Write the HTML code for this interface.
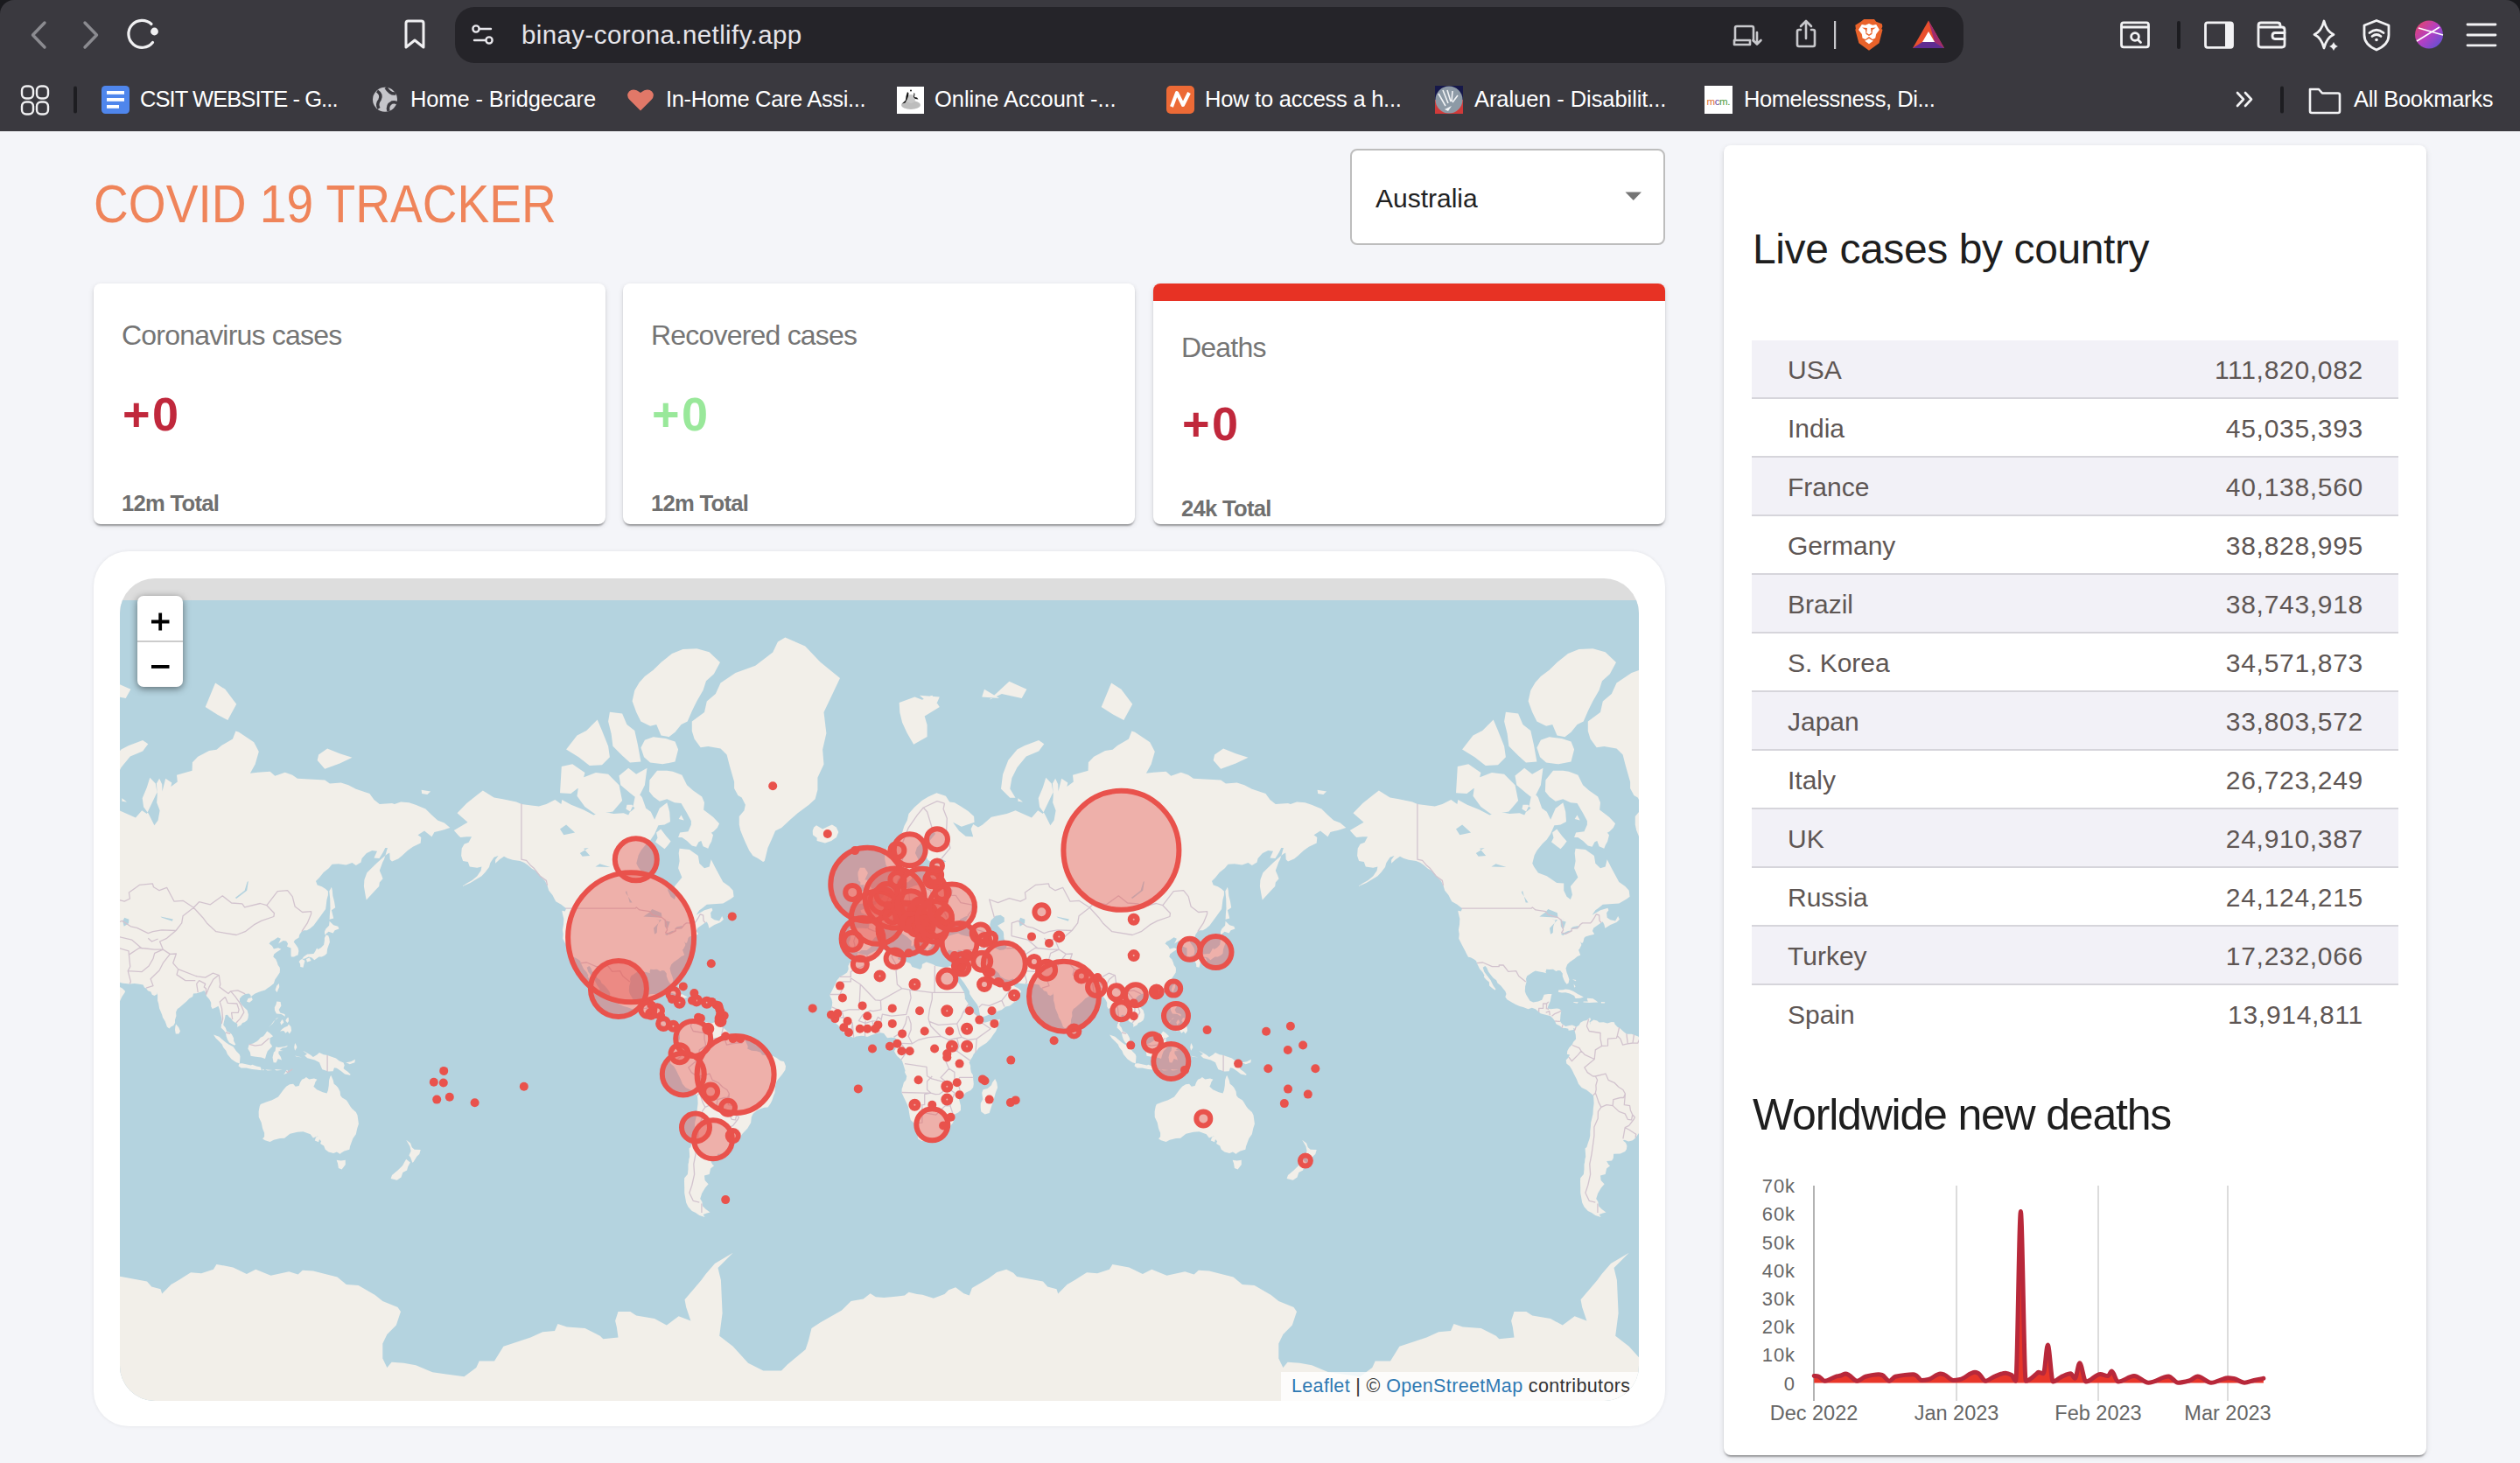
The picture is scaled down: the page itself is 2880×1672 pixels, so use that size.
<!DOCTYPE html>
<html><head><meta charset="utf-8"><title>COVID 19 TRACKER</title><style>
*{margin:0;padding:0;box-sizing:border-box}
html,body{width:2880px;height:1672px;overflow:hidden;background:#f4f5f9;font-family:"Liberation Sans",sans-serif;position:relative}
.a{position:absolute}
#chrome{left:0;top:0;width:2880px;height:150px;background:#3a393f;}
#chrome .corner{width:20px;height:20px;background:#1a1a1e}
#url{left:520px;top:8px;width:1724px;height:64px;background:#252429;border-radius:22px}
.bm{top:88px;height:50px;color:#fff;font-size:25.5px;line-height:50px;white-space:nowrap}
#title{left:107px;top:197px;font-size:62px;color:#ef845a;line-height:72px;white-space:nowrap;transform-origin:0 0;transform:scaleX(0.889)}
.card{background:#fff;border-radius:8px;box-shadow:0 4px 2px -2px rgba(0,0,0,0.2),0 2px 2px 0 rgba(0,0,0,0.14),0 2px 6px 0 rgba(0,0,0,0.12)}
.lbl{font-size:32px;color:#757575;letter-spacing:-0.8px;white-space:nowrap;line-height:40px}
.num{font-size:54px;font-weight:bold;line-height:60px;white-space:nowrap;letter-spacing:2.5px}
.tot{font-size:25.6px;font-weight:bold;color:#6f6f6f;letter-spacing:-0.7px;line-height:30px;white-space:nowrap}
#drop{left:1543px;top:170px;width:360px;height:110px;background:#fff;border:2.5px solid #bdbdbd;border-radius:8px}
#rc{left:1970px;top:166px;width:803px;height:1497px}
.h2{font-size:50px;color:#1e1e1e;white-space:nowrap;line-height:60px}
.row{left:2002px;width:739px;height:67px;border-bottom:2px solid #d6d5db}
.row.s{background:#f2f1f7}
.row span{position:absolute;top:0;line-height:67px;font-size:30px;color:#5e5654;white-space:nowrap}
.row span.n{letter-spacing:0.7px}
#mapcard{left:107px;top:630px;width:1796px;height:1000px;background:#fff;border-radius:40px;box-shadow:0 0 4px rgba(0,0,0,0.08)}
#map{left:137px;top:661px;width:1736px;height:940px;border-radius:40px 40px 40px 40px;overflow:hidden;background:#dddddd}
</style></head>
<body>
<div id="chrome" class="a">
<div class="a corner" style="left:0;top:0"></div><div class="a corner" style="right:0;top:0"></div>
<div class="a" style="left:0;top:0;width:2880px;height:150px;background:#3a393f;border-radius:16px 16px 0 0"></div>
<svg class="a" style="left:0;top:0" width="520" height="150" viewBox="0 0 520 150">
<path d="M51 26 L37.5 40 L51 54" fill="none" stroke="#8b8b90" stroke-width="3.4" stroke-linecap="round" stroke-linejoin="round"/>
<path d="M97 26 L110.5 40 L97 54" fill="none" stroke="#8b8b90" stroke-width="3.4" stroke-linecap="round" stroke-linejoin="round"/>
<path d="M174.5 48.5 A15.5 15.5 0 1 1 173 27.5" fill="none" stroke="#f0f0f2" stroke-width="3.2" stroke-linecap="round"/>
<circle cx="176.5" cy="36" r="4.4" fill="#f0f0f2"/>
<path d="M464 26.5 Q464 24 466.5 24 L481.5 24 Q484 24 484 26.5 L484 54 L474 46 L464 54 Z" fill="none" stroke="#f0f0f2" stroke-width="3" stroke-linejoin="round"/>
<g fill="none" stroke="#f0f0f2" stroke-width="2.4">
<rect x="25" y="98.5" width="13" height="14" rx="5"/><rect x="42" y="98.5" width="13" height="14" rx="5"/>
<rect x="25" y="116.5" width="13" height="14" rx="5"/><rect x="42" y="116.5" width="13" height="14" rx="5"/>
</g>
<rect x="84" y="98.5" width="4" height="31" rx="2" fill="#1d1d21"/>
<rect x="116" y="98" width="32" height="32" rx="4.5" fill="#4f86ec"/>
<rect x="122" y="104" width="20" height="3.8" fill="#fff"/><rect x="122" y="112" width="20" height="3.8" fill="#fff"/><rect x="122" y="120" width="14" height="3.8" fill="#fff"/>
<circle cx="440" cy="113.8" r="14" fill="#c5c5ca"/>
<path d="M431 104 Q437 108 434 114 Q430 119 433 124 M441 100 Q446 108 452 107 M444 127 Q442 120 448 117 Q452 116 454 118" fill="none" stroke="#3a393f" stroke-width="3.5"/>
</svg>
</div>
<div id="url" class="a"></div>
<svg class="a" style="left:530px;top:20px" width="50" height="40" viewBox="530 20 50 40">
<circle cx="544" cy="33" r="3.6" fill="none" stroke="#e8e7ec" stroke-width="2.4"/>
<path d="M548 33 L561 33" stroke="#e8e7ec" stroke-width="2.4" stroke-linecap="round"/>
<circle cx="559" cy="46" r="3.6" fill="none" stroke="#e8e7ec" stroke-width="2.4"/>
<path d="M542 46 L555 46" stroke="#e8e7ec" stroke-width="2.4" stroke-linecap="round"/>
</svg>
<div class="a" style="left:596px;top:20px;font-size:29.5px;line-height:40px;color:#e6e5ea;letter-spacing:0.4px;white-space:nowrap">binay-corona.netlify.app</div>
<svg class="a" style="left:1970px;top:15px" width="270" height="50" viewBox="1970 15 270 50">
<g fill="none" stroke="#c8c8cc" stroke-width="2.6" stroke-linejoin="round" stroke-linecap="round">
<path d="M2004 47 L2004 32 Q2004 30 2002 30 L1985 30 Q1983 30 1983 32 L1983 46"/>
<path d="M1982 46 L2000 46 L2000 51 L1982 51 Z"/>
<path d="M2008 37 L2008 50 M2003.5 46 L2008 50.5 L2012.5 46"/>
<path d="M2058 34 L2056 34 Q2054 34 2054 36 L2054 51 Q2054 53 2056 53 L2072 53 Q2074 53 2074 51 L2074 36 Q2074 34 2072 34 L2070 34"/>
<path d="M2064 44 L2064 24 M2058 30 L2064 24 L2070 30"/>
</g>
<rect x="2096" y="24" width="2.2" height="32" fill="#c8c8cc"/>
<path d="M2130.2,22 L2142,22 L2144.2,24.7 L2150.7,27.3 L2151.4,30 L2150.3,33.1 L2151.5,34.1 L2147.6,49.2 L2136,57.7 L2124.4,49.2 L2120.3,34.1 L2120.9,32.8 L2120.3,28.7 L2126.4,24.9 Z" fill="#e9622a"/>
<path d="M2124,34.1 L2127.8,28 L2131.9,28.7 L2136,27 L2140.1,28.7 L2144.2,28 L2147.9,34.1 L2144.2,38.9 L2143.2,43.4 L2140.1,45.1 L2136,42 L2131.9,45.1 L2128.5,43.4 L2127.8,38.9 Z" fill="#fff"/>
<path d="M2128.1,31.4 L2133.9,32.1 L2133.2,37.6 L2136,39.6 L2138.7,37.6 L2138,32.1 L2143.8,31.4 L2140.1,34.1 L2139.4,38.9 L2136,41 L2132.6,38.9 L2131.9,34.1 Z" fill="#e9622a"/>
<path d="M2131.2,46.8 L2136,44.1 L2140.8,46.8 L2136,50.2 Z" fill="#fff"/>
<path d="M2204 23.5 L2222 55 L2186 55 Z" fill="#e9502e"/>
<path d="M2204 23.5 L2222 55 L2211 48 Z" fill="#9e2a70"/>
<path d="M2186 55 L2222 55 L2211 48 L2197 48 Z" fill="#5f2c91"/>
<path d="M2204 36 L2211 48 L2197 48 Z" fill="#fff"/>
</svg>
<svg class="a" style="left:2410px;top:15px" width="470" height="50" viewBox="2410 15 470 50">
<g fill="none" stroke="#f2f2f4" stroke-width="2.8" stroke-linejoin="round" stroke-linecap="round">
<rect x="2424.5" y="25.8" width="31" height="28" rx="2.5"/>
<path d="M2425 31 L2455 31"/>
<circle cx="2440" cy="42" r="4.4"/><path d="M2443.5 45.5 L2446.5 48.5"/>
<rect x="2520.5" y="25.8" width="31" height="28.5" rx="2.5"/>
<path d="M2581 29 Q2581 26 2584 26 L2603 26 Q2606 26 2606 29 L2606 31 M2581 29 L2581 51 Q2581 54 2584 54 L2608 54 Q2611 54 2611 51 L2611 34 Q2611 31 2608 31 L2583 31"/>
<path d="M2611 37.5 L2600 37.5 Q2597 37.5 2597 41 Q2597 44.5 2600 44.5 L2611 44.5"/>
<path d="M2656 24 Q2659 36 2667 39.5 Q2659 43 2656 55 Q2653 43 2645 39.5 Q2653 36 2656 24 Z"/>
<path d="M2716 23.5 L2702 29 L2702 40 Q2702 51 2716 57 Q2730 51 2730 40 L2730 29 Z"/>
<path d="M2708 37.5 Q2716 31 2724 37.5 M2711 41.5 Q2716 37.5 2721 41.5"/>
<path d="M2820 28 L2852 28 M2820 40 L2852 40 M2820 51.8 L2852 51.8"/>
</g>
<rect x="2488" y="24" width="4" height="32" rx="2" fill="#1c1c20"/>
<rect x="2543" y="27" width="8" height="26" fill="#f2f2f4"/>
<path d="M2667 48 Q2668.5 52 2672 53 Q2668.5 54 2667 58 Q2665.5 54 2662 53 Q2665.5 52 2667 48 Z" fill="#f2f2f4"/>
<circle cx="2716" cy="45.5" r="1.8" fill="#f2f2f4"/>
<defs><linearGradient id="pg" x1="0" y1="0" x2="1" y2="1"><stop offset="0" stop-color="#e8455f"/><stop offset="0.5" stop-color="#b43fc4"/><stop offset="1" stop-color="#4f55d6"/></linearGradient></defs>
<circle cx="2776" cy="39.5" r="16" fill="url(#pg)"/>
<path d="M2762 47 L2788 31 M2764 32 L2792 40" stroke="#fff" stroke-width="1.6"/>
</svg>
<div class="a bm" style="left:160px;letter-spacing:-0.93px">CSIT WEBSITE - G...</div>
<div class="a bm" style="left:469px;letter-spacing:-0.12px">Home - Bridgecare</div>
<div class="a bm" style="left:761px;letter-spacing:-0.35px">In-Home Care Assi...</div>
<div class="a bm" style="left:1068px;letter-spacing:-0.04px">Online Account -...</div>
<div class="a bm" style="left:1377px;letter-spacing:-0.25px">How to access a h...</div>
<div class="a bm" style="left:1685px;letter-spacing:-0.08px">Araluen - Disabilit...</div>
<div class="a bm" style="left:1993px;letter-spacing:-0.44px">Homelessness, Di...</div>
<div class="a bm" style="left:2690px;letter-spacing:-0.29px">All Bookmarks</div>
<svg class="a" style="left:700px;top:90px" width="2200" height="50" viewBox="700 90 2200 50">
<path d="M732 126.5 L719.5 114 Q715 109 719 104.5 Q724 100 732 106 Q740 100 745 104.5 Q749 109 744.5 114 Z" fill="#e17868"/>
<rect x="1025" y="99" width="31" height="31" fill="#fff"/>
<ellipse cx="1041" cy="120" rx="11" ry="5" fill="#bdbdbd"/>
<ellipse cx="1041" cy="113" rx="5" ry="5" fill="#c8c8c8"/>
<path d="M1037 105 L1038.5 106.5 L1038 110 L1036.5 114 L1034.5 117.5 L1031 118.5 L1035 114.5 L1035.5 110 Z" fill="#111"/>
<path d="M1044.5 106 L1045.5 107 L1045 111 L1048 111.5 L1049.5 113.5 L1046 113 L1044 111 Z" fill="#111"/>
<circle cx="1041" cy="103.5" r="1" fill="#111"/>
<rect x="1333" y="98" width="32" height="32" rx="5" fill="#ec6a36"/>
<path d="M1339 122 L1345 106 L1352 120 L1359 106" fill="none" stroke="#fff" stroke-width="4" stroke-linejoin="round"/>
<rect x="1640" y="98" width="32" height="16" fill="#16184a"/><rect x="1640" y="114" width="32" height="16" fill="#d03a3a"/>
<circle cx="1656" cy="114" r="15.5" fill="#8d9aa6"/>
<path d="M1644 107 L1652 121 M1649 103 L1655 118 M1654 103 L1658 116 M1660 104 L1659 116 M1666 109 L1660 117" stroke="#f2f4f6" stroke-width="1.6"/>
<path d="M1651 125 L1659 121 L1655 127 Z" fill="#f2f4f6"/>
<rect x="1948" y="98" width="32" height="32" fill="#fff"/>
<text x="1950.5" y="120" font-family="Liberation Sans" font-size="11.5" letter-spacing="-0.4"><tspan fill="#e07030">m</tspan><tspan fill="#6a4aa0">c</tspan><tspan fill="#4a9a3a">m.</tspan></text>
<path d="M2557 106 L2564 113.5 L2557 121 M2566 106 L2573 113.5 L2566 121" fill="none" stroke="#f2f2f4" stroke-width="2.6" stroke-linecap="round" stroke-linejoin="round"/>
<rect x="2606" y="98.5" width="4" height="31" rx="2" fill="#1d1d21"/>
<path d="M2640 102 L2650 102 L2654 106.5 L2672 106.5 Q2674 106.5 2674 108.5 L2674 127 Q2674 129 2672 129 L2642 129 Q2640 129 2640 127 Z" fill="none" stroke="#f2f2f4" stroke-width="2.6" stroke-linejoin="round"/>
</svg>
<div id="title" class="a">COVID 19 TRACKER</div>
<div id="drop" class="a"><div class="a" style="left:27px;top:35px;font-size:30px;line-height:40px;color:#212121">Australia</div><svg class="a" style="left:311px;top:46px" width="22" height="12" viewBox="0 0 22 12"><path d="M1.5 1.5 L20 1.5 L10.75 11 Z" fill="#757575"/></svg></div>
<div class="a card" style="left:107px;top:324px;width:585px;height:275px;overflow:hidden">
<div class="a lbl" style="left:32px;top:39px">Coronavirus cases</div>
<div class="a num" style="left:33px;top:119px;color:#c0283c">+0</div>
<div class="a tot" style="left:32px;top:236px">12m Total</div>
</div>
<div class="a card" style="left:712px;top:324px;width:585px;height:275px;overflow:hidden">
<div class="a lbl" style="left:32px;top:39px">Recovered cases</div>
<div class="a num" style="left:33px;top:119px;color:#99e89a">+0</div>
<div class="a tot" style="left:32px;top:236px">12m Total</div>
</div>
<div class="a card" style="left:1318px;top:324px;width:585px;height:275px;overflow:hidden">
<div class="a" style="left:0;top:0;width:585px;height:20px;background:#e73224"></div>
<div class="a lbl" style="left:32px;top:53px">Deaths</div>
<div class="a num" style="left:33px;top:130px;color:#c0283c">+0</div>
<div class="a tot" style="left:32px;top:242px">24k Total</div>
</div>
<div id="rc" class="a card"></div>
<div class="a h2" style="left:2003px;top:255px;font-size:48px;letter-spacing:-0.4px">Live cases by country</div>
<div class="a row s" style="top:389px"><span style="left:41px">USA</span><span class="n" style="right:40px">111,820,082</span></div>
<div class="a row" style="top:456px"><span style="left:41px">India</span><span class="n" style="right:40px">45,035,393</span></div>
<div class="a row s" style="top:523px"><span style="left:41px">France</span><span class="n" style="right:40px">40,138,560</span></div>
<div class="a row" style="top:590px"><span style="left:41px">Germany</span><span class="n" style="right:40px">38,828,995</span></div>
<div class="a row s" style="top:657px"><span style="left:41px">Brazil</span><span class="n" style="right:40px">38,743,918</span></div>
<div class="a row" style="top:724px"><span style="left:41px">S. Korea</span><span class="n" style="right:40px">34,571,873</span></div>
<div class="a row s" style="top:791px"><span style="left:41px">Japan</span><span class="n" style="right:40px">33,803,572</span></div>
<div class="a row" style="top:858px"><span style="left:41px">Italy</span><span class="n" style="right:40px">26,723,249</span></div>
<div class="a row s" style="top:925px"><span style="left:41px">UK</span><span class="n" style="right:40px">24,910,387</span></div>
<div class="a row" style="top:992px"><span style="left:41px">Russia</span><span class="n" style="right:40px">24,124,215</span></div>
<div class="a row s" style="top:1059px"><span style="left:41px">Turkey</span><span class="n" style="right:40px">17,232,066</span></div>
<div class="a row" style="top:1126px;border-bottom:none"><span style="left:41px">Spain</span><span class="n" style="right:40px">13,914,811</span></div>
<div class="a h2" style="left:2003px;top:1244px;font-size:50px;letter-spacing:-1.2px">Worldwide new deaths</div>
<svg class="a" style="left:1990px;top:1330px" width="640" height="310" viewBox="1990 1330 640 310">
<rect x="2235" y="1355" width="2" height="246" fill="#dcdcdc"/>
<rect x="2397" y="1355" width="2" height="246" fill="#dcdcdc"/>
<rect x="2545" y="1355" width="2" height="246" fill="#dcdcdc"/>
<rect x="2072" y="1355" width="2" height="246" fill="#b3b3b3"/>
<text x="2052" y="1588.6" text-anchor="end" font-family="Liberation Sans" font-size="22" letter-spacing="0.9" fill="#666">0</text>
<text x="2052" y="1556.4" text-anchor="end" font-family="Liberation Sans" font-size="22" letter-spacing="0.9" fill="#666">10k</text>
<text x="2052" y="1524.2" text-anchor="end" font-family="Liberation Sans" font-size="22" letter-spacing="0.9" fill="#666">20k</text>
<text x="2052" y="1492.0" text-anchor="end" font-family="Liberation Sans" font-size="22" letter-spacing="0.9" fill="#666">30k</text>
<text x="2052" y="1459.8" text-anchor="end" font-family="Liberation Sans" font-size="22" letter-spacing="0.9" fill="#666">40k</text>
<text x="2052" y="1427.6" text-anchor="end" font-family="Liberation Sans" font-size="22" letter-spacing="0.9" fill="#666">50k</text>
<text x="2052" y="1395.4" text-anchor="end" font-family="Liberation Sans" font-size="22" letter-spacing="0.9" fill="#666">60k</text>
<text x="2052" y="1363.2" text-anchor="end" font-family="Liberation Sans" font-size="22" letter-spacing="0.9" fill="#666">70k</text>
<text x="2073" y="1622.5" text-anchor="middle" font-family="Liberation Sans" font-size="23.5" fill="#666">Dec 2022</text>
<text x="2236" y="1622.5" text-anchor="middle" font-family="Liberation Sans" font-size="23.5" fill="#666">Jan 2023</text>
<text x="2398" y="1622.5" text-anchor="middle" font-family="Liberation Sans" font-size="23.5" fill="#666">Feb 2023</text>
<text x="2546" y="1622.5" text-anchor="middle" font-family="Liberation Sans" font-size="23.5" fill="#666">Mar 2023</text>
<path d="M2073.2,1572.4 C2074.8,1572.6 2076.4,1572.7 2078.0,1573.0 C2080.5,1573.5 2083.0,1578.2 2085.5,1578.2 C2089.6,1578.2 2093.7,1574.4 2097.8,1573.3 C2099.9,1572.7 2101.9,1572.6 2104.0,1572.0 C2105.8,1571.5 2107.5,1570.0 2109.3,1570.0 C2110.5,1570.0 2111.8,1570.9 2113.0,1571.5 C2116.1,1573.1 2119.3,1578.2 2122.4,1578.2 C2125.6,1578.2 2128.8,1574.1 2132.0,1573.3 C2137.0,1572.0 2142.0,1570.8 2147.0,1570.8 C2148.3,1570.8 2149.7,1571.1 2151.0,1571.5 C2153.8,1572.3 2156.5,1578.2 2159.3,1578.2 C2161.5,1578.2 2163.8,1573.8 2166.0,1573.3 C2172.8,1571.9 2179.6,1570.8 2186.4,1570.8 C2187.6,1570.8 2188.8,1571.4 2190.0,1572.0 C2192.1,1573.0 2194.1,1577.4 2196.2,1577.4 C2198.8,1577.4 2201.4,1577.0 2204.0,1576.5 C2208.5,1575.7 2213.1,1570.0 2217.6,1570.0 C2219.1,1570.0 2220.5,1570.5 2222.0,1571.0 C2225.4,1572.1 2228.9,1577.4 2232.3,1577.4 C2234.9,1577.4 2237.4,1577.0 2240.0,1576.5 C2245.7,1575.4 2251.3,1568.3 2257.0,1568.3 C2258.3,1568.3 2259.7,1568.9 2261.0,1569.5 C2263.7,1570.8 2266.5,1578.2 2269.2,1578.2 C2272.5,1578.2 2275.7,1574.6 2279.0,1573.3 C2283.4,1571.6 2287.8,1569.2 2292.2,1569.2 C2294.5,1569.2 2296.7,1570.3 2299.0,1571.5 C2300.6,1572.4 2302.1,1578.2 2303.7,1578.2 C2305.6,1578.2 2307.5,1384.6 2309.4,1384.6 C2311.3,1384.6 2313.3,1578.2 2315.2,1578.2 C2319.3,1578.2 2323.4,1573.2 2327.5,1570.0 C2328.1,1569.5 2328.8,1568.2 2329.4,1568.2 C2331.4,1568.2 2333.4,1569.8 2335.4,1569.8 C2337.0,1569.8 2338.7,1537.1 2340.3,1537.1 C2342.3,1537.1 2344.3,1579.1 2346.3,1579.1 C2349.7,1579.1 2353.2,1574.6 2356.6,1573.1 C2359.9,1571.7 2363.2,1569.8 2366.5,1569.8 C2368.1,1569.8 2369.8,1575.3 2371.4,1575.3 C2373.2,1575.3 2375.0,1557.8 2376.8,1557.8 C2379.2,1557.8 2381.5,1579.1 2383.9,1579.1 C2389.4,1579.1 2394.8,1570.4 2400.3,1570.4 C2403.2,1570.4 2406.1,1572.6 2409.0,1572.6 C2410.5,1572.6 2411.9,1567.1 2413.4,1567.1 C2415.8,1567.1 2418.1,1579.1 2420.5,1579.1 C2426.7,1579.1 2432.8,1572.6 2439.0,1572.6 C2444.5,1572.6 2449.9,1580.2 2455.4,1580.2 C2463.0,1580.2 2470.7,1573.1 2478.3,1573.1 C2481.9,1573.1 2485.6,1580.2 2489.2,1580.2 C2493.4,1580.2 2497.6,1579.1 2501.8,1578.0 C2505.1,1577.2 2508.3,1573.1 2511.6,1573.1 C2516.7,1573.1 2521.8,1580.2 2526.9,1580.2 C2533.4,1580.2 2540.0,1574.7 2546.5,1574.7 C2548.7,1574.7 2550.8,1575.1 2553.0,1575.5 C2557.0,1576.3 2561.1,1580.2 2565.1,1580.2 C2568.7,1580.2 2572.4,1578.3 2576.0,1577.5 C2579.6,1576.7 2583.3,1576.0 2586.9,1575.3 L2586.9,1580.6 L2073.2,1580.6 Z" fill="#e8362a"/>
<path d="M2073.2,1572.4 C2074.8,1572.6 2076.4,1572.7 2078.0,1573.0 C2080.5,1573.5 2083.0,1578.2 2085.5,1578.2 C2089.6,1578.2 2093.7,1574.4 2097.8,1573.3 C2099.9,1572.7 2101.9,1572.6 2104.0,1572.0 C2105.8,1571.5 2107.5,1570.0 2109.3,1570.0 C2110.5,1570.0 2111.8,1570.9 2113.0,1571.5 C2116.1,1573.1 2119.3,1578.2 2122.4,1578.2 C2125.6,1578.2 2128.8,1574.1 2132.0,1573.3 C2137.0,1572.0 2142.0,1570.8 2147.0,1570.8 C2148.3,1570.8 2149.7,1571.1 2151.0,1571.5 C2153.8,1572.3 2156.5,1578.2 2159.3,1578.2 C2161.5,1578.2 2163.8,1573.8 2166.0,1573.3 C2172.8,1571.9 2179.6,1570.8 2186.4,1570.8 C2187.6,1570.8 2188.8,1571.4 2190.0,1572.0 C2192.1,1573.0 2194.1,1577.4 2196.2,1577.4 C2198.8,1577.4 2201.4,1577.0 2204.0,1576.5 C2208.5,1575.7 2213.1,1570.0 2217.6,1570.0 C2219.1,1570.0 2220.5,1570.5 2222.0,1571.0 C2225.4,1572.1 2228.9,1577.4 2232.3,1577.4 C2234.9,1577.4 2237.4,1577.0 2240.0,1576.5 C2245.7,1575.4 2251.3,1568.3 2257.0,1568.3 C2258.3,1568.3 2259.7,1568.9 2261.0,1569.5 C2263.7,1570.8 2266.5,1578.2 2269.2,1578.2 C2272.5,1578.2 2275.7,1574.6 2279.0,1573.3 C2283.4,1571.6 2287.8,1569.2 2292.2,1569.2 C2294.5,1569.2 2296.7,1570.3 2299.0,1571.5 C2300.6,1572.4 2302.1,1578.2 2303.7,1578.2 C2305.6,1578.2 2307.5,1384.6 2309.4,1384.6 C2311.3,1384.6 2313.3,1578.2 2315.2,1578.2 C2319.3,1578.2 2323.4,1573.2 2327.5,1570.0 C2328.1,1569.5 2328.8,1568.2 2329.4,1568.2 C2331.4,1568.2 2333.4,1569.8 2335.4,1569.8 C2337.0,1569.8 2338.7,1537.1 2340.3,1537.1 C2342.3,1537.1 2344.3,1579.1 2346.3,1579.1 C2349.7,1579.1 2353.2,1574.6 2356.6,1573.1 C2359.9,1571.7 2363.2,1569.8 2366.5,1569.8 C2368.1,1569.8 2369.8,1575.3 2371.4,1575.3 C2373.2,1575.3 2375.0,1557.8 2376.8,1557.8 C2379.2,1557.8 2381.5,1579.1 2383.9,1579.1 C2389.4,1579.1 2394.8,1570.4 2400.3,1570.4 C2403.2,1570.4 2406.1,1572.6 2409.0,1572.6 C2410.5,1572.6 2411.9,1567.1 2413.4,1567.1 C2415.8,1567.1 2418.1,1579.1 2420.5,1579.1 C2426.7,1579.1 2432.8,1572.6 2439.0,1572.6 C2444.5,1572.6 2449.9,1580.2 2455.4,1580.2 C2463.0,1580.2 2470.7,1573.1 2478.3,1573.1 C2481.9,1573.1 2485.6,1580.2 2489.2,1580.2 C2493.4,1580.2 2497.6,1579.1 2501.8,1578.0 C2505.1,1577.2 2508.3,1573.1 2511.6,1573.1 C2516.7,1573.1 2521.8,1580.2 2526.9,1580.2 C2533.4,1580.2 2540.0,1574.7 2546.5,1574.7 C2548.7,1574.7 2550.8,1575.1 2553.0,1575.5 C2557.0,1576.3 2561.1,1580.2 2565.1,1580.2 C2568.7,1580.2 2572.4,1578.3 2576.0,1577.5 C2579.6,1576.7 2583.3,1576.0 2586.9,1575.3" fill="none" stroke="#b8283a" stroke-width="5" stroke-linejoin="round" stroke-linecap="round"/>
</svg>
<div id="mapcard" class="a"></div>
<div id="map" class="a"><svg class="a" style="left:0;top:0" width="1736" height="940" viewBox="137 661 1736 940">
<rect x="137" y="686" width="1736" height="915" fill="#b4d3df"/>
<g transform="translate(-1024,0)"><path d="M518.8,948.9 534.5,939.7 522.5,929.3 533.4,918.1 544.7,908.9 551.8,903.6 564.6,911.5 574.6,913.2 590.2,916.5 595.9,919.0 607.3,920.6 615.8,921.4 624.4,919.0 634.3,914.0 641.4,919.0 642.3,914.0 652.8,919.8 667.0,925.4 678.4,931.6 689.8,927.7 701.2,930.0 712.6,929.3 718.2,931.6 723.9,919.8 727.3,902.7 733.9,911.5 738.2,923.8 743.8,927.7 748.1,936.8 753.8,923.8 762.3,917.3 765.2,927.7 766.0,939.0 759.5,942.6 752.4,943.3 748.1,953.0 743.8,959.6 739.0,964.1 732.5,972.1 729.6,977.5 727.3,986.7 729.1,990.6 733.9,997.6 743.8,1001.3 755.2,1008.9 763.2,1009.4 763.2,1017.7 766.6,1024.7 770.9,1028.0 772.9,1022.4 770.9,1012.9 779.4,1002.8 775.1,992.2 776.6,983.9 775.7,975.1 776.6,969.7 787.9,970.9 797.9,978.1 799.3,986.7 805.0,992.2 810.7,990.6 812.7,982.2 817.8,992.2 822.1,1000.2 826.3,1007.9 833.4,1012.9 837.7,1017.7 838.6,1024.7 834.9,1027.5 826.3,1032.5 815.0,1033.3 807.8,1033.8 802.2,1038.2 799.3,1040.3 795.6,1045.8 805.0,1040.3 813.5,1037.7 814.4,1040.3 812.1,1043.3 812.7,1048.7 816.4,1051.2 822.1,1052.4 825.2,1047.1 826.9,1050.8 823.5,1054.1 816.4,1056.9 810.4,1060.8 809.3,1056.5 807.8,1053.6 805.9,1054.5 801.3,1057.7 797.3,1060.4 795.9,1063.9 798.2,1067.4 796.2,1068.2 792.8,1068.9 787.9,1070.4 786.5,1071.9 785.4,1076.4 784.0,1078.2 782.2,1076.0 783.4,1080.0 781.1,1084.4 780.0,1085.4 782.2,1091.4 778.8,1093.1 775.1,1095.9 770.0,1099.6 767.2,1102.3 765.5,1106.7 766.6,1111.6 767.7,1114.2 769.4,1119.3 768.6,1123.4 766.6,1124.7 764.6,1122.2 763.2,1119.6 761.8,1115.8 761.8,1112.6 759.2,1109.3 756.6,1109.0 754.4,1110.0 751.0,1107.7 746.7,1108.0 743.3,1107.7 742.4,1110.9 743.3,1112.2 739.6,1111.3 735.3,1110.6 730.8,1109.6 727.9,1110.9 724.5,1113.2 721.1,1115.5 720.0,1118.7 720.5,1122.2 719.1,1127.2 718.8,1133.1 720.2,1136.8 722.8,1141.0 724.5,1143.7 728.2,1145.5 733.9,1144.6 738.2,1142.8 739.6,1139.5 740.7,1136.8 745.3,1135.9 749.5,1135.9 748.7,1138.9 747.8,1144.0 746.1,1147.9 744.4,1152.4 748.1,1153.3 755.2,1152.4 758.1,1153.0 760.3,1155.3 759.5,1159.7 759.2,1164.1 758.9,1167.0 760.9,1169.9 763.8,1171.9 765.2,1173.1 769.4,1171.9 772.9,1171.4 776.3,1173.1 777.1,1173.9 776.6,1176.0 774.0,1175.1 774.6,1177.1 768.6,1177.7 768.3,1175.7 765.2,1175.1 761.2,1174.8 759.2,1172.8 754.4,1170.2 753.2,1167.0 750.4,1163.5 748.1,1161.2 745.3,1160.6 740.4,1159.2 736.7,1158.3 734.5,1156.2 730.8,1153.3 726.8,1151.8 722.5,1153.3 716.8,1150.9 712.8,1150.0 708.3,1147.9 704.6,1146.1 701.2,1144.0 698.3,1142.2 696.3,1139.2 697.5,1135.9 696.3,1132.8 694.4,1130.6 691.2,1126.6 687.5,1123.4 686.1,1120.3 682.7,1117.7 679.8,1114.2 677.0,1110.6 675.3,1106.3 673.3,1104.0 670.7,1105.7 672.2,1110.6 675.9,1115.5 679.6,1120.3 682.1,1125.6 683.5,1127.8 685.5,1130.6 684.4,1131.6 681.6,1129.4 678.1,1126.6 677.9,1122.5 674.4,1119.6 671.9,1116.4 672.4,1114.8 670.5,1111.3 667.0,1107.3 665.1,1103.3 663.9,1100.7 663.1,1098.3 660.5,1096.2 659.1,1095.6 656.8,1094.2 654.0,1093.8 652.0,1090.0 650.3,1086.5 648.6,1083.3 647.1,1080.4 644.9,1076.0 643.2,1072.7 643.7,1067.4 642.9,1062.8 644.0,1056.5 644.3,1050.0 642.6,1042.9 642.3,1040.8 645.7,1041.6 647.1,1038.2 641.4,1033.8 635.2,1030.2 633.5,1027.0 631.5,1022.9 627.2,1017.7 625.5,1011.9 623.0,1006.9 617.8,1001.3 613.6,996.0 607.9,992.8 603.0,988.4 599.3,986.1 594.5,983.9 586.0,982.7 580.3,981.0 576.0,978.7 570.9,982.2 566.1,986.7 566.1,982.7 569.5,978.1 564.6,979.8 560.4,986.1 559.0,991.1 554.4,997.1 550.4,1001.3 543.3,1005.4 537.6,1008.9 531.9,1011.4 528.2,1012.9 533.4,1009.4 539.6,1005.9 545.3,1001.3 549.6,994.9 550.4,990.6 545.3,991.7 536.8,990.6 534.8,985.0 529.1,983.9 527.1,978.1 527.7,969.7 530.5,964.7 535.6,962.8 539.0,956.3 533.4,956.3 526.2,957.0 523.4,954.3 518.8,948.9ZM777.1,1173.9 780.8,1171.6 782.2,1168.8 785.7,1166.7 789.4,1166.1 793.1,1163.0 794.2,1165.3 792.5,1167.3 793.6,1171.4 793.3,1168.2 797.3,1165.6 801.3,1166.4 803.6,1168.5 808.7,1168.2 813.0,1169.6 817.8,1167.9 820.9,1168.2 821.5,1170.5 824.9,1173.9 826.9,1174.8 831.5,1179.1 834.9,1181.7 840.6,1181.7 843.4,1182.8 848.2,1184.5 851.1,1187.7 853.1,1192.2 854.8,1195.7 854.2,1198.5 859.0,1200.8 864.7,1201.3 869.3,1202.8 871.0,1205.6 877.5,1206.5 883.2,1206.8 887.5,1209.0 891.8,1212.2 896.0,1213.3 898.0,1218.5 897.4,1222.8 894.0,1227.7 890.9,1231.4 887.5,1235.8 886.1,1241.7 885.5,1249.1 884.1,1252.1 882.4,1257.5 880.7,1261.1 877.5,1265.4 873.3,1265.8 869.0,1267.3 865.3,1268.9 860.5,1272.9 858.8,1276.7 858.2,1283.1 854.2,1289.7 848.8,1295.3 845.1,1300.4 842.0,1303.2 837.1,1304.5 832.6,1302.8 830.9,1303.5 834.0,1305.9 835.4,1309.4 834.9,1313.4 833.2,1315.9 827.8,1318.4 820.1,1318.8 819.8,1323.6 818.1,1326.6 812.1,1327.0 814.4,1331.1 816.1,1332.3 812.1,1335.4 810.7,1342.1 805.0,1343.4 805.6,1349.1 809.6,1353.3 805.9,1357.5 802.2,1363.7 800.2,1370.0 802.4,1373.6 803.0,1378.4 807.0,1382.2 811.5,1385.6 807.8,1386.6 803.6,1388.1 805.6,1391.1 799.3,1389.1 795.0,1386.1 790.8,1384.1 786.5,1379.3 784.2,1374.6 783.4,1370.0 782.2,1363.2 782.2,1356.7 782.0,1350.3 782.2,1346.2 785.9,1342.1 786.5,1336.2 786.5,1330.4 787.1,1328.5 787.4,1324.7 788.2,1322.1 787.9,1317.3 787.6,1312.6 789.4,1310.9 790.8,1306.6 792.5,1301.4 793.3,1298.0 793.3,1293.0 793.9,1288.0 794.2,1283.1 795.3,1278.3 796.5,1273.2 796.8,1267.6 797.6,1261.1 797.3,1255.4 797.0,1252.1 793.9,1249.4 789.4,1245.8 783.7,1243.1 780.0,1238.7 777.7,1232.9 774.6,1227.1 772.6,1222.8 770.0,1218.5 766.3,1215.6 765.7,1211.6 768.6,1208.5 770.0,1205.6 766.9,1204.8 767.2,1201.3 769.2,1197.6 770.9,1195.7 772.9,1193.7 774.0,1191.1 777.1,1187.4 776.8,1182.8 775.7,1178.5 776.8,1175.4 777.1,1173.9ZM897.4,728.5 920.2,738.4 937.3,756.6 960.0,774.9 951.5,793.1 941.5,814.1 944.4,838.1 940.1,856.7 941.5,873.5 934.4,888.7 934.4,902.7 931.6,913.2 924.5,919.8 911.7,929.3 903.1,936.8 893.2,946.1 886.1,949.6 881.8,959.6 877.5,969.1 875.3,978.1 873.8,983.9 872.1,985.0 866.2,981.0 860.5,978.1 856.2,972.1 851.9,962.8 849.1,956.3 846.2,948.9 844.8,942.6 844.8,933.1 850.5,926.2 851.9,919.8 847.7,911.5 843.4,908.9 839.1,900.9 839.1,893.5 836.3,883.8 833.4,873.5 830.6,862.5 823.5,855.5 809.3,853.1 800.7,854.3 793.6,844.5 790.8,835.4 790.8,824.4 805.0,814.1 807.8,801.5 817.8,793.1 823.5,780.5 840.6,769.0 863.3,760.8 883.2,745.4 888.9,733.5ZM768.9,881.8 779.4,885.8 785.1,897.3 792.2,903.6 802.2,910.6 805.0,917.3 804.1,925.4 815.0,933.8 822.1,941.2 819.8,946.1 815.5,950.3 810.7,953.0 805.0,946.8 810.7,948.9 815.0,954.3 813.2,961.5 810.7,966.0 809.3,969.7 803.6,967.2 801.3,960.9 798.5,962.2 795.6,967.8 790.8,966.6 785.1,960.9 779.4,957.0 775.1,957.0 777.1,951.6 786.5,950.3 789.9,942.6 789.9,938.3 785.1,929.3 778.5,918.1 770.9,917.3 762.3,913.2 753.8,915.7 746.7,910.6 741.9,904.5 742.4,891.6 751.0,880.8 762.3,880.8ZM716.5,919.8 715.4,924.6 720.5,927.7 725.4,923.8 722.2,919.8ZM755.2,947.5 761.5,955.7 766.6,961.5 762.9,966.6 759.5,970.3 753.8,966.0 749.0,962.2 751.5,957.6 750.1,951.6ZM778.5,931.6 781.7,937.5 775.7,936.1ZM950.9,942.6 955.8,945.4 958.3,951.0 955.8,957.0 950.1,960.9 943.0,963.4 933.6,960.9 933.6,957.6 929.0,954.3 928.7,949.6 930.2,945.4 933.0,943.3 940.1,947.5 945.8,944.7ZM970.0,1078.6 972.0,1081.8 971.4,1085.1 975.7,1084.7 979.1,1086.8 981.6,1088.3 984.5,1086.1 990.7,1086.1 994.4,1082.9 997.6,1078.9 996.1,1076.0 999.6,1071.6 1003.3,1068.9 1006.4,1065.5 1005.8,1062.0 1008.1,1060.8 1012.4,1061.6 1015.5,1062.4 1017.8,1060.0 1022.3,1057.3 1025.4,1058.8 1026.9,1062.8 1028.9,1065.1 1032.0,1067.4 1035.4,1069.7 1037.4,1071.2 1039.7,1073.4 1041.9,1075.6 1041.4,1080.8 1042.5,1081.8 1043.9,1079.7 1045.6,1077.5 1044.2,1073.8 1045.9,1072.3 1049.3,1074.9 1048.2,1071.9 1045.1,1070.0 1043.1,1067.0 1037.1,1064.3 1035.4,1060.4 1032.3,1058.1 1032.0,1053.2 1034.3,1052.0 1036.3,1052.4 1036.3,1055.3 1037.7,1054.1 1040.5,1057.7 1043.6,1060.8 1048.5,1064.3 1051.6,1066.6 1052.5,1069.3 1052.2,1072.7 1054.2,1075.6 1056.7,1079.7 1059.0,1080.4 1057.6,1082.9 1058.7,1085.8 1060.7,1087.2 1061.9,1083.6 1063.0,1083.3 1064.4,1081.5 1065.3,1080.0 1062.1,1078.2 1062.1,1076.0 1062.1,1071.9 1063.8,1073.4 1065.3,1072.7 1066.7,1070.8 1069.5,1070.8 1071.2,1071.9 1071.8,1073.4 1071.5,1076.0 1072.9,1078.9 1073.2,1080.0 1074.1,1083.3 1074.9,1085.1 1077.2,1086.1 1079.8,1086.5 1082.3,1087.9 1084.3,1085.4 1088.0,1086.8 1090.3,1088.3 1093.1,1087.9 1095.4,1085.8 1098.3,1086.1 1099.7,1086.5 1098.8,1089.0 1099.1,1091.4 1098.0,1095.9 1096.6,1099.6 1095.7,1102.3 1094.3,1104.7 1089.7,1109.0 1089.7,1110.3 1091.4,1113.9 1094.3,1116.1 1095.7,1112.2 1096.3,1110.6 1095.7,1115.2 1098.3,1118.7 1102.0,1123.4 1104.8,1128.1 1107.9,1132.8 1108.2,1135.9 1112.2,1141.9 1116.8,1147.9 1118.7,1152.4 1119.3,1156.8 1120.4,1162.1 1125.0,1161.8 1129.3,1160.0 1135.0,1158.3 1139.2,1155.9 1144.9,1153.9 1149.2,1150.6 1154.0,1149.4 1157.7,1146.4 1161.1,1144.0 1163.4,1138.9 1166.5,1134.6 1167.1,1132.8 1163.7,1129.4 1159.7,1127.5 1157.4,1123.4 1157.4,1120.9 1155.2,1123.1 1152.0,1126.9 1146.3,1127.5 1143.8,1126.3 1143.5,1122.5 1142.4,1121.2 1141.5,1124.4 1139.2,1120.9 1137.8,1118.7 1135.2,1114.2 1133.5,1111.3 1135.0,1109.0 1137.8,1109.3 1141.5,1112.2 1143.5,1116.1 1149.2,1119.3 1153.4,1120.0 1157.4,1118.4 1160.0,1120.3 1161.4,1123.1 1164.8,1123.8 1172.2,1124.4 1177.6,1124.1 1181.9,1124.4 1187.6,1125.6 1189.0,1128.5 1191.0,1129.4 1193.0,1132.2 1196.4,1133.4 1197.8,1136.8 1200.4,1138.0 1203.5,1136.2 1203.5,1133.7 1204.1,1137.1 1204.1,1140.4 1204.1,1143.4 1205.2,1147.0 1206.1,1152.4 1206.9,1154.2 1209.2,1159.7 1210.0,1162.7 1212.6,1167.0 1213.7,1169.9 1214.9,1173.4 1217.4,1175.4 1219.4,1173.4 1222.3,1171.9 1224.0,1169.0 1224.0,1165.6 1225.4,1161.2 1225.1,1156.8 1226.8,1153.0 1229.1,1151.5 1233.9,1147.3 1237.4,1144.3 1240.5,1141.0 1244.2,1138.9 1245.0,1135.6 1248.7,1135.2 1251.6,1134.3 1254.4,1133.4 1257.3,1131.9 1259.3,1134.9 1260.1,1138.6 1263.2,1141.9 1265.2,1145.8 1265.2,1150.3 1266.7,1153.0 1270.9,1151.2 1273.5,1149.7 1275.2,1154.7 1276.3,1159.7 1277.5,1164.1 1277.2,1169.9 1276.6,1174.5 1280.0,1177.7 1282.0,1180.5 1282.6,1184.3 1284.0,1188.3 1286.0,1191.4 1291.4,1194.5 1293.4,1193.9 1291.1,1189.4 1291.1,1186.5 1288.8,1182.0 1286.0,1179.7 1283.2,1178.8 1281.7,1174.5 1279.2,1171.4 1280.0,1167.6 1281.2,1162.7 1281.7,1160.0 1284.0,1159.7 1286.0,1162.4 1288.0,1163.8 1290.0,1166.7 1292.3,1168.5 1294.2,1168.8 1295.4,1171.1 1295.1,1173.7 1299.4,1171.4 1301.1,1169.0 1303.6,1168.2 1306.5,1166.1 1307.6,1163.0 1307.9,1159.4 1306.5,1154.5 1303.3,1151.5 1299.9,1147.9 1297.9,1144.6 1297.9,1141.3 1300.5,1138.3 1304.2,1135.9 1308.8,1135.6 1310.7,1137.7 1310.5,1139.5 1312.7,1137.4 1315.6,1135.6 1319.8,1133.7 1322.7,1132.8 1327.0,1131.6 1329.2,1129.7 1332.9,1127.2 1336.9,1124.1 1338.3,1119.6 1340.9,1115.8 1343.7,1111.6 1344.0,1108.3 1343.7,1105.7 1341.7,1103.0 1340.9,1100.3 1339.2,1096.2 1336.3,1093.5 1337.2,1090.4 1340.0,1088.3 1345.4,1084.7 1342.0,1083.3 1336.9,1084.4 1334.9,1081.1 1331.5,1078.6 1333.5,1076.0 1337.2,1074.2 1341.5,1071.2 1344.9,1072.7 1342.9,1077.1 1342.0,1078.6 1347.7,1074.9 1351.1,1075.6 1353.1,1078.6 1352.0,1081.8 1356.5,1083.6 1356.5,1086.8 1356.5,1091.4 1356.8,1093.5 1360.0,1093.5 1362.8,1092.1 1364.5,1091.4 1365.4,1086.8 1364.5,1083.3 1362.2,1079.7 1359.7,1076.4 1361.1,1074.2 1365.6,1071.6 1366.2,1068.2 1368.5,1065.1 1371.3,1063.2 1374.7,1063.2 1378.2,1061.2 1382.4,1057.7 1386.1,1052.8 1391.2,1045.8 1396.1,1039.0 1396.9,1032.9 1397.5,1028.0 1398.9,1022.9 1398.9,1018.6 1395.8,1015.8 1391.8,1013.3 1386.7,1011.4 1385.0,1006.9 1389.2,1002.8 1393.8,997.1 1399.8,992.2 1403.5,987.8 1410.9,987.3 1419.4,988.4 1426.5,986.1 1430.8,988.9 1436.5,985.6 1437.6,981.0 1443.0,975.1 1449.3,972.1 1455.0,972.7 1453.0,976.9 1451.5,980.4 1457.5,981.0 1461.8,973.9 1464.3,969.1 1466.9,969.1 1464.6,976.9 1462.9,982.2 1461.2,985.6 1457.8,994.9 1460.1,1000.2 1461.5,1004.3 1457.8,1008.4 1457.2,1012.9 1452.1,1018.2 1447.8,1022.9 1442.7,1028.4 1441.6,1022.9 1439.9,1012.9 1440.4,1005.4 1443.3,997.6 1447.0,993.8 1455.0,986.1 1460.6,981.0 1466.3,976.3 1469.2,974.5 1469.7,982.2 1472.0,984.4 1479.1,981.6 1483.4,978.1 1489.9,972.1 1495.9,967.8 1504.7,963.4 1505.3,957.0 1501.6,954.3 1509.0,949.6 1513.3,953.0 1517.5,956.3 1520.4,951.0 1528.9,948.9 1538.3,946.1 1531.8,940.4 1524.1,937.5 1517.5,931.6 1510.4,924.6 1499.0,919.8 1491.4,917.3 1482.0,916.5 1474.9,919.0 1472.0,918.1 1457.8,919.0 1451.5,914.0 1446.4,907.1 1430.8,901.8 1422.2,897.3 1413.7,894.5 1400.9,895.4 1395.2,891.6 1363.9,889.7 1358.2,885.8 1349.7,882.8 1338.3,886.8 1332.6,881.8 1318.4,882.8 1309.9,883.8 1315.6,873.5 1319.8,859.0 1314.2,848.3 1297.1,836.7 1293.4,835.4 1290.0,844.5 1277.2,851.9 1271.5,856.7 1263.0,857.9 1250.2,864.7 1243.9,871.3 1243.6,880.8 1226.0,885.8 1226.8,893.5 1219.4,899.1 1220.3,894.5 1213.2,889.7 1209.5,904.5 1209.2,896.3 1206.1,889.7 1202.9,895.4 1203.8,908.0 1203.2,917.3 1206.6,926.2 1204.6,937.5 1200.4,943.3 1193.8,930.0 1188.1,922.2 1186.7,912.3 1191.8,900.0 1195.3,888.7 1201.8,895.4 1203.5,905.4 1191.8,930.0 1186.2,926.2 1179.0,934.6 1160.6,926.2 1150.6,930.0 1133.0,933.8 1123.0,942.6 1117.9,945.4 1112.2,941.9 1109.6,947.5 1112.2,956.3 1103.7,955.7 1096.0,949.6 1090.6,941.9 1089.2,939.7 1098.8,944.7 1113.6,939.7 1113.1,933.1 1106.5,926.9 1098.0,921.4 1090.9,917.3 1085.2,916.5 1080.9,909.7 1070.4,906.3 1061.0,910.6 1053.9,914.8 1045.4,922.2 1038.5,930.0 1036.8,937.5 1033.4,944.0 1030.6,953.0 1025.4,959.6 1021.2,964.1 1014.1,969.1 1011.2,974.5 1011.2,981.6 1012.6,988.4 1015.5,993.8 1018.3,994.9 1022.6,992.2 1026.0,988.9 1027.2,985.0 1028.6,989.5 1029.4,993.3 1030.8,996.5 1033.1,1002.3 1033.7,1007.4 1037.4,1008.4 1041.9,1004.3 1043.9,998.1 1045.1,991.1 1049.6,987.8 1049.6,982.2 1045.9,975.1 1047.9,968.5 1054.5,961.5 1057.6,955.7 1060.4,948.9 1065.6,947.5 1069.0,953.0 1064.7,958.3 1059.0,964.7 1057.6,970.9 1058.2,978.1 1060.4,982.7 1063.0,984.4 1069.5,982.2 1075.2,981.0 1081.2,984.4 1076.6,986.7 1069.5,987.3 1064.1,988.4 1063.8,991.7 1064.7,994.9 1066.1,998.1 1065.6,1000.7 1062.7,999.7 1061.3,996.5 1057.9,999.7 1056.7,1002.8 1057.0,1006.9 1056.4,1009.4 1053.9,1011.4 1052.8,1013.3 1050.2,1013.3 1049.3,1011.4 1044.8,1012.4 1040.8,1014.3 1037.7,1015.8 1034.0,1014.3 1030.6,1014.8 1028.0,1015.3 1026.0,1013.3 1025.2,1010.9 1024.6,1007.9 1026.0,1005.4 1028.0,1002.8 1026.9,999.2 1027.2,996.5 1022.6,999.7 1020.6,1000.2 1020.0,1004.9 1020.0,1007.9 1021.5,1010.9 1022.0,1014.3 1021.7,1015.8 1017.5,1017.2 1015.5,1018.2 1011.2,1020.1 1010.1,1022.9 1008.7,1025.2 1006.7,1027.5 1004.4,1028.9 1001.6,1029.8 1001.6,1032.9 998.1,1034.7 997.3,1036.4 994.2,1036.9 993.3,1035.1 991.6,1035.1 992.4,1039.5 988.5,1039.9 986.8,1039.0 983.6,1040.3 984.5,1043.3 989.9,1045.4 991.0,1047.9 993.6,1050.0 993.6,1053.2 993.3,1057.3 992.7,1060.8 989.9,1061.2 985.9,1060.8 980.5,1060.8 975.7,1060.4 974.2,1060.0 970.8,1062.0 971.7,1065.9 972.3,1070.0 971.7,1074.2 970.5,1076.4ZM980.5,1089.3 988.5,1091.4 991.3,1091.8 995.3,1089.3 1000.4,1086.8 1005.5,1085.8 1012.6,1085.4 1018.3,1085.1 1021.7,1085.1 1025.2,1084.0 1028.0,1085.4 1027.2,1087.6 1028.0,1089.7 1027.7,1093.1 1025.7,1095.9 1028.6,1096.9 1032.6,1099.3 1035.4,1099.3 1040.2,1101.0 1042.5,1105.0 1048.2,1106.7 1051.6,1108.0 1053.6,1105.7 1053.9,1102.0 1058.7,1099.6 1062.4,1100.7 1066.1,1102.0 1069.5,1104.0 1075.2,1105.0 1080.9,1106.0 1083.8,1104.7 1086.6,1104.0 1088.9,1104.7 1092.3,1105.3 1094.3,1104.7 1089.7,1109.3 1090.3,1112.2 1093.1,1117.1 1094.3,1121.6 1098.3,1128.1 1102.0,1134.3 1102.8,1138.9 1102.8,1141.6 1106.2,1146.4 1107.9,1150.9 1109.6,1153.9 1112.2,1156.5 1115.6,1159.7 1119.6,1162.7 1119.9,1165.3 1121.3,1166.1 1123.3,1168.5 1126.4,1168.5 1132.1,1166.7 1136.4,1166.1 1140.6,1165.6 1142.9,1164.7 1142.4,1166.4 1141.8,1169.3 1139.8,1174.2 1138.1,1178.5 1135.0,1182.8 1132.1,1187.1 1127.3,1192.0 1123.6,1194.2 1118.7,1197.6 1115.9,1201.3 1112.8,1204.5 1111.3,1207.9 1109.1,1211.3 1107.6,1214.2 1109.1,1217.9 1109.1,1221.3 1109.9,1225.6 1111.9,1228.5 1112.2,1232.9 1112.8,1238.7 1112.2,1242.8 1109.4,1246.1 1103.7,1248.8 1100.3,1253.0 1096.0,1256.0 1096.8,1259.3 1098.0,1263.6 1098.0,1268.9 1095.1,1271.4 1090.9,1273.6 1090.6,1276.7 1089.2,1283.1 1085.2,1287.7 1080.9,1293.0 1076.6,1297.0 1072.4,1300.4 1069.8,1301.4 1063.8,1301.8 1058.2,1302.8 1053.9,1304.2 1051.6,1302.8 1049.6,1302.1 1048.8,1299.4 1049.1,1295.7 1047.3,1292.7 1045.9,1288.0 1043.9,1283.1 1040.8,1279.9 1040.0,1277.0 1039.1,1272.0 1038.2,1265.8 1036.3,1261.1 1033.4,1255.1 1030.6,1249.1 1030.6,1244.6 1031.7,1241.7 1032.8,1237.3 1035.4,1234.3 1036.3,1230.0 1034.0,1225.6 1034.5,1223.6 1033.4,1219.9 1032.0,1215.6 1031.1,1212.7 1028.9,1209.9 1025.4,1207.0 1023.5,1204.2 1022.0,1201.3 1023.5,1198.5 1024.0,1196.2 1024.9,1192.8 1025.2,1190.0 1024.3,1187.1 1022.0,1186.0 1018.3,1185.7 1014.1,1186.3 1012.1,1183.7 1010.1,1181.1 1006.7,1180.3 1001.8,1180.8 999.3,1182.0 996.4,1182.8 992.4,1184.5 991.0,1185.1 988.2,1184.0 984.2,1183.7 978.5,1184.5 975.7,1186.0 970.8,1184.0 965.7,1180.8 963.4,1179.1 961.2,1177.1 959.5,1174.2 958.3,1171.9 955.8,1169.9 954.0,1167.0 952.6,1164.7 949.2,1163.0 949.5,1159.7 947.2,1156.2 950.1,1153.0 950.9,1149.4 951.2,1145.5 950.4,1141.9 948.4,1138.0 948.9,1135.9 950.6,1132.8 952.9,1128.1 955.2,1123.4 956.6,1120.3 959.7,1116.4 964.3,1113.9 968.0,1111.6 969.7,1107.7 969.4,1104.0 970.8,1100.7 975.1,1097.3 978.2,1094.5 979.4,1091.4ZM1137.2,1232.9 1139.2,1237.3 1140.1,1243.1 1137.8,1249.1 1135.8,1256.6 1133.2,1264.2 1130.7,1272.0 1125.6,1273.6 1121.3,1270.4 1120.7,1265.8 1120.7,1261.1 1123.3,1256.3 1122.2,1249.1 1123.6,1245.2 1128.7,1244.0 1133.0,1240.2 1134.1,1237.3ZM1225.1,1170.5 1228.3,1174.2 1230.0,1178.5 1228.3,1181.4 1224.8,1181.4 1224.0,1177.1 1224.3,1173.4ZM1402.3,1229.1 1404.6,1234.3 1405.7,1238.7 1408.0,1240.5 1410.3,1243.1 1412.6,1247.6 1413.1,1252.1 1415.1,1254.5 1419.7,1257.2 1421.4,1259.6 1424.2,1264.2 1426.5,1267.3 1430.8,1271.0 1432.5,1274.5 1433.3,1279.9 1433.9,1284.4 1432.2,1289.7 1430.8,1296.3 1427.4,1301.1 1425.9,1304.9 1424.0,1310.2 1423.4,1313.7 1417.4,1315.5 1413.4,1318.1 1412.9,1319.1 1408.9,1316.6 1405.2,1318.1 1399.5,1316.6 1395.8,1313.7 1394.1,1309.4 1390.1,1307.0 1391.0,1304.2 1389.0,1302.1 1388.1,1305.2 1383.8,1303.5 1385.0,1299.7 1388.7,1297.7 1381.9,1300.4 1378.7,1296.3 1370.5,1293.3 1363.9,1293.7 1355.4,1295.7 1349.1,1300.8 1344.0,1301.1 1336.9,1302.8 1332.6,1304.9 1327.0,1303.2 1324.1,1301.4 1326.1,1299.1 1326.1,1294.7 1324.1,1289.7 1322.7,1283.1 1319.8,1276.7 1319.6,1270.4 1320.7,1264.5 1321.8,1262.1 1328.9,1259.3 1334.9,1257.2 1342.0,1253.6 1344.6,1250.0 1347.7,1245.8 1351.1,1241.7 1355.1,1239.3 1359.1,1238.7 1361.7,1241.7 1365.6,1241.1 1367.1,1237.0 1369.1,1233.8 1372.2,1232.6 1373.9,1230.9 1377.3,1233.5 1383.0,1232.6 1386.4,1233.8 1384.4,1236.4 1383.6,1239.3 1382.4,1241.7 1386.1,1245.2 1392.9,1248.2 1397.5,1249.4 1398.9,1246.1 1399.8,1240.2 1400.1,1234.6 1401.5,1230.0ZM1408.6,1325.8 1413.7,1326.6 1418.8,1325.8 1418.8,1331.1 1414.6,1336.6 1410.9,1335.0 1410.0,1329.6ZM1488.2,1302.8 1493.1,1306.6 1494.8,1311.2 1497.6,1313.7 1504.7,1314.1 1503.3,1319.1 1500.5,1321.4 1496.5,1328.1 1495.3,1328.8 1493.1,1322.8 1491.4,1320.6 1493.6,1315.5 1492.5,1310.2ZM1488.2,1324.7 1492.8,1328.5 1490.2,1333.5 1489.1,1337.4 1484.3,1340.1 1482.5,1345.4 1477.7,1348.7 1470.6,1347.0 1472.0,1342.9 1478.6,1337.4 1484.0,1332.3 1486.0,1328.5ZM1370.2,1200.8 1373.9,1202.8 1378.7,1205.6 1381.9,1207.9 1386.1,1205.6 1389.0,1203.1 1393.8,1205.3 1398.1,1205.9 1402.3,1207.6 1408.0,1209.6 1411.7,1212.5 1416.6,1214.5 1417.7,1217.6 1416.6,1221.0 1418.5,1222.8 1421.4,1224.8 1424.8,1228.0 1423.7,1228.8 1418.0,1227.4 1414.0,1224.2 1408.9,1220.8 1406.0,1220.2 1404.6,1224.2 1399.5,1224.5 1392.4,1222.2 1391.0,1219.3 1389.0,1214.2 1383.8,1211.6 1378.2,1209.9 1375.3,1209.3 1372.2,1206.5 1375.0,1204.5 1371.9,1202.2ZM1429.9,1210.7 1429.4,1214.2 1423.7,1216.2 1419.4,1214.2 1425.1,1213.3ZM1329.2,1178.5 1332.1,1180.5 1336.1,1184.3 1332.4,1186.5 1332.6,1192.0 1335.2,1195.7 1329.8,1201.3 1328.4,1205.0 1327.0,1209.9 1322.7,1208.5 1314.7,1207.6 1310.5,1206.8 1309.9,1202.8 1307.3,1198.5 1308.8,1193.4 1313.3,1192.5 1317.3,1190.2 1319.0,1189.1 1321.8,1185.7 1325.0,1184.3 1327.2,1181.4ZM1268.1,1182.5 1274.3,1184.8 1278.0,1188.0 1282.3,1191.4 1285.7,1193.7 1290.5,1196.2 1294.0,1201.3 1297.7,1205.0 1298.5,1207.6 1298.2,1211.6 1297.9,1215.3 1294.2,1214.2 1288.6,1210.5 1284.0,1205.0 1282.3,1200.8 1279.2,1197.1 1277.7,1193.4 1273.8,1189.4 1270.4,1186.3ZM1297.4,1215.6 1300.8,1215.3 1305.1,1216.2 1310.7,1217.6 1312.4,1216.7 1317.0,1218.5 1321.6,1219.6 1322.4,1221.3 1322.7,1223.3 1317.3,1222.5 1312.2,1221.9 1305.6,1220.5 1299.6,1220.5 1296.5,1218.2ZM1353.1,1194.8 1349.7,1195.9 1342.6,1197.1 1339.2,1196.5 1338.6,1201.1 1336.9,1202.8 1335.5,1208.5 1336.6,1214.2 1339.5,1214.5 1341.7,1209.9 1346.0,1211.6 1344.9,1207.9 1342.3,1203.9 1342.6,1201.3 1347.7,1201.1 1343.7,1199.9 1346.9,1197.6 1351.1,1197.1ZM1361.1,1192.0 1360.2,1197.1 1361.1,1200.8 1363.4,1197.1 1362.5,1194.2ZM1361.1,1206.5 1369.1,1208.5 1362.5,1207.6ZM1340.3,1144.6 1344.6,1144.9 1345.4,1149.4 1342.6,1153.9 1344.3,1157.4 1349.4,1158.9 1350.0,1161.8 1345.4,1158.9 1340.0,1158.6 1338.0,1154.7 1337.8,1151.2 1339.5,1147.9ZM1354.0,1170.5 1356.5,1173.4 1357.1,1178.0 1354.8,1181.4 1352.8,1178.8 1350.3,1180.8 1348.3,1178.0 1344.0,1178.5 1346.9,1175.7 1349.4,1173.9 1352.6,1172.8ZM1342.9,1124.1 1343.2,1128.1 1341.2,1132.5 1340.6,1134.3 1338.6,1131.2 1340.3,1126.6ZM1311.9,1140.1 1312.7,1142.8 1309.0,1145.8 1305.9,1144.6 1307.6,1141.0ZM1396.6,1068.5 1399.2,1069.3 1400.3,1072.3 1400.9,1076.8 1399.5,1080.4 1398.1,1084.4 1397.5,1089.7 1394.9,1092.1 1391.8,1093.5 1388.4,1093.5 1383.3,1097.3 1380.4,1094.5 1376.7,1093.5 1372.5,1095.6 1369.3,1095.9 1371.0,1093.5 1375.3,1090.4 1382.4,1090.0 1384.1,1087.6 1386.1,1083.6 1387.5,1085.1 1391.0,1082.9 1394.1,1079.7 1394.9,1074.9 1394.9,1071.9ZM1400.6,1052.8 1405.2,1057.3 1410.3,1058.8 1411.4,1061.6 1406.6,1063.2 1404.6,1066.6 1399.5,1064.7 1395.2,1068.5 1394.9,1064.7 1396.4,1061.6 1400.1,1057.7ZM1369.3,1095.9 1372.5,1097.9 1371.3,1102.3 1370.5,1105.7 1367.3,1105.0 1367.1,1101.7 1365.6,1099.0 1367.3,1096.9ZM1377.6,1094.5 1379.6,1097.9 1375.0,1099.6 1373.9,1095.9ZM1402.9,1013.8 1403.8,1017.7 1404.3,1023.8 1406.0,1030.2 1407.2,1037.3 1402.9,1040.3 1405.2,1049.6 1400.6,1050.8 1400.9,1044.6 1401.5,1038.2 1401.2,1027.0 1400.3,1018.6ZM765.2,1130.6 769.4,1130.9 774.3,1133.1 779.1,1135.9 785.9,1139.5 782.2,1140.7 776.6,1141.0 775.1,1138.0 770.0,1135.6 765.2,1134.3 760.9,1134.6 756.9,1133.7 757.2,1131.6 762.3,1131.2ZM789.9,1140.7 796.5,1141.3 799.9,1143.4 802.4,1145.5 796.5,1145.8 792.8,1146.1 785.4,1145.5 785.7,1144.6 790.8,1144.6 789.9,1142.2ZM774.3,1144.9 780.0,1145.2 778.5,1146.7 774.3,1145.8ZM805.9,1144.9 810.4,1145.2 809.8,1146.4 805.9,1146.4ZM988.2,991.7 991.3,996.5 991.9,998.1 989.6,1002.8 988.2,1005.4 990.7,1005.4 992.4,1008.4 993.9,1012.4 996.4,1015.3 997.6,1017.7 999.6,1020.5 1001.8,1020.5 1002.1,1023.4 1000.4,1025.7 998.7,1027.5 1001.0,1028.4 998.1,1030.2 994.2,1030.2 989.9,1031.1 986.5,1032.5 980.8,1033.3 982.8,1031.6 985.1,1028.4 988.5,1027.0 985.1,1026.6 982.2,1026.1 984.5,1024.3 984.2,1021.0 983.9,1018.6 988.2,1018.6 988.5,1015.8 986.8,1012.9 987.9,1010.9 983.3,1011.4 983.3,1007.9 981.1,1006.4 981.1,1003.8 980.5,1000.2 980.5,997.1 981.9,993.8 982.8,991.7ZM976.2,1008.9 980.5,1011.9 979.9,1014.8 979.6,1018.6 978.8,1023.8 974.2,1025.7 969.1,1027.0 967.7,1024.3 970.0,1022.0 968.6,1018.6 968.6,1015.3 972.5,1013.8 972.0,1012.4 973.7,1009.4ZM1027.7,803.1 1045.4,796.5 1053.9,799.8 1065.3,794.8 1073.8,807.9 1056.7,818.6 1059.6,828.6 1059.6,842.0 1044.2,850.7 1036.8,838.1 1031.1,825.8 1028.3,814.1ZM1163.4,912.3 1169.1,916.5 1163.4,915.7ZM1270.1,780.5 1281.4,787.8 1294.2,804.7 1284.3,822.9 1272.9,817.1 1258.7,807.9ZM1388.1,862.5 1398.1,855.5 1412.3,861.3 1426.5,865.8 1412.3,872.4 1395.2,878.7 1386.7,869.1ZM1505.6,902.7 1516.1,904.5 1512.4,908.0 1506.2,907.1ZM1051.0,794.8 1073.8,796.5 1068.1,809.4ZM1323.5,1221.6 1326.1,1222.8 1324.7,1223.6ZM1327.0,1222.2 1335.5,1223.1 1329.8,1223.6ZM1337.8,1221.9 1346.9,1222.8 1339.8,1223.6ZM1352.0,1222.5 1354.0,1225.6 1348.3,1228.0 1350.3,1225.1ZM1353.7,1162.7 1354.0,1167.0 1352.6,1169.0 1350.3,1166.4 1352.0,1163.5ZM1346.3,1165.3 1344.3,1168.5 1345.4,1171.4 1348.3,1168.5 1347.4,1166.1ZM1342.6,1162.7 1336.9,1167.0 1333.5,1171.4 1330.7,1174.2 1335.5,1169.9 1339.8,1164.1ZM1153.4,778.7 1173.4,787.8 1167.7,798.1 1144.9,793.1 1130.7,799.8ZM1125.0,787.8 1142.1,798.1 1122.2,796.5ZM772.9,1119.3 777.4,1120.0 776.6,1121.2ZM774.6,1124.4 776.6,1127.5 775.1,1128.8ZM1144.0,901.5 1146.1,885.1 1152.3,868.7 1162.5,856.4 1170.7,852.3 1187.1,846.1 1193.3,850.2 1187.1,858.4 1172.8,864.6 1162.5,876.9 1156.4,889.2 1154.3,901.5 1160.5,911.8 1154.3,911.8ZM736.9,772.9 746.6,765.8 755.5,756.9 768.0,747.1 780.4,742.1 796.4,741.2 810.6,745.3 823.0,756.9 815.9,770.2 807.0,778.2 803.5,788.9 796.4,801.3 791.1,812.0 785.7,824.4 778.6,828.0 771.5,836.8 764.4,842.2 755.5,840.4 750.2,828.0 743.1,829.7 732.4,824.4 727.1,813.7 722.6,801.3 725.3,788.9 730.6,780.0ZM736.9,845.7 746.6,842.2 760.8,844.0 771.5,847.5 775.1,856.4 771.5,870.6 757.3,873.3 743.1,871.5 736.0,865.3 732.4,854.6ZM696.9,813.7 711.1,815.5 716.4,828.0 725.3,835.1 728.9,851.1 732.4,870.6 720.0,871.5 711.1,863.5 700.4,852.8 698.6,838.6 695.1,824.4ZM647.1,856.4 659.5,840.4 670.2,835.1 682.7,822.6 688.0,835.1 695.1,852.8 696.9,865.3 688.0,874.2 673.8,875.0 661.3,865.3ZM641.8,875.9 654.2,873.3 668.4,883.0 664.9,897.3 652.4,907.0 640.0,906.2ZM666.7,888.4 680.9,883.0 695.1,884.8 707.5,897.3 711.1,915.0 700.4,927.5 680.9,931.0 668.4,922.1 659.5,909.7 661.3,897.3ZM707.5,886.6 718.2,877.7 727.1,884.8 739.5,877.7 736.9,897.3 728.9,913.3 720.0,906.2 709.3,897.3Z" fill="#f2efe9"/><path d="M1079.8,1069.7 1076.6,1067.0 1075.8,1063.9 1076.9,1061.2 1078.6,1058.1 1081.5,1054.1 1084.3,1049.2 1087.5,1048.3 1089.4,1050.4 1089.7,1053.2 1092.3,1056.5 1095.1,1057.3 1098.0,1054.9 1101.1,1053.6 1105.9,1057.7 1110.5,1061.2 1115.0,1064.7 1115.3,1068.2 1110.2,1070.4 1105.1,1070.0 1098.3,1068.2 1095.1,1066.6 1088.6,1068.2 1083.8,1069.7ZM1096.6,1053.6 1097.1,1050.8 1102.2,1047.9 1107.9,1045.8 1105.1,1049.6 1104.0,1052.4 1100.8,1053.6ZM1143.5,1045.8 1147.8,1048.7 1147.8,1053.6 1140.1,1057.7 1142.6,1060.4 1146.6,1064.7 1147.2,1067.8 1147.2,1070.8 1147.8,1073.8 1150.0,1077.5 1150.3,1081.5 1150.3,1084.0 1146.9,1085.4 1142.6,1086.1 1136.9,1083.3 1136.1,1079.7 1137.2,1075.3 1139.2,1072.7 1136.7,1069.3 1133.5,1064.7 1132.1,1060.4 1131.3,1056.5 1132.4,1052.0 1135.8,1048.7 1137.8,1046.7ZM1166.2,1048.7 1171.4,1050.8 1171.1,1055.3 1165.7,1058.8 1164.3,1052.8ZM1207.5,1047.5 1221.7,1050.4 1220.9,1052.8 1208.9,1048.7ZM1307.9,1006.9 1306.2,1017.7 1294.2,1027.0 1292.8,1026.1 1303.6,1017.7 1306.5,1007.9ZM745.3,1039.0 755.8,1043.3 756.6,1048.7 748.1,1048.3 735.3,1047.5 742.4,1042.5ZM749.5,1050.8 756.1,1051.2 747.0,1060.8 748.1,1067.8 750.7,1065.9 751.2,1058.8 753.8,1051.6ZM758.1,1051.2 765.7,1053.6 762.6,1062.4 759.8,1058.8 759.5,1051.2 765.2,1050.0ZM772.6,1063.2 762.3,1068.9 759.8,1067.8 768.0,1063.9ZM770.9,1061.2 779.1,1061.6 780.0,1058.1 773.7,1059.2ZM714.8,1020.1 722.5,1031.6 719.7,1031.6 716.0,1017.7ZM667.0,969.7 674.2,978.1 665.6,978.7 662.8,975.1 672.7,969.1ZM647.1,942.6 657.1,951.6 644.3,954.3 640.0,947.5ZM685.5,987.3 697.5,991.1 680.4,990.6Z" fill="#b4d3df"/></g>
<g transform="translate(0,0)"><path d="M518.8,948.9 534.5,939.7 522.5,929.3 533.4,918.1 544.7,908.9 551.8,903.6 564.6,911.5 574.6,913.2 590.2,916.5 595.9,919.0 607.3,920.6 615.8,921.4 624.4,919.0 634.3,914.0 641.4,919.0 642.3,914.0 652.8,919.8 667.0,925.4 678.4,931.6 689.8,927.7 701.2,930.0 712.6,929.3 718.2,931.6 723.9,919.8 727.3,902.7 733.9,911.5 738.2,923.8 743.8,927.7 748.1,936.8 753.8,923.8 762.3,917.3 765.2,927.7 766.0,939.0 759.5,942.6 752.4,943.3 748.1,953.0 743.8,959.6 739.0,964.1 732.5,972.1 729.6,977.5 727.3,986.7 729.1,990.6 733.9,997.6 743.8,1001.3 755.2,1008.9 763.2,1009.4 763.2,1017.7 766.6,1024.7 770.9,1028.0 772.9,1022.4 770.9,1012.9 779.4,1002.8 775.1,992.2 776.6,983.9 775.7,975.1 776.6,969.7 787.9,970.9 797.9,978.1 799.3,986.7 805.0,992.2 810.7,990.6 812.7,982.2 817.8,992.2 822.1,1000.2 826.3,1007.9 833.4,1012.9 837.7,1017.7 838.6,1024.7 834.9,1027.5 826.3,1032.5 815.0,1033.3 807.8,1033.8 802.2,1038.2 799.3,1040.3 795.6,1045.8 805.0,1040.3 813.5,1037.7 814.4,1040.3 812.1,1043.3 812.7,1048.7 816.4,1051.2 822.1,1052.4 825.2,1047.1 826.9,1050.8 823.5,1054.1 816.4,1056.9 810.4,1060.8 809.3,1056.5 807.8,1053.6 805.9,1054.5 801.3,1057.7 797.3,1060.4 795.9,1063.9 798.2,1067.4 796.2,1068.2 792.8,1068.9 787.9,1070.4 786.5,1071.9 785.4,1076.4 784.0,1078.2 782.2,1076.0 783.4,1080.0 781.1,1084.4 780.0,1085.4 782.2,1091.4 778.8,1093.1 775.1,1095.9 770.0,1099.6 767.2,1102.3 765.5,1106.7 766.6,1111.6 767.7,1114.2 769.4,1119.3 768.6,1123.4 766.6,1124.7 764.6,1122.2 763.2,1119.6 761.8,1115.8 761.8,1112.6 759.2,1109.3 756.6,1109.0 754.4,1110.0 751.0,1107.7 746.7,1108.0 743.3,1107.7 742.4,1110.9 743.3,1112.2 739.6,1111.3 735.3,1110.6 730.8,1109.6 727.9,1110.9 724.5,1113.2 721.1,1115.5 720.0,1118.7 720.5,1122.2 719.1,1127.2 718.8,1133.1 720.2,1136.8 722.8,1141.0 724.5,1143.7 728.2,1145.5 733.9,1144.6 738.2,1142.8 739.6,1139.5 740.7,1136.8 745.3,1135.9 749.5,1135.9 748.7,1138.9 747.8,1144.0 746.1,1147.9 744.4,1152.4 748.1,1153.3 755.2,1152.4 758.1,1153.0 760.3,1155.3 759.5,1159.7 759.2,1164.1 758.9,1167.0 760.9,1169.9 763.8,1171.9 765.2,1173.1 769.4,1171.9 772.9,1171.4 776.3,1173.1 777.1,1173.9 776.6,1176.0 774.0,1175.1 774.6,1177.1 768.6,1177.7 768.3,1175.7 765.2,1175.1 761.2,1174.8 759.2,1172.8 754.4,1170.2 753.2,1167.0 750.4,1163.5 748.1,1161.2 745.3,1160.6 740.4,1159.2 736.7,1158.3 734.5,1156.2 730.8,1153.3 726.8,1151.8 722.5,1153.3 716.8,1150.9 712.8,1150.0 708.3,1147.9 704.6,1146.1 701.2,1144.0 698.3,1142.2 696.3,1139.2 697.5,1135.9 696.3,1132.8 694.4,1130.6 691.2,1126.6 687.5,1123.4 686.1,1120.3 682.7,1117.7 679.8,1114.2 677.0,1110.6 675.3,1106.3 673.3,1104.0 670.7,1105.7 672.2,1110.6 675.9,1115.5 679.6,1120.3 682.1,1125.6 683.5,1127.8 685.5,1130.6 684.4,1131.6 681.6,1129.4 678.1,1126.6 677.9,1122.5 674.4,1119.6 671.9,1116.4 672.4,1114.8 670.5,1111.3 667.0,1107.3 665.1,1103.3 663.9,1100.7 663.1,1098.3 660.5,1096.2 659.1,1095.6 656.8,1094.2 654.0,1093.8 652.0,1090.0 650.3,1086.5 648.6,1083.3 647.1,1080.4 644.9,1076.0 643.2,1072.7 643.7,1067.4 642.9,1062.8 644.0,1056.5 644.3,1050.0 642.6,1042.9 642.3,1040.8 645.7,1041.6 647.1,1038.2 641.4,1033.8 635.2,1030.2 633.5,1027.0 631.5,1022.9 627.2,1017.7 625.5,1011.9 623.0,1006.9 617.8,1001.3 613.6,996.0 607.9,992.8 603.0,988.4 599.3,986.1 594.5,983.9 586.0,982.7 580.3,981.0 576.0,978.7 570.9,982.2 566.1,986.7 566.1,982.7 569.5,978.1 564.6,979.8 560.4,986.1 559.0,991.1 554.4,997.1 550.4,1001.3 543.3,1005.4 537.6,1008.9 531.9,1011.4 528.2,1012.9 533.4,1009.4 539.6,1005.9 545.3,1001.3 549.6,994.9 550.4,990.6 545.3,991.7 536.8,990.6 534.8,985.0 529.1,983.9 527.1,978.1 527.7,969.7 530.5,964.7 535.6,962.8 539.0,956.3 533.4,956.3 526.2,957.0 523.4,954.3 518.8,948.9ZM777.1,1173.9 780.8,1171.6 782.2,1168.8 785.7,1166.7 789.4,1166.1 793.1,1163.0 794.2,1165.3 792.5,1167.3 793.6,1171.4 793.3,1168.2 797.3,1165.6 801.3,1166.4 803.6,1168.5 808.7,1168.2 813.0,1169.6 817.8,1167.9 820.9,1168.2 821.5,1170.5 824.9,1173.9 826.9,1174.8 831.5,1179.1 834.9,1181.7 840.6,1181.7 843.4,1182.8 848.2,1184.5 851.1,1187.7 853.1,1192.2 854.8,1195.7 854.2,1198.5 859.0,1200.8 864.7,1201.3 869.3,1202.8 871.0,1205.6 877.5,1206.5 883.2,1206.8 887.5,1209.0 891.8,1212.2 896.0,1213.3 898.0,1218.5 897.4,1222.8 894.0,1227.7 890.9,1231.4 887.5,1235.8 886.1,1241.7 885.5,1249.1 884.1,1252.1 882.4,1257.5 880.7,1261.1 877.5,1265.4 873.3,1265.8 869.0,1267.3 865.3,1268.9 860.5,1272.9 858.8,1276.7 858.2,1283.1 854.2,1289.7 848.8,1295.3 845.1,1300.4 842.0,1303.2 837.1,1304.5 832.6,1302.8 830.9,1303.5 834.0,1305.9 835.4,1309.4 834.9,1313.4 833.2,1315.9 827.8,1318.4 820.1,1318.8 819.8,1323.6 818.1,1326.6 812.1,1327.0 814.4,1331.1 816.1,1332.3 812.1,1335.4 810.7,1342.1 805.0,1343.4 805.6,1349.1 809.6,1353.3 805.9,1357.5 802.2,1363.7 800.2,1370.0 802.4,1373.6 803.0,1378.4 807.0,1382.2 811.5,1385.6 807.8,1386.6 803.6,1388.1 805.6,1391.1 799.3,1389.1 795.0,1386.1 790.8,1384.1 786.5,1379.3 784.2,1374.6 783.4,1370.0 782.2,1363.2 782.2,1356.7 782.0,1350.3 782.2,1346.2 785.9,1342.1 786.5,1336.2 786.5,1330.4 787.1,1328.5 787.4,1324.7 788.2,1322.1 787.9,1317.3 787.6,1312.6 789.4,1310.9 790.8,1306.6 792.5,1301.4 793.3,1298.0 793.3,1293.0 793.9,1288.0 794.2,1283.1 795.3,1278.3 796.5,1273.2 796.8,1267.6 797.6,1261.1 797.3,1255.4 797.0,1252.1 793.9,1249.4 789.4,1245.8 783.7,1243.1 780.0,1238.7 777.7,1232.9 774.6,1227.1 772.6,1222.8 770.0,1218.5 766.3,1215.6 765.7,1211.6 768.6,1208.5 770.0,1205.6 766.9,1204.8 767.2,1201.3 769.2,1197.6 770.9,1195.7 772.9,1193.7 774.0,1191.1 777.1,1187.4 776.8,1182.8 775.7,1178.5 776.8,1175.4 777.1,1173.9ZM897.4,728.5 920.2,738.4 937.3,756.6 960.0,774.9 951.5,793.1 941.5,814.1 944.4,838.1 940.1,856.7 941.5,873.5 934.4,888.7 934.4,902.7 931.6,913.2 924.5,919.8 911.7,929.3 903.1,936.8 893.2,946.1 886.1,949.6 881.8,959.6 877.5,969.1 875.3,978.1 873.8,983.9 872.1,985.0 866.2,981.0 860.5,978.1 856.2,972.1 851.9,962.8 849.1,956.3 846.2,948.9 844.8,942.6 844.8,933.1 850.5,926.2 851.9,919.8 847.7,911.5 843.4,908.9 839.1,900.9 839.1,893.5 836.3,883.8 833.4,873.5 830.6,862.5 823.5,855.5 809.3,853.1 800.7,854.3 793.6,844.5 790.8,835.4 790.8,824.4 805.0,814.1 807.8,801.5 817.8,793.1 823.5,780.5 840.6,769.0 863.3,760.8 883.2,745.4 888.9,733.5ZM768.9,881.8 779.4,885.8 785.1,897.3 792.2,903.6 802.2,910.6 805.0,917.3 804.1,925.4 815.0,933.8 822.1,941.2 819.8,946.1 815.5,950.3 810.7,953.0 805.0,946.8 810.7,948.9 815.0,954.3 813.2,961.5 810.7,966.0 809.3,969.7 803.6,967.2 801.3,960.9 798.5,962.2 795.6,967.8 790.8,966.6 785.1,960.9 779.4,957.0 775.1,957.0 777.1,951.6 786.5,950.3 789.9,942.6 789.9,938.3 785.1,929.3 778.5,918.1 770.9,917.3 762.3,913.2 753.8,915.7 746.7,910.6 741.9,904.5 742.4,891.6 751.0,880.8 762.3,880.8ZM716.5,919.8 715.4,924.6 720.5,927.7 725.4,923.8 722.2,919.8ZM755.2,947.5 761.5,955.7 766.6,961.5 762.9,966.6 759.5,970.3 753.8,966.0 749.0,962.2 751.5,957.6 750.1,951.6ZM778.5,931.6 781.7,937.5 775.7,936.1ZM950.9,942.6 955.8,945.4 958.3,951.0 955.8,957.0 950.1,960.9 943.0,963.4 933.6,960.9 933.6,957.6 929.0,954.3 928.7,949.6 930.2,945.4 933.0,943.3 940.1,947.5 945.8,944.7ZM970.0,1078.6 972.0,1081.8 971.4,1085.1 975.7,1084.7 979.1,1086.8 981.6,1088.3 984.5,1086.1 990.7,1086.1 994.4,1082.9 997.6,1078.9 996.1,1076.0 999.6,1071.6 1003.3,1068.9 1006.4,1065.5 1005.8,1062.0 1008.1,1060.8 1012.4,1061.6 1015.5,1062.4 1017.8,1060.0 1022.3,1057.3 1025.4,1058.8 1026.9,1062.8 1028.9,1065.1 1032.0,1067.4 1035.4,1069.7 1037.4,1071.2 1039.7,1073.4 1041.9,1075.6 1041.4,1080.8 1042.5,1081.8 1043.9,1079.7 1045.6,1077.5 1044.2,1073.8 1045.9,1072.3 1049.3,1074.9 1048.2,1071.9 1045.1,1070.0 1043.1,1067.0 1037.1,1064.3 1035.4,1060.4 1032.3,1058.1 1032.0,1053.2 1034.3,1052.0 1036.3,1052.4 1036.3,1055.3 1037.7,1054.1 1040.5,1057.7 1043.6,1060.8 1048.5,1064.3 1051.6,1066.6 1052.5,1069.3 1052.2,1072.7 1054.2,1075.6 1056.7,1079.7 1059.0,1080.4 1057.6,1082.9 1058.7,1085.8 1060.7,1087.2 1061.9,1083.6 1063.0,1083.3 1064.4,1081.5 1065.3,1080.0 1062.1,1078.2 1062.1,1076.0 1062.1,1071.9 1063.8,1073.4 1065.3,1072.7 1066.7,1070.8 1069.5,1070.8 1071.2,1071.9 1071.8,1073.4 1071.5,1076.0 1072.9,1078.9 1073.2,1080.0 1074.1,1083.3 1074.9,1085.1 1077.2,1086.1 1079.8,1086.5 1082.3,1087.9 1084.3,1085.4 1088.0,1086.8 1090.3,1088.3 1093.1,1087.9 1095.4,1085.8 1098.3,1086.1 1099.7,1086.5 1098.8,1089.0 1099.1,1091.4 1098.0,1095.9 1096.6,1099.6 1095.7,1102.3 1094.3,1104.7 1089.7,1109.0 1089.7,1110.3 1091.4,1113.9 1094.3,1116.1 1095.7,1112.2 1096.3,1110.6 1095.7,1115.2 1098.3,1118.7 1102.0,1123.4 1104.8,1128.1 1107.9,1132.8 1108.2,1135.9 1112.2,1141.9 1116.8,1147.9 1118.7,1152.4 1119.3,1156.8 1120.4,1162.1 1125.0,1161.8 1129.3,1160.0 1135.0,1158.3 1139.2,1155.9 1144.9,1153.9 1149.2,1150.6 1154.0,1149.4 1157.7,1146.4 1161.1,1144.0 1163.4,1138.9 1166.5,1134.6 1167.1,1132.8 1163.7,1129.4 1159.7,1127.5 1157.4,1123.4 1157.4,1120.9 1155.2,1123.1 1152.0,1126.9 1146.3,1127.5 1143.8,1126.3 1143.5,1122.5 1142.4,1121.2 1141.5,1124.4 1139.2,1120.9 1137.8,1118.7 1135.2,1114.2 1133.5,1111.3 1135.0,1109.0 1137.8,1109.3 1141.5,1112.2 1143.5,1116.1 1149.2,1119.3 1153.4,1120.0 1157.4,1118.4 1160.0,1120.3 1161.4,1123.1 1164.8,1123.8 1172.2,1124.4 1177.6,1124.1 1181.9,1124.4 1187.6,1125.6 1189.0,1128.5 1191.0,1129.4 1193.0,1132.2 1196.4,1133.4 1197.8,1136.8 1200.4,1138.0 1203.5,1136.2 1203.5,1133.7 1204.1,1137.1 1204.1,1140.4 1204.1,1143.4 1205.2,1147.0 1206.1,1152.4 1206.9,1154.2 1209.2,1159.7 1210.0,1162.7 1212.6,1167.0 1213.7,1169.9 1214.9,1173.4 1217.4,1175.4 1219.4,1173.4 1222.3,1171.9 1224.0,1169.0 1224.0,1165.6 1225.4,1161.2 1225.1,1156.8 1226.8,1153.0 1229.1,1151.5 1233.9,1147.3 1237.4,1144.3 1240.5,1141.0 1244.2,1138.9 1245.0,1135.6 1248.7,1135.2 1251.6,1134.3 1254.4,1133.4 1257.3,1131.9 1259.3,1134.9 1260.1,1138.6 1263.2,1141.9 1265.2,1145.8 1265.2,1150.3 1266.7,1153.0 1270.9,1151.2 1273.5,1149.7 1275.2,1154.7 1276.3,1159.7 1277.5,1164.1 1277.2,1169.9 1276.6,1174.5 1280.0,1177.7 1282.0,1180.5 1282.6,1184.3 1284.0,1188.3 1286.0,1191.4 1291.4,1194.5 1293.4,1193.9 1291.1,1189.4 1291.1,1186.5 1288.8,1182.0 1286.0,1179.7 1283.2,1178.8 1281.7,1174.5 1279.2,1171.4 1280.0,1167.6 1281.2,1162.7 1281.7,1160.0 1284.0,1159.7 1286.0,1162.4 1288.0,1163.8 1290.0,1166.7 1292.3,1168.5 1294.2,1168.8 1295.4,1171.1 1295.1,1173.7 1299.4,1171.4 1301.1,1169.0 1303.6,1168.2 1306.5,1166.1 1307.6,1163.0 1307.9,1159.4 1306.5,1154.5 1303.3,1151.5 1299.9,1147.9 1297.9,1144.6 1297.9,1141.3 1300.5,1138.3 1304.2,1135.9 1308.8,1135.6 1310.7,1137.7 1310.5,1139.5 1312.7,1137.4 1315.6,1135.6 1319.8,1133.7 1322.7,1132.8 1327.0,1131.6 1329.2,1129.7 1332.9,1127.2 1336.9,1124.1 1338.3,1119.6 1340.9,1115.8 1343.7,1111.6 1344.0,1108.3 1343.7,1105.7 1341.7,1103.0 1340.9,1100.3 1339.2,1096.2 1336.3,1093.5 1337.2,1090.4 1340.0,1088.3 1345.4,1084.7 1342.0,1083.3 1336.9,1084.4 1334.9,1081.1 1331.5,1078.6 1333.5,1076.0 1337.2,1074.2 1341.5,1071.2 1344.9,1072.7 1342.9,1077.1 1342.0,1078.6 1347.7,1074.9 1351.1,1075.6 1353.1,1078.6 1352.0,1081.8 1356.5,1083.6 1356.5,1086.8 1356.5,1091.4 1356.8,1093.5 1360.0,1093.5 1362.8,1092.1 1364.5,1091.4 1365.4,1086.8 1364.5,1083.3 1362.2,1079.7 1359.7,1076.4 1361.1,1074.2 1365.6,1071.6 1366.2,1068.2 1368.5,1065.1 1371.3,1063.2 1374.7,1063.2 1378.2,1061.2 1382.4,1057.7 1386.1,1052.8 1391.2,1045.8 1396.1,1039.0 1396.9,1032.9 1397.5,1028.0 1398.9,1022.9 1398.9,1018.6 1395.8,1015.8 1391.8,1013.3 1386.7,1011.4 1385.0,1006.9 1389.2,1002.8 1393.8,997.1 1399.8,992.2 1403.5,987.8 1410.9,987.3 1419.4,988.4 1426.5,986.1 1430.8,988.9 1436.5,985.6 1437.6,981.0 1443.0,975.1 1449.3,972.1 1455.0,972.7 1453.0,976.9 1451.5,980.4 1457.5,981.0 1461.8,973.9 1464.3,969.1 1466.9,969.1 1464.6,976.9 1462.9,982.2 1461.2,985.6 1457.8,994.9 1460.1,1000.2 1461.5,1004.3 1457.8,1008.4 1457.2,1012.9 1452.1,1018.2 1447.8,1022.9 1442.7,1028.4 1441.6,1022.9 1439.9,1012.9 1440.4,1005.4 1443.3,997.6 1447.0,993.8 1455.0,986.1 1460.6,981.0 1466.3,976.3 1469.2,974.5 1469.7,982.2 1472.0,984.4 1479.1,981.6 1483.4,978.1 1489.9,972.1 1495.9,967.8 1504.7,963.4 1505.3,957.0 1501.6,954.3 1509.0,949.6 1513.3,953.0 1517.5,956.3 1520.4,951.0 1528.9,948.9 1538.3,946.1 1531.8,940.4 1524.1,937.5 1517.5,931.6 1510.4,924.6 1499.0,919.8 1491.4,917.3 1482.0,916.5 1474.9,919.0 1472.0,918.1 1457.8,919.0 1451.5,914.0 1446.4,907.1 1430.8,901.8 1422.2,897.3 1413.7,894.5 1400.9,895.4 1395.2,891.6 1363.9,889.7 1358.2,885.8 1349.7,882.8 1338.3,886.8 1332.6,881.8 1318.4,882.8 1309.9,883.8 1315.6,873.5 1319.8,859.0 1314.2,848.3 1297.1,836.7 1293.4,835.4 1290.0,844.5 1277.2,851.9 1271.5,856.7 1263.0,857.9 1250.2,864.7 1243.9,871.3 1243.6,880.8 1226.0,885.8 1226.8,893.5 1219.4,899.1 1220.3,894.5 1213.2,889.7 1209.5,904.5 1209.2,896.3 1206.1,889.7 1202.9,895.4 1203.8,908.0 1203.2,917.3 1206.6,926.2 1204.6,937.5 1200.4,943.3 1193.8,930.0 1188.1,922.2 1186.7,912.3 1191.8,900.0 1195.3,888.7 1201.8,895.4 1203.5,905.4 1191.8,930.0 1186.2,926.2 1179.0,934.6 1160.6,926.2 1150.6,930.0 1133.0,933.8 1123.0,942.6 1117.9,945.4 1112.2,941.9 1109.6,947.5 1112.2,956.3 1103.7,955.7 1096.0,949.6 1090.6,941.9 1089.2,939.7 1098.8,944.7 1113.6,939.7 1113.1,933.1 1106.5,926.9 1098.0,921.4 1090.9,917.3 1085.2,916.5 1080.9,909.7 1070.4,906.3 1061.0,910.6 1053.9,914.8 1045.4,922.2 1038.5,930.0 1036.8,937.5 1033.4,944.0 1030.6,953.0 1025.4,959.6 1021.2,964.1 1014.1,969.1 1011.2,974.5 1011.2,981.6 1012.6,988.4 1015.5,993.8 1018.3,994.9 1022.6,992.2 1026.0,988.9 1027.2,985.0 1028.6,989.5 1029.4,993.3 1030.8,996.5 1033.1,1002.3 1033.7,1007.4 1037.4,1008.4 1041.9,1004.3 1043.9,998.1 1045.1,991.1 1049.6,987.8 1049.6,982.2 1045.9,975.1 1047.9,968.5 1054.5,961.5 1057.6,955.7 1060.4,948.9 1065.6,947.5 1069.0,953.0 1064.7,958.3 1059.0,964.7 1057.6,970.9 1058.2,978.1 1060.4,982.7 1063.0,984.4 1069.5,982.2 1075.2,981.0 1081.2,984.4 1076.6,986.7 1069.5,987.3 1064.1,988.4 1063.8,991.7 1064.7,994.9 1066.1,998.1 1065.6,1000.7 1062.7,999.7 1061.3,996.5 1057.9,999.7 1056.7,1002.8 1057.0,1006.9 1056.4,1009.4 1053.9,1011.4 1052.8,1013.3 1050.2,1013.3 1049.3,1011.4 1044.8,1012.4 1040.8,1014.3 1037.7,1015.8 1034.0,1014.3 1030.6,1014.8 1028.0,1015.3 1026.0,1013.3 1025.2,1010.9 1024.6,1007.9 1026.0,1005.4 1028.0,1002.8 1026.9,999.2 1027.2,996.5 1022.6,999.7 1020.6,1000.2 1020.0,1004.9 1020.0,1007.9 1021.5,1010.9 1022.0,1014.3 1021.7,1015.8 1017.5,1017.2 1015.5,1018.2 1011.2,1020.1 1010.1,1022.9 1008.7,1025.2 1006.7,1027.5 1004.4,1028.9 1001.6,1029.8 1001.6,1032.9 998.1,1034.7 997.3,1036.4 994.2,1036.9 993.3,1035.1 991.6,1035.1 992.4,1039.5 988.5,1039.9 986.8,1039.0 983.6,1040.3 984.5,1043.3 989.9,1045.4 991.0,1047.9 993.6,1050.0 993.6,1053.2 993.3,1057.3 992.7,1060.8 989.9,1061.2 985.9,1060.8 980.5,1060.8 975.7,1060.4 974.2,1060.0 970.8,1062.0 971.7,1065.9 972.3,1070.0 971.7,1074.2 970.5,1076.4ZM980.5,1089.3 988.5,1091.4 991.3,1091.8 995.3,1089.3 1000.4,1086.8 1005.5,1085.8 1012.6,1085.4 1018.3,1085.1 1021.7,1085.1 1025.2,1084.0 1028.0,1085.4 1027.2,1087.6 1028.0,1089.7 1027.7,1093.1 1025.7,1095.9 1028.6,1096.9 1032.6,1099.3 1035.4,1099.3 1040.2,1101.0 1042.5,1105.0 1048.2,1106.7 1051.6,1108.0 1053.6,1105.7 1053.9,1102.0 1058.7,1099.6 1062.4,1100.7 1066.1,1102.0 1069.5,1104.0 1075.2,1105.0 1080.9,1106.0 1083.8,1104.7 1086.6,1104.0 1088.9,1104.7 1092.3,1105.3 1094.3,1104.7 1089.7,1109.3 1090.3,1112.2 1093.1,1117.1 1094.3,1121.6 1098.3,1128.1 1102.0,1134.3 1102.8,1138.9 1102.8,1141.6 1106.2,1146.4 1107.9,1150.9 1109.6,1153.9 1112.2,1156.5 1115.6,1159.7 1119.6,1162.7 1119.9,1165.3 1121.3,1166.1 1123.3,1168.5 1126.4,1168.5 1132.1,1166.7 1136.4,1166.1 1140.6,1165.6 1142.9,1164.7 1142.4,1166.4 1141.8,1169.3 1139.8,1174.2 1138.1,1178.5 1135.0,1182.8 1132.1,1187.1 1127.3,1192.0 1123.6,1194.2 1118.7,1197.6 1115.9,1201.3 1112.8,1204.5 1111.3,1207.9 1109.1,1211.3 1107.6,1214.2 1109.1,1217.9 1109.1,1221.3 1109.9,1225.6 1111.9,1228.5 1112.2,1232.9 1112.8,1238.7 1112.2,1242.8 1109.4,1246.1 1103.7,1248.8 1100.3,1253.0 1096.0,1256.0 1096.8,1259.3 1098.0,1263.6 1098.0,1268.9 1095.1,1271.4 1090.9,1273.6 1090.6,1276.7 1089.2,1283.1 1085.2,1287.7 1080.9,1293.0 1076.6,1297.0 1072.4,1300.4 1069.8,1301.4 1063.8,1301.8 1058.2,1302.8 1053.9,1304.2 1051.6,1302.8 1049.6,1302.1 1048.8,1299.4 1049.1,1295.7 1047.3,1292.7 1045.9,1288.0 1043.9,1283.1 1040.8,1279.9 1040.0,1277.0 1039.1,1272.0 1038.2,1265.8 1036.3,1261.1 1033.4,1255.1 1030.6,1249.1 1030.6,1244.6 1031.7,1241.7 1032.8,1237.3 1035.4,1234.3 1036.3,1230.0 1034.0,1225.6 1034.5,1223.6 1033.4,1219.9 1032.0,1215.6 1031.1,1212.7 1028.9,1209.9 1025.4,1207.0 1023.5,1204.2 1022.0,1201.3 1023.5,1198.5 1024.0,1196.2 1024.9,1192.8 1025.2,1190.0 1024.3,1187.1 1022.0,1186.0 1018.3,1185.7 1014.1,1186.3 1012.1,1183.7 1010.1,1181.1 1006.7,1180.3 1001.8,1180.8 999.3,1182.0 996.4,1182.8 992.4,1184.5 991.0,1185.1 988.2,1184.0 984.2,1183.7 978.5,1184.5 975.7,1186.0 970.8,1184.0 965.7,1180.8 963.4,1179.1 961.2,1177.1 959.5,1174.2 958.3,1171.9 955.8,1169.9 954.0,1167.0 952.6,1164.7 949.2,1163.0 949.5,1159.7 947.2,1156.2 950.1,1153.0 950.9,1149.4 951.2,1145.5 950.4,1141.9 948.4,1138.0 948.9,1135.9 950.6,1132.8 952.9,1128.1 955.2,1123.4 956.6,1120.3 959.7,1116.4 964.3,1113.9 968.0,1111.6 969.7,1107.7 969.4,1104.0 970.8,1100.7 975.1,1097.3 978.2,1094.5 979.4,1091.4ZM1137.2,1232.9 1139.2,1237.3 1140.1,1243.1 1137.8,1249.1 1135.8,1256.6 1133.2,1264.2 1130.7,1272.0 1125.6,1273.6 1121.3,1270.4 1120.7,1265.8 1120.7,1261.1 1123.3,1256.3 1122.2,1249.1 1123.6,1245.2 1128.7,1244.0 1133.0,1240.2 1134.1,1237.3ZM1225.1,1170.5 1228.3,1174.2 1230.0,1178.5 1228.3,1181.4 1224.8,1181.4 1224.0,1177.1 1224.3,1173.4ZM1402.3,1229.1 1404.6,1234.3 1405.7,1238.7 1408.0,1240.5 1410.3,1243.1 1412.6,1247.6 1413.1,1252.1 1415.1,1254.5 1419.7,1257.2 1421.4,1259.6 1424.2,1264.2 1426.5,1267.3 1430.8,1271.0 1432.5,1274.5 1433.3,1279.9 1433.9,1284.4 1432.2,1289.7 1430.8,1296.3 1427.4,1301.1 1425.9,1304.9 1424.0,1310.2 1423.4,1313.7 1417.4,1315.5 1413.4,1318.1 1412.9,1319.1 1408.9,1316.6 1405.2,1318.1 1399.5,1316.6 1395.8,1313.7 1394.1,1309.4 1390.1,1307.0 1391.0,1304.2 1389.0,1302.1 1388.1,1305.2 1383.8,1303.5 1385.0,1299.7 1388.7,1297.7 1381.9,1300.4 1378.7,1296.3 1370.5,1293.3 1363.9,1293.7 1355.4,1295.7 1349.1,1300.8 1344.0,1301.1 1336.9,1302.8 1332.6,1304.9 1327.0,1303.2 1324.1,1301.4 1326.1,1299.1 1326.1,1294.7 1324.1,1289.7 1322.7,1283.1 1319.8,1276.7 1319.6,1270.4 1320.7,1264.5 1321.8,1262.1 1328.9,1259.3 1334.9,1257.2 1342.0,1253.6 1344.6,1250.0 1347.7,1245.8 1351.1,1241.7 1355.1,1239.3 1359.1,1238.7 1361.7,1241.7 1365.6,1241.1 1367.1,1237.0 1369.1,1233.8 1372.2,1232.6 1373.9,1230.9 1377.3,1233.5 1383.0,1232.6 1386.4,1233.8 1384.4,1236.4 1383.6,1239.3 1382.4,1241.7 1386.1,1245.2 1392.9,1248.2 1397.5,1249.4 1398.9,1246.1 1399.8,1240.2 1400.1,1234.6 1401.5,1230.0ZM1408.6,1325.8 1413.7,1326.6 1418.8,1325.8 1418.8,1331.1 1414.6,1336.6 1410.9,1335.0 1410.0,1329.6ZM1488.2,1302.8 1493.1,1306.6 1494.8,1311.2 1497.6,1313.7 1504.7,1314.1 1503.3,1319.1 1500.5,1321.4 1496.5,1328.1 1495.3,1328.8 1493.1,1322.8 1491.4,1320.6 1493.6,1315.5 1492.5,1310.2ZM1488.2,1324.7 1492.8,1328.5 1490.2,1333.5 1489.1,1337.4 1484.3,1340.1 1482.5,1345.4 1477.7,1348.7 1470.6,1347.0 1472.0,1342.9 1478.6,1337.4 1484.0,1332.3 1486.0,1328.5ZM1370.2,1200.8 1373.9,1202.8 1378.7,1205.6 1381.9,1207.9 1386.1,1205.6 1389.0,1203.1 1393.8,1205.3 1398.1,1205.9 1402.3,1207.6 1408.0,1209.6 1411.7,1212.5 1416.6,1214.5 1417.7,1217.6 1416.6,1221.0 1418.5,1222.8 1421.4,1224.8 1424.8,1228.0 1423.7,1228.8 1418.0,1227.4 1414.0,1224.2 1408.9,1220.8 1406.0,1220.2 1404.6,1224.2 1399.5,1224.5 1392.4,1222.2 1391.0,1219.3 1389.0,1214.2 1383.8,1211.6 1378.2,1209.9 1375.3,1209.3 1372.2,1206.5 1375.0,1204.5 1371.9,1202.2ZM1429.9,1210.7 1429.4,1214.2 1423.7,1216.2 1419.4,1214.2 1425.1,1213.3ZM1329.2,1178.5 1332.1,1180.5 1336.1,1184.3 1332.4,1186.5 1332.6,1192.0 1335.2,1195.7 1329.8,1201.3 1328.4,1205.0 1327.0,1209.9 1322.7,1208.5 1314.7,1207.6 1310.5,1206.8 1309.9,1202.8 1307.3,1198.5 1308.8,1193.4 1313.3,1192.5 1317.3,1190.2 1319.0,1189.1 1321.8,1185.7 1325.0,1184.3 1327.2,1181.4ZM1268.1,1182.5 1274.3,1184.8 1278.0,1188.0 1282.3,1191.4 1285.7,1193.7 1290.5,1196.2 1294.0,1201.3 1297.7,1205.0 1298.5,1207.6 1298.2,1211.6 1297.9,1215.3 1294.2,1214.2 1288.6,1210.5 1284.0,1205.0 1282.3,1200.8 1279.2,1197.1 1277.7,1193.4 1273.8,1189.4 1270.4,1186.3ZM1297.4,1215.6 1300.8,1215.3 1305.1,1216.2 1310.7,1217.6 1312.4,1216.7 1317.0,1218.5 1321.6,1219.6 1322.4,1221.3 1322.7,1223.3 1317.3,1222.5 1312.2,1221.9 1305.6,1220.5 1299.6,1220.5 1296.5,1218.2ZM1353.1,1194.8 1349.7,1195.9 1342.6,1197.1 1339.2,1196.5 1338.6,1201.1 1336.9,1202.8 1335.5,1208.5 1336.6,1214.2 1339.5,1214.5 1341.7,1209.9 1346.0,1211.6 1344.9,1207.9 1342.3,1203.9 1342.6,1201.3 1347.7,1201.1 1343.7,1199.9 1346.9,1197.6 1351.1,1197.1ZM1361.1,1192.0 1360.2,1197.1 1361.1,1200.8 1363.4,1197.1 1362.5,1194.2ZM1361.1,1206.5 1369.1,1208.5 1362.5,1207.6ZM1340.3,1144.6 1344.6,1144.9 1345.4,1149.4 1342.6,1153.9 1344.3,1157.4 1349.4,1158.9 1350.0,1161.8 1345.4,1158.9 1340.0,1158.6 1338.0,1154.7 1337.8,1151.2 1339.5,1147.9ZM1354.0,1170.5 1356.5,1173.4 1357.1,1178.0 1354.8,1181.4 1352.8,1178.8 1350.3,1180.8 1348.3,1178.0 1344.0,1178.5 1346.9,1175.7 1349.4,1173.9 1352.6,1172.8ZM1342.9,1124.1 1343.2,1128.1 1341.2,1132.5 1340.6,1134.3 1338.6,1131.2 1340.3,1126.6ZM1311.9,1140.1 1312.7,1142.8 1309.0,1145.8 1305.9,1144.6 1307.6,1141.0ZM1396.6,1068.5 1399.2,1069.3 1400.3,1072.3 1400.9,1076.8 1399.5,1080.4 1398.1,1084.4 1397.5,1089.7 1394.9,1092.1 1391.8,1093.5 1388.4,1093.5 1383.3,1097.3 1380.4,1094.5 1376.7,1093.5 1372.5,1095.6 1369.3,1095.9 1371.0,1093.5 1375.3,1090.4 1382.4,1090.0 1384.1,1087.6 1386.1,1083.6 1387.5,1085.1 1391.0,1082.9 1394.1,1079.7 1394.9,1074.9 1394.9,1071.9ZM1400.6,1052.8 1405.2,1057.3 1410.3,1058.8 1411.4,1061.6 1406.6,1063.2 1404.6,1066.6 1399.5,1064.7 1395.2,1068.5 1394.9,1064.7 1396.4,1061.6 1400.1,1057.7ZM1369.3,1095.9 1372.5,1097.9 1371.3,1102.3 1370.5,1105.7 1367.3,1105.0 1367.1,1101.7 1365.6,1099.0 1367.3,1096.9ZM1377.6,1094.5 1379.6,1097.9 1375.0,1099.6 1373.9,1095.9ZM1402.9,1013.8 1403.8,1017.7 1404.3,1023.8 1406.0,1030.2 1407.2,1037.3 1402.9,1040.3 1405.2,1049.6 1400.6,1050.8 1400.9,1044.6 1401.5,1038.2 1401.2,1027.0 1400.3,1018.6ZM765.2,1130.6 769.4,1130.9 774.3,1133.1 779.1,1135.9 785.9,1139.5 782.2,1140.7 776.6,1141.0 775.1,1138.0 770.0,1135.6 765.2,1134.3 760.9,1134.6 756.9,1133.7 757.2,1131.6 762.3,1131.2ZM789.9,1140.7 796.5,1141.3 799.9,1143.4 802.4,1145.5 796.5,1145.8 792.8,1146.1 785.4,1145.5 785.7,1144.6 790.8,1144.6 789.9,1142.2ZM774.3,1144.9 780.0,1145.2 778.5,1146.7 774.3,1145.8ZM805.9,1144.9 810.4,1145.2 809.8,1146.4 805.9,1146.4ZM988.2,991.7 991.3,996.5 991.9,998.1 989.6,1002.8 988.2,1005.4 990.7,1005.4 992.4,1008.4 993.9,1012.4 996.4,1015.3 997.6,1017.7 999.6,1020.5 1001.8,1020.5 1002.1,1023.4 1000.4,1025.7 998.7,1027.5 1001.0,1028.4 998.1,1030.2 994.2,1030.2 989.9,1031.1 986.5,1032.5 980.8,1033.3 982.8,1031.6 985.1,1028.4 988.5,1027.0 985.1,1026.6 982.2,1026.1 984.5,1024.3 984.2,1021.0 983.9,1018.6 988.2,1018.6 988.5,1015.8 986.8,1012.9 987.9,1010.9 983.3,1011.4 983.3,1007.9 981.1,1006.4 981.1,1003.8 980.5,1000.2 980.5,997.1 981.9,993.8 982.8,991.7ZM976.2,1008.9 980.5,1011.9 979.9,1014.8 979.6,1018.6 978.8,1023.8 974.2,1025.7 969.1,1027.0 967.7,1024.3 970.0,1022.0 968.6,1018.6 968.6,1015.3 972.5,1013.8 972.0,1012.4 973.7,1009.4ZM1027.7,803.1 1045.4,796.5 1053.9,799.8 1065.3,794.8 1073.8,807.9 1056.7,818.6 1059.6,828.6 1059.6,842.0 1044.2,850.7 1036.8,838.1 1031.1,825.8 1028.3,814.1ZM1163.4,912.3 1169.1,916.5 1163.4,915.7ZM1270.1,780.5 1281.4,787.8 1294.2,804.7 1284.3,822.9 1272.9,817.1 1258.7,807.9ZM1388.1,862.5 1398.1,855.5 1412.3,861.3 1426.5,865.8 1412.3,872.4 1395.2,878.7 1386.7,869.1ZM1505.6,902.7 1516.1,904.5 1512.4,908.0 1506.2,907.1ZM1051.0,794.8 1073.8,796.5 1068.1,809.4ZM1323.5,1221.6 1326.1,1222.8 1324.7,1223.6ZM1327.0,1222.2 1335.5,1223.1 1329.8,1223.6ZM1337.8,1221.9 1346.9,1222.8 1339.8,1223.6ZM1352.0,1222.5 1354.0,1225.6 1348.3,1228.0 1350.3,1225.1ZM1353.7,1162.7 1354.0,1167.0 1352.6,1169.0 1350.3,1166.4 1352.0,1163.5ZM1346.3,1165.3 1344.3,1168.5 1345.4,1171.4 1348.3,1168.5 1347.4,1166.1ZM1342.6,1162.7 1336.9,1167.0 1333.5,1171.4 1330.7,1174.2 1335.5,1169.9 1339.8,1164.1ZM1153.4,778.7 1173.4,787.8 1167.7,798.1 1144.9,793.1 1130.7,799.8ZM1125.0,787.8 1142.1,798.1 1122.2,796.5ZM772.9,1119.3 777.4,1120.0 776.6,1121.2ZM774.6,1124.4 776.6,1127.5 775.1,1128.8ZM1144.0,901.5 1146.1,885.1 1152.3,868.7 1162.5,856.4 1170.7,852.3 1187.1,846.1 1193.3,850.2 1187.1,858.4 1172.8,864.6 1162.5,876.9 1156.4,889.2 1154.3,901.5 1160.5,911.8 1154.3,911.8ZM736.9,772.9 746.6,765.8 755.5,756.9 768.0,747.1 780.4,742.1 796.4,741.2 810.6,745.3 823.0,756.9 815.9,770.2 807.0,778.2 803.5,788.9 796.4,801.3 791.1,812.0 785.7,824.4 778.6,828.0 771.5,836.8 764.4,842.2 755.5,840.4 750.2,828.0 743.1,829.7 732.4,824.4 727.1,813.7 722.6,801.3 725.3,788.9 730.6,780.0ZM736.9,845.7 746.6,842.2 760.8,844.0 771.5,847.5 775.1,856.4 771.5,870.6 757.3,873.3 743.1,871.5 736.0,865.3 732.4,854.6ZM696.9,813.7 711.1,815.5 716.4,828.0 725.3,835.1 728.9,851.1 732.4,870.6 720.0,871.5 711.1,863.5 700.4,852.8 698.6,838.6 695.1,824.4ZM647.1,856.4 659.5,840.4 670.2,835.1 682.7,822.6 688.0,835.1 695.1,852.8 696.9,865.3 688.0,874.2 673.8,875.0 661.3,865.3ZM641.8,875.9 654.2,873.3 668.4,883.0 664.9,897.3 652.4,907.0 640.0,906.2ZM666.7,888.4 680.9,883.0 695.1,884.8 707.5,897.3 711.1,915.0 700.4,927.5 680.9,931.0 668.4,922.1 659.5,909.7 661.3,897.3ZM707.5,886.6 718.2,877.7 727.1,884.8 739.5,877.7 736.9,897.3 728.9,913.3 720.0,906.2 709.3,897.3Z" fill="#f2efe9"/><path d="M1079.8,1069.7 1076.6,1067.0 1075.8,1063.9 1076.9,1061.2 1078.6,1058.1 1081.5,1054.1 1084.3,1049.2 1087.5,1048.3 1089.4,1050.4 1089.7,1053.2 1092.3,1056.5 1095.1,1057.3 1098.0,1054.9 1101.1,1053.6 1105.9,1057.7 1110.5,1061.2 1115.0,1064.7 1115.3,1068.2 1110.2,1070.4 1105.1,1070.0 1098.3,1068.2 1095.1,1066.6 1088.6,1068.2 1083.8,1069.7ZM1096.6,1053.6 1097.1,1050.8 1102.2,1047.9 1107.9,1045.8 1105.1,1049.6 1104.0,1052.4 1100.8,1053.6ZM1143.5,1045.8 1147.8,1048.7 1147.8,1053.6 1140.1,1057.7 1142.6,1060.4 1146.6,1064.7 1147.2,1067.8 1147.2,1070.8 1147.8,1073.8 1150.0,1077.5 1150.3,1081.5 1150.3,1084.0 1146.9,1085.4 1142.6,1086.1 1136.9,1083.3 1136.1,1079.7 1137.2,1075.3 1139.2,1072.7 1136.7,1069.3 1133.5,1064.7 1132.1,1060.4 1131.3,1056.5 1132.4,1052.0 1135.8,1048.7 1137.8,1046.7ZM1166.2,1048.7 1171.4,1050.8 1171.1,1055.3 1165.7,1058.8 1164.3,1052.8ZM1207.5,1047.5 1221.7,1050.4 1220.9,1052.8 1208.9,1048.7ZM1307.9,1006.9 1306.2,1017.7 1294.2,1027.0 1292.8,1026.1 1303.6,1017.7 1306.5,1007.9ZM745.3,1039.0 755.8,1043.3 756.6,1048.7 748.1,1048.3 735.3,1047.5 742.4,1042.5ZM749.5,1050.8 756.1,1051.2 747.0,1060.8 748.1,1067.8 750.7,1065.9 751.2,1058.8 753.8,1051.6ZM758.1,1051.2 765.7,1053.6 762.6,1062.4 759.8,1058.8 759.5,1051.2 765.2,1050.0ZM772.6,1063.2 762.3,1068.9 759.8,1067.8 768.0,1063.9ZM770.9,1061.2 779.1,1061.6 780.0,1058.1 773.7,1059.2ZM714.8,1020.1 722.5,1031.6 719.7,1031.6 716.0,1017.7ZM667.0,969.7 674.2,978.1 665.6,978.7 662.8,975.1 672.7,969.1ZM647.1,942.6 657.1,951.6 644.3,954.3 640.0,947.5ZM685.5,987.3 697.5,991.1 680.4,990.6Z" fill="#b4d3df"/></g>
<g transform="translate(1024,0)"><path d="M518.8,948.9 534.5,939.7 522.5,929.3 533.4,918.1 544.7,908.9 551.8,903.6 564.6,911.5 574.6,913.2 590.2,916.5 595.9,919.0 607.3,920.6 615.8,921.4 624.4,919.0 634.3,914.0 641.4,919.0 642.3,914.0 652.8,919.8 667.0,925.4 678.4,931.6 689.8,927.7 701.2,930.0 712.6,929.3 718.2,931.6 723.9,919.8 727.3,902.7 733.9,911.5 738.2,923.8 743.8,927.7 748.1,936.8 753.8,923.8 762.3,917.3 765.2,927.7 766.0,939.0 759.5,942.6 752.4,943.3 748.1,953.0 743.8,959.6 739.0,964.1 732.5,972.1 729.6,977.5 727.3,986.7 729.1,990.6 733.9,997.6 743.8,1001.3 755.2,1008.9 763.2,1009.4 763.2,1017.7 766.6,1024.7 770.9,1028.0 772.9,1022.4 770.9,1012.9 779.4,1002.8 775.1,992.2 776.6,983.9 775.7,975.1 776.6,969.7 787.9,970.9 797.9,978.1 799.3,986.7 805.0,992.2 810.7,990.6 812.7,982.2 817.8,992.2 822.1,1000.2 826.3,1007.9 833.4,1012.9 837.7,1017.7 838.6,1024.7 834.9,1027.5 826.3,1032.5 815.0,1033.3 807.8,1033.8 802.2,1038.2 799.3,1040.3 795.6,1045.8 805.0,1040.3 813.5,1037.7 814.4,1040.3 812.1,1043.3 812.7,1048.7 816.4,1051.2 822.1,1052.4 825.2,1047.1 826.9,1050.8 823.5,1054.1 816.4,1056.9 810.4,1060.8 809.3,1056.5 807.8,1053.6 805.9,1054.5 801.3,1057.7 797.3,1060.4 795.9,1063.9 798.2,1067.4 796.2,1068.2 792.8,1068.9 787.9,1070.4 786.5,1071.9 785.4,1076.4 784.0,1078.2 782.2,1076.0 783.4,1080.0 781.1,1084.4 780.0,1085.4 782.2,1091.4 778.8,1093.1 775.1,1095.9 770.0,1099.6 767.2,1102.3 765.5,1106.7 766.6,1111.6 767.7,1114.2 769.4,1119.3 768.6,1123.4 766.6,1124.7 764.6,1122.2 763.2,1119.6 761.8,1115.8 761.8,1112.6 759.2,1109.3 756.6,1109.0 754.4,1110.0 751.0,1107.7 746.7,1108.0 743.3,1107.7 742.4,1110.9 743.3,1112.2 739.6,1111.3 735.3,1110.6 730.8,1109.6 727.9,1110.9 724.5,1113.2 721.1,1115.5 720.0,1118.7 720.5,1122.2 719.1,1127.2 718.8,1133.1 720.2,1136.8 722.8,1141.0 724.5,1143.7 728.2,1145.5 733.9,1144.6 738.2,1142.8 739.6,1139.5 740.7,1136.8 745.3,1135.9 749.5,1135.9 748.7,1138.9 747.8,1144.0 746.1,1147.9 744.4,1152.4 748.1,1153.3 755.2,1152.4 758.1,1153.0 760.3,1155.3 759.5,1159.7 759.2,1164.1 758.9,1167.0 760.9,1169.9 763.8,1171.9 765.2,1173.1 769.4,1171.9 772.9,1171.4 776.3,1173.1 777.1,1173.9 776.6,1176.0 774.0,1175.1 774.6,1177.1 768.6,1177.7 768.3,1175.7 765.2,1175.1 761.2,1174.8 759.2,1172.8 754.4,1170.2 753.2,1167.0 750.4,1163.5 748.1,1161.2 745.3,1160.6 740.4,1159.2 736.7,1158.3 734.5,1156.2 730.8,1153.3 726.8,1151.8 722.5,1153.3 716.8,1150.9 712.8,1150.0 708.3,1147.9 704.6,1146.1 701.2,1144.0 698.3,1142.2 696.3,1139.2 697.5,1135.9 696.3,1132.8 694.4,1130.6 691.2,1126.6 687.5,1123.4 686.1,1120.3 682.7,1117.7 679.8,1114.2 677.0,1110.6 675.3,1106.3 673.3,1104.0 670.7,1105.7 672.2,1110.6 675.9,1115.5 679.6,1120.3 682.1,1125.6 683.5,1127.8 685.5,1130.6 684.4,1131.6 681.6,1129.4 678.1,1126.6 677.9,1122.5 674.4,1119.6 671.9,1116.4 672.4,1114.8 670.5,1111.3 667.0,1107.3 665.1,1103.3 663.9,1100.7 663.1,1098.3 660.5,1096.2 659.1,1095.6 656.8,1094.2 654.0,1093.8 652.0,1090.0 650.3,1086.5 648.6,1083.3 647.1,1080.4 644.9,1076.0 643.2,1072.7 643.7,1067.4 642.9,1062.8 644.0,1056.5 644.3,1050.0 642.6,1042.9 642.3,1040.8 645.7,1041.6 647.1,1038.2 641.4,1033.8 635.2,1030.2 633.5,1027.0 631.5,1022.9 627.2,1017.7 625.5,1011.9 623.0,1006.9 617.8,1001.3 613.6,996.0 607.9,992.8 603.0,988.4 599.3,986.1 594.5,983.9 586.0,982.7 580.3,981.0 576.0,978.7 570.9,982.2 566.1,986.7 566.1,982.7 569.5,978.1 564.6,979.8 560.4,986.1 559.0,991.1 554.4,997.1 550.4,1001.3 543.3,1005.4 537.6,1008.9 531.9,1011.4 528.2,1012.9 533.4,1009.4 539.6,1005.9 545.3,1001.3 549.6,994.9 550.4,990.6 545.3,991.7 536.8,990.6 534.8,985.0 529.1,983.9 527.1,978.1 527.7,969.7 530.5,964.7 535.6,962.8 539.0,956.3 533.4,956.3 526.2,957.0 523.4,954.3 518.8,948.9ZM777.1,1173.9 780.8,1171.6 782.2,1168.8 785.7,1166.7 789.4,1166.1 793.1,1163.0 794.2,1165.3 792.5,1167.3 793.6,1171.4 793.3,1168.2 797.3,1165.6 801.3,1166.4 803.6,1168.5 808.7,1168.2 813.0,1169.6 817.8,1167.9 820.9,1168.2 821.5,1170.5 824.9,1173.9 826.9,1174.8 831.5,1179.1 834.9,1181.7 840.6,1181.7 843.4,1182.8 848.2,1184.5 851.1,1187.7 853.1,1192.2 854.8,1195.7 854.2,1198.5 859.0,1200.8 864.7,1201.3 869.3,1202.8 871.0,1205.6 877.5,1206.5 883.2,1206.8 887.5,1209.0 891.8,1212.2 896.0,1213.3 898.0,1218.5 897.4,1222.8 894.0,1227.7 890.9,1231.4 887.5,1235.8 886.1,1241.7 885.5,1249.1 884.1,1252.1 882.4,1257.5 880.7,1261.1 877.5,1265.4 873.3,1265.8 869.0,1267.3 865.3,1268.9 860.5,1272.9 858.8,1276.7 858.2,1283.1 854.2,1289.7 848.8,1295.3 845.1,1300.4 842.0,1303.2 837.1,1304.5 832.6,1302.8 830.9,1303.5 834.0,1305.9 835.4,1309.4 834.9,1313.4 833.2,1315.9 827.8,1318.4 820.1,1318.8 819.8,1323.6 818.1,1326.6 812.1,1327.0 814.4,1331.1 816.1,1332.3 812.1,1335.4 810.7,1342.1 805.0,1343.4 805.6,1349.1 809.6,1353.3 805.9,1357.5 802.2,1363.7 800.2,1370.0 802.4,1373.6 803.0,1378.4 807.0,1382.2 811.5,1385.6 807.8,1386.6 803.6,1388.1 805.6,1391.1 799.3,1389.1 795.0,1386.1 790.8,1384.1 786.5,1379.3 784.2,1374.6 783.4,1370.0 782.2,1363.2 782.2,1356.7 782.0,1350.3 782.2,1346.2 785.9,1342.1 786.5,1336.2 786.5,1330.4 787.1,1328.5 787.4,1324.7 788.2,1322.1 787.9,1317.3 787.6,1312.6 789.4,1310.9 790.8,1306.6 792.5,1301.4 793.3,1298.0 793.3,1293.0 793.9,1288.0 794.2,1283.1 795.3,1278.3 796.5,1273.2 796.8,1267.6 797.6,1261.1 797.3,1255.4 797.0,1252.1 793.9,1249.4 789.4,1245.8 783.7,1243.1 780.0,1238.7 777.7,1232.9 774.6,1227.1 772.6,1222.8 770.0,1218.5 766.3,1215.6 765.7,1211.6 768.6,1208.5 770.0,1205.6 766.9,1204.8 767.2,1201.3 769.2,1197.6 770.9,1195.7 772.9,1193.7 774.0,1191.1 777.1,1187.4 776.8,1182.8 775.7,1178.5 776.8,1175.4 777.1,1173.9ZM897.4,728.5 920.2,738.4 937.3,756.6 960.0,774.9 951.5,793.1 941.5,814.1 944.4,838.1 940.1,856.7 941.5,873.5 934.4,888.7 934.4,902.7 931.6,913.2 924.5,919.8 911.7,929.3 903.1,936.8 893.2,946.1 886.1,949.6 881.8,959.6 877.5,969.1 875.3,978.1 873.8,983.9 872.1,985.0 866.2,981.0 860.5,978.1 856.2,972.1 851.9,962.8 849.1,956.3 846.2,948.9 844.8,942.6 844.8,933.1 850.5,926.2 851.9,919.8 847.7,911.5 843.4,908.9 839.1,900.9 839.1,893.5 836.3,883.8 833.4,873.5 830.6,862.5 823.5,855.5 809.3,853.1 800.7,854.3 793.6,844.5 790.8,835.4 790.8,824.4 805.0,814.1 807.8,801.5 817.8,793.1 823.5,780.5 840.6,769.0 863.3,760.8 883.2,745.4 888.9,733.5ZM768.9,881.8 779.4,885.8 785.1,897.3 792.2,903.6 802.2,910.6 805.0,917.3 804.1,925.4 815.0,933.8 822.1,941.2 819.8,946.1 815.5,950.3 810.7,953.0 805.0,946.8 810.7,948.9 815.0,954.3 813.2,961.5 810.7,966.0 809.3,969.7 803.6,967.2 801.3,960.9 798.5,962.2 795.6,967.8 790.8,966.6 785.1,960.9 779.4,957.0 775.1,957.0 777.1,951.6 786.5,950.3 789.9,942.6 789.9,938.3 785.1,929.3 778.5,918.1 770.9,917.3 762.3,913.2 753.8,915.7 746.7,910.6 741.9,904.5 742.4,891.6 751.0,880.8 762.3,880.8ZM716.5,919.8 715.4,924.6 720.5,927.7 725.4,923.8 722.2,919.8ZM755.2,947.5 761.5,955.7 766.6,961.5 762.9,966.6 759.5,970.3 753.8,966.0 749.0,962.2 751.5,957.6 750.1,951.6ZM778.5,931.6 781.7,937.5 775.7,936.1ZM950.9,942.6 955.8,945.4 958.3,951.0 955.8,957.0 950.1,960.9 943.0,963.4 933.6,960.9 933.6,957.6 929.0,954.3 928.7,949.6 930.2,945.4 933.0,943.3 940.1,947.5 945.8,944.7ZM970.0,1078.6 972.0,1081.8 971.4,1085.1 975.7,1084.7 979.1,1086.8 981.6,1088.3 984.5,1086.1 990.7,1086.1 994.4,1082.9 997.6,1078.9 996.1,1076.0 999.6,1071.6 1003.3,1068.9 1006.4,1065.5 1005.8,1062.0 1008.1,1060.8 1012.4,1061.6 1015.5,1062.4 1017.8,1060.0 1022.3,1057.3 1025.4,1058.8 1026.9,1062.8 1028.9,1065.1 1032.0,1067.4 1035.4,1069.7 1037.4,1071.2 1039.7,1073.4 1041.9,1075.6 1041.4,1080.8 1042.5,1081.8 1043.9,1079.7 1045.6,1077.5 1044.2,1073.8 1045.9,1072.3 1049.3,1074.9 1048.2,1071.9 1045.1,1070.0 1043.1,1067.0 1037.1,1064.3 1035.4,1060.4 1032.3,1058.1 1032.0,1053.2 1034.3,1052.0 1036.3,1052.4 1036.3,1055.3 1037.7,1054.1 1040.5,1057.7 1043.6,1060.8 1048.5,1064.3 1051.6,1066.6 1052.5,1069.3 1052.2,1072.7 1054.2,1075.6 1056.7,1079.7 1059.0,1080.4 1057.6,1082.9 1058.7,1085.8 1060.7,1087.2 1061.9,1083.6 1063.0,1083.3 1064.4,1081.5 1065.3,1080.0 1062.1,1078.2 1062.1,1076.0 1062.1,1071.9 1063.8,1073.4 1065.3,1072.7 1066.7,1070.8 1069.5,1070.8 1071.2,1071.9 1071.8,1073.4 1071.5,1076.0 1072.9,1078.9 1073.2,1080.0 1074.1,1083.3 1074.9,1085.1 1077.2,1086.1 1079.8,1086.5 1082.3,1087.9 1084.3,1085.4 1088.0,1086.8 1090.3,1088.3 1093.1,1087.9 1095.4,1085.8 1098.3,1086.1 1099.7,1086.5 1098.8,1089.0 1099.1,1091.4 1098.0,1095.9 1096.6,1099.6 1095.7,1102.3 1094.3,1104.7 1089.7,1109.0 1089.7,1110.3 1091.4,1113.9 1094.3,1116.1 1095.7,1112.2 1096.3,1110.6 1095.7,1115.2 1098.3,1118.7 1102.0,1123.4 1104.8,1128.1 1107.9,1132.8 1108.2,1135.9 1112.2,1141.9 1116.8,1147.9 1118.7,1152.4 1119.3,1156.8 1120.4,1162.1 1125.0,1161.8 1129.3,1160.0 1135.0,1158.3 1139.2,1155.9 1144.9,1153.9 1149.2,1150.6 1154.0,1149.4 1157.7,1146.4 1161.1,1144.0 1163.4,1138.9 1166.5,1134.6 1167.1,1132.8 1163.7,1129.4 1159.7,1127.5 1157.4,1123.4 1157.4,1120.9 1155.2,1123.1 1152.0,1126.9 1146.3,1127.5 1143.8,1126.3 1143.5,1122.5 1142.4,1121.2 1141.5,1124.4 1139.2,1120.9 1137.8,1118.7 1135.2,1114.2 1133.5,1111.3 1135.0,1109.0 1137.8,1109.3 1141.5,1112.2 1143.5,1116.1 1149.2,1119.3 1153.4,1120.0 1157.4,1118.4 1160.0,1120.3 1161.4,1123.1 1164.8,1123.8 1172.2,1124.4 1177.6,1124.1 1181.9,1124.4 1187.6,1125.6 1189.0,1128.5 1191.0,1129.4 1193.0,1132.2 1196.4,1133.4 1197.8,1136.8 1200.4,1138.0 1203.5,1136.2 1203.5,1133.7 1204.1,1137.1 1204.1,1140.4 1204.1,1143.4 1205.2,1147.0 1206.1,1152.4 1206.9,1154.2 1209.2,1159.7 1210.0,1162.7 1212.6,1167.0 1213.7,1169.9 1214.9,1173.4 1217.4,1175.4 1219.4,1173.4 1222.3,1171.9 1224.0,1169.0 1224.0,1165.6 1225.4,1161.2 1225.1,1156.8 1226.8,1153.0 1229.1,1151.5 1233.9,1147.3 1237.4,1144.3 1240.5,1141.0 1244.2,1138.9 1245.0,1135.6 1248.7,1135.2 1251.6,1134.3 1254.4,1133.4 1257.3,1131.9 1259.3,1134.9 1260.1,1138.6 1263.2,1141.9 1265.2,1145.8 1265.2,1150.3 1266.7,1153.0 1270.9,1151.2 1273.5,1149.7 1275.2,1154.7 1276.3,1159.7 1277.5,1164.1 1277.2,1169.9 1276.6,1174.5 1280.0,1177.7 1282.0,1180.5 1282.6,1184.3 1284.0,1188.3 1286.0,1191.4 1291.4,1194.5 1293.4,1193.9 1291.1,1189.4 1291.1,1186.5 1288.8,1182.0 1286.0,1179.7 1283.2,1178.8 1281.7,1174.5 1279.2,1171.4 1280.0,1167.6 1281.2,1162.7 1281.7,1160.0 1284.0,1159.7 1286.0,1162.4 1288.0,1163.8 1290.0,1166.7 1292.3,1168.5 1294.2,1168.8 1295.4,1171.1 1295.1,1173.7 1299.4,1171.4 1301.1,1169.0 1303.6,1168.2 1306.5,1166.1 1307.6,1163.0 1307.9,1159.4 1306.5,1154.5 1303.3,1151.5 1299.9,1147.9 1297.9,1144.6 1297.9,1141.3 1300.5,1138.3 1304.2,1135.9 1308.8,1135.6 1310.7,1137.7 1310.5,1139.5 1312.7,1137.4 1315.6,1135.6 1319.8,1133.7 1322.7,1132.8 1327.0,1131.6 1329.2,1129.7 1332.9,1127.2 1336.9,1124.1 1338.3,1119.6 1340.9,1115.8 1343.7,1111.6 1344.0,1108.3 1343.7,1105.7 1341.7,1103.0 1340.9,1100.3 1339.2,1096.2 1336.3,1093.5 1337.2,1090.4 1340.0,1088.3 1345.4,1084.7 1342.0,1083.3 1336.9,1084.4 1334.9,1081.1 1331.5,1078.6 1333.5,1076.0 1337.2,1074.2 1341.5,1071.2 1344.9,1072.7 1342.9,1077.1 1342.0,1078.6 1347.7,1074.9 1351.1,1075.6 1353.1,1078.6 1352.0,1081.8 1356.5,1083.6 1356.5,1086.8 1356.5,1091.4 1356.8,1093.5 1360.0,1093.5 1362.8,1092.1 1364.5,1091.4 1365.4,1086.8 1364.5,1083.3 1362.2,1079.7 1359.7,1076.4 1361.1,1074.2 1365.6,1071.6 1366.2,1068.2 1368.5,1065.1 1371.3,1063.2 1374.7,1063.2 1378.2,1061.2 1382.4,1057.7 1386.1,1052.8 1391.2,1045.8 1396.1,1039.0 1396.9,1032.9 1397.5,1028.0 1398.9,1022.9 1398.9,1018.6 1395.8,1015.8 1391.8,1013.3 1386.7,1011.4 1385.0,1006.9 1389.2,1002.8 1393.8,997.1 1399.8,992.2 1403.5,987.8 1410.9,987.3 1419.4,988.4 1426.5,986.1 1430.8,988.9 1436.5,985.6 1437.6,981.0 1443.0,975.1 1449.3,972.1 1455.0,972.7 1453.0,976.9 1451.5,980.4 1457.5,981.0 1461.8,973.9 1464.3,969.1 1466.9,969.1 1464.6,976.9 1462.9,982.2 1461.2,985.6 1457.8,994.9 1460.1,1000.2 1461.5,1004.3 1457.8,1008.4 1457.2,1012.9 1452.1,1018.2 1447.8,1022.9 1442.7,1028.4 1441.6,1022.9 1439.9,1012.9 1440.4,1005.4 1443.3,997.6 1447.0,993.8 1455.0,986.1 1460.6,981.0 1466.3,976.3 1469.2,974.5 1469.7,982.2 1472.0,984.4 1479.1,981.6 1483.4,978.1 1489.9,972.1 1495.9,967.8 1504.7,963.4 1505.3,957.0 1501.6,954.3 1509.0,949.6 1513.3,953.0 1517.5,956.3 1520.4,951.0 1528.9,948.9 1538.3,946.1 1531.8,940.4 1524.1,937.5 1517.5,931.6 1510.4,924.6 1499.0,919.8 1491.4,917.3 1482.0,916.5 1474.9,919.0 1472.0,918.1 1457.8,919.0 1451.5,914.0 1446.4,907.1 1430.8,901.8 1422.2,897.3 1413.7,894.5 1400.9,895.4 1395.2,891.6 1363.9,889.7 1358.2,885.8 1349.7,882.8 1338.3,886.8 1332.6,881.8 1318.4,882.8 1309.9,883.8 1315.6,873.5 1319.8,859.0 1314.2,848.3 1297.1,836.7 1293.4,835.4 1290.0,844.5 1277.2,851.9 1271.5,856.7 1263.0,857.9 1250.2,864.7 1243.9,871.3 1243.6,880.8 1226.0,885.8 1226.8,893.5 1219.4,899.1 1220.3,894.5 1213.2,889.7 1209.5,904.5 1209.2,896.3 1206.1,889.7 1202.9,895.4 1203.8,908.0 1203.2,917.3 1206.6,926.2 1204.6,937.5 1200.4,943.3 1193.8,930.0 1188.1,922.2 1186.7,912.3 1191.8,900.0 1195.3,888.7 1201.8,895.4 1203.5,905.4 1191.8,930.0 1186.2,926.2 1179.0,934.6 1160.6,926.2 1150.6,930.0 1133.0,933.8 1123.0,942.6 1117.9,945.4 1112.2,941.9 1109.6,947.5 1112.2,956.3 1103.7,955.7 1096.0,949.6 1090.6,941.9 1089.2,939.7 1098.8,944.7 1113.6,939.7 1113.1,933.1 1106.5,926.9 1098.0,921.4 1090.9,917.3 1085.2,916.5 1080.9,909.7 1070.4,906.3 1061.0,910.6 1053.9,914.8 1045.4,922.2 1038.5,930.0 1036.8,937.5 1033.4,944.0 1030.6,953.0 1025.4,959.6 1021.2,964.1 1014.1,969.1 1011.2,974.5 1011.2,981.6 1012.6,988.4 1015.5,993.8 1018.3,994.9 1022.6,992.2 1026.0,988.9 1027.2,985.0 1028.6,989.5 1029.4,993.3 1030.8,996.5 1033.1,1002.3 1033.7,1007.4 1037.4,1008.4 1041.9,1004.3 1043.9,998.1 1045.1,991.1 1049.6,987.8 1049.6,982.2 1045.9,975.1 1047.9,968.5 1054.5,961.5 1057.6,955.7 1060.4,948.9 1065.6,947.5 1069.0,953.0 1064.7,958.3 1059.0,964.7 1057.6,970.9 1058.2,978.1 1060.4,982.7 1063.0,984.4 1069.5,982.2 1075.2,981.0 1081.2,984.4 1076.6,986.7 1069.5,987.3 1064.1,988.4 1063.8,991.7 1064.7,994.9 1066.1,998.1 1065.6,1000.7 1062.7,999.7 1061.3,996.5 1057.9,999.7 1056.7,1002.8 1057.0,1006.9 1056.4,1009.4 1053.9,1011.4 1052.8,1013.3 1050.2,1013.3 1049.3,1011.4 1044.8,1012.4 1040.8,1014.3 1037.7,1015.8 1034.0,1014.3 1030.6,1014.8 1028.0,1015.3 1026.0,1013.3 1025.2,1010.9 1024.6,1007.9 1026.0,1005.4 1028.0,1002.8 1026.9,999.2 1027.2,996.5 1022.6,999.7 1020.6,1000.2 1020.0,1004.9 1020.0,1007.9 1021.5,1010.9 1022.0,1014.3 1021.7,1015.8 1017.5,1017.2 1015.5,1018.2 1011.2,1020.1 1010.1,1022.9 1008.7,1025.2 1006.7,1027.5 1004.4,1028.9 1001.6,1029.8 1001.6,1032.9 998.1,1034.7 997.3,1036.4 994.2,1036.9 993.3,1035.1 991.6,1035.1 992.4,1039.5 988.5,1039.9 986.8,1039.0 983.6,1040.3 984.5,1043.3 989.9,1045.4 991.0,1047.9 993.6,1050.0 993.6,1053.2 993.3,1057.3 992.7,1060.8 989.9,1061.2 985.9,1060.8 980.5,1060.8 975.7,1060.4 974.2,1060.0 970.8,1062.0 971.7,1065.9 972.3,1070.0 971.7,1074.2 970.5,1076.4ZM980.5,1089.3 988.5,1091.4 991.3,1091.8 995.3,1089.3 1000.4,1086.8 1005.5,1085.8 1012.6,1085.4 1018.3,1085.1 1021.7,1085.1 1025.2,1084.0 1028.0,1085.4 1027.2,1087.6 1028.0,1089.7 1027.7,1093.1 1025.7,1095.9 1028.6,1096.9 1032.6,1099.3 1035.4,1099.3 1040.2,1101.0 1042.5,1105.0 1048.2,1106.7 1051.6,1108.0 1053.6,1105.7 1053.9,1102.0 1058.7,1099.6 1062.4,1100.7 1066.1,1102.0 1069.5,1104.0 1075.2,1105.0 1080.9,1106.0 1083.8,1104.7 1086.6,1104.0 1088.9,1104.7 1092.3,1105.3 1094.3,1104.7 1089.7,1109.3 1090.3,1112.2 1093.1,1117.1 1094.3,1121.6 1098.3,1128.1 1102.0,1134.3 1102.8,1138.9 1102.8,1141.6 1106.2,1146.4 1107.9,1150.9 1109.6,1153.9 1112.2,1156.5 1115.6,1159.7 1119.6,1162.7 1119.9,1165.3 1121.3,1166.1 1123.3,1168.5 1126.4,1168.5 1132.1,1166.7 1136.4,1166.1 1140.6,1165.6 1142.9,1164.7 1142.4,1166.4 1141.8,1169.3 1139.8,1174.2 1138.1,1178.5 1135.0,1182.8 1132.1,1187.1 1127.3,1192.0 1123.6,1194.2 1118.7,1197.6 1115.9,1201.3 1112.8,1204.5 1111.3,1207.9 1109.1,1211.3 1107.6,1214.2 1109.1,1217.9 1109.1,1221.3 1109.9,1225.6 1111.9,1228.5 1112.2,1232.9 1112.8,1238.7 1112.2,1242.8 1109.4,1246.1 1103.7,1248.8 1100.3,1253.0 1096.0,1256.0 1096.8,1259.3 1098.0,1263.6 1098.0,1268.9 1095.1,1271.4 1090.9,1273.6 1090.6,1276.7 1089.2,1283.1 1085.2,1287.7 1080.9,1293.0 1076.6,1297.0 1072.4,1300.4 1069.8,1301.4 1063.8,1301.8 1058.2,1302.8 1053.9,1304.2 1051.6,1302.8 1049.6,1302.1 1048.8,1299.4 1049.1,1295.7 1047.3,1292.7 1045.9,1288.0 1043.9,1283.1 1040.8,1279.9 1040.0,1277.0 1039.1,1272.0 1038.2,1265.8 1036.3,1261.1 1033.4,1255.1 1030.6,1249.1 1030.6,1244.6 1031.7,1241.7 1032.8,1237.3 1035.4,1234.3 1036.3,1230.0 1034.0,1225.6 1034.5,1223.6 1033.4,1219.9 1032.0,1215.6 1031.1,1212.7 1028.9,1209.9 1025.4,1207.0 1023.5,1204.2 1022.0,1201.3 1023.5,1198.5 1024.0,1196.2 1024.9,1192.8 1025.2,1190.0 1024.3,1187.1 1022.0,1186.0 1018.3,1185.7 1014.1,1186.3 1012.1,1183.7 1010.1,1181.1 1006.7,1180.3 1001.8,1180.8 999.3,1182.0 996.4,1182.8 992.4,1184.5 991.0,1185.1 988.2,1184.0 984.2,1183.7 978.5,1184.5 975.7,1186.0 970.8,1184.0 965.7,1180.8 963.4,1179.1 961.2,1177.1 959.5,1174.2 958.3,1171.9 955.8,1169.9 954.0,1167.0 952.6,1164.7 949.2,1163.0 949.5,1159.7 947.2,1156.2 950.1,1153.0 950.9,1149.4 951.2,1145.5 950.4,1141.9 948.4,1138.0 948.9,1135.9 950.6,1132.8 952.9,1128.1 955.2,1123.4 956.6,1120.3 959.7,1116.4 964.3,1113.9 968.0,1111.6 969.7,1107.7 969.4,1104.0 970.8,1100.7 975.1,1097.3 978.2,1094.5 979.4,1091.4ZM1137.2,1232.9 1139.2,1237.3 1140.1,1243.1 1137.8,1249.1 1135.8,1256.6 1133.2,1264.2 1130.7,1272.0 1125.6,1273.6 1121.3,1270.4 1120.7,1265.8 1120.7,1261.1 1123.3,1256.3 1122.2,1249.1 1123.6,1245.2 1128.7,1244.0 1133.0,1240.2 1134.1,1237.3ZM1225.1,1170.5 1228.3,1174.2 1230.0,1178.5 1228.3,1181.4 1224.8,1181.4 1224.0,1177.1 1224.3,1173.4ZM1402.3,1229.1 1404.6,1234.3 1405.7,1238.7 1408.0,1240.5 1410.3,1243.1 1412.6,1247.6 1413.1,1252.1 1415.1,1254.5 1419.7,1257.2 1421.4,1259.6 1424.2,1264.2 1426.5,1267.3 1430.8,1271.0 1432.5,1274.5 1433.3,1279.9 1433.9,1284.4 1432.2,1289.7 1430.8,1296.3 1427.4,1301.1 1425.9,1304.9 1424.0,1310.2 1423.4,1313.7 1417.4,1315.5 1413.4,1318.1 1412.9,1319.1 1408.9,1316.6 1405.2,1318.1 1399.5,1316.6 1395.8,1313.7 1394.1,1309.4 1390.1,1307.0 1391.0,1304.2 1389.0,1302.1 1388.1,1305.2 1383.8,1303.5 1385.0,1299.7 1388.7,1297.7 1381.9,1300.4 1378.7,1296.3 1370.5,1293.3 1363.9,1293.7 1355.4,1295.7 1349.1,1300.8 1344.0,1301.1 1336.9,1302.8 1332.6,1304.9 1327.0,1303.2 1324.1,1301.4 1326.1,1299.1 1326.1,1294.7 1324.1,1289.7 1322.7,1283.1 1319.8,1276.7 1319.6,1270.4 1320.7,1264.5 1321.8,1262.1 1328.9,1259.3 1334.9,1257.2 1342.0,1253.6 1344.6,1250.0 1347.7,1245.8 1351.1,1241.7 1355.1,1239.3 1359.1,1238.7 1361.7,1241.7 1365.6,1241.1 1367.1,1237.0 1369.1,1233.8 1372.2,1232.6 1373.9,1230.9 1377.3,1233.5 1383.0,1232.6 1386.4,1233.8 1384.4,1236.4 1383.6,1239.3 1382.4,1241.7 1386.1,1245.2 1392.9,1248.2 1397.5,1249.4 1398.9,1246.1 1399.8,1240.2 1400.1,1234.6 1401.5,1230.0ZM1408.6,1325.8 1413.7,1326.6 1418.8,1325.8 1418.8,1331.1 1414.6,1336.6 1410.9,1335.0 1410.0,1329.6ZM1488.2,1302.8 1493.1,1306.6 1494.8,1311.2 1497.6,1313.7 1504.7,1314.1 1503.3,1319.1 1500.5,1321.4 1496.5,1328.1 1495.3,1328.8 1493.1,1322.8 1491.4,1320.6 1493.6,1315.5 1492.5,1310.2ZM1488.2,1324.7 1492.8,1328.5 1490.2,1333.5 1489.1,1337.4 1484.3,1340.1 1482.5,1345.4 1477.7,1348.7 1470.6,1347.0 1472.0,1342.9 1478.6,1337.4 1484.0,1332.3 1486.0,1328.5ZM1370.2,1200.8 1373.9,1202.8 1378.7,1205.6 1381.9,1207.9 1386.1,1205.6 1389.0,1203.1 1393.8,1205.3 1398.1,1205.9 1402.3,1207.6 1408.0,1209.6 1411.7,1212.5 1416.6,1214.5 1417.7,1217.6 1416.6,1221.0 1418.5,1222.8 1421.4,1224.8 1424.8,1228.0 1423.7,1228.8 1418.0,1227.4 1414.0,1224.2 1408.9,1220.8 1406.0,1220.2 1404.6,1224.2 1399.5,1224.5 1392.4,1222.2 1391.0,1219.3 1389.0,1214.2 1383.8,1211.6 1378.2,1209.9 1375.3,1209.3 1372.2,1206.5 1375.0,1204.5 1371.9,1202.2ZM1429.9,1210.7 1429.4,1214.2 1423.7,1216.2 1419.4,1214.2 1425.1,1213.3ZM1329.2,1178.5 1332.1,1180.5 1336.1,1184.3 1332.4,1186.5 1332.6,1192.0 1335.2,1195.7 1329.8,1201.3 1328.4,1205.0 1327.0,1209.9 1322.7,1208.5 1314.7,1207.6 1310.5,1206.8 1309.9,1202.8 1307.3,1198.5 1308.8,1193.4 1313.3,1192.5 1317.3,1190.2 1319.0,1189.1 1321.8,1185.7 1325.0,1184.3 1327.2,1181.4ZM1268.1,1182.5 1274.3,1184.8 1278.0,1188.0 1282.3,1191.4 1285.7,1193.7 1290.5,1196.2 1294.0,1201.3 1297.7,1205.0 1298.5,1207.6 1298.2,1211.6 1297.9,1215.3 1294.2,1214.2 1288.6,1210.5 1284.0,1205.0 1282.3,1200.8 1279.2,1197.1 1277.7,1193.4 1273.8,1189.4 1270.4,1186.3ZM1297.4,1215.6 1300.8,1215.3 1305.1,1216.2 1310.7,1217.6 1312.4,1216.7 1317.0,1218.5 1321.6,1219.6 1322.4,1221.3 1322.7,1223.3 1317.3,1222.5 1312.2,1221.9 1305.6,1220.5 1299.6,1220.5 1296.5,1218.2ZM1353.1,1194.8 1349.7,1195.9 1342.6,1197.1 1339.2,1196.5 1338.6,1201.1 1336.9,1202.8 1335.5,1208.5 1336.6,1214.2 1339.5,1214.5 1341.7,1209.9 1346.0,1211.6 1344.9,1207.9 1342.3,1203.9 1342.6,1201.3 1347.7,1201.1 1343.7,1199.9 1346.9,1197.6 1351.1,1197.1ZM1361.1,1192.0 1360.2,1197.1 1361.1,1200.8 1363.4,1197.1 1362.5,1194.2ZM1361.1,1206.5 1369.1,1208.5 1362.5,1207.6ZM1340.3,1144.6 1344.6,1144.9 1345.4,1149.4 1342.6,1153.9 1344.3,1157.4 1349.4,1158.9 1350.0,1161.8 1345.4,1158.9 1340.0,1158.6 1338.0,1154.7 1337.8,1151.2 1339.5,1147.9ZM1354.0,1170.5 1356.5,1173.4 1357.1,1178.0 1354.8,1181.4 1352.8,1178.8 1350.3,1180.8 1348.3,1178.0 1344.0,1178.5 1346.9,1175.7 1349.4,1173.9 1352.6,1172.8ZM1342.9,1124.1 1343.2,1128.1 1341.2,1132.5 1340.6,1134.3 1338.6,1131.2 1340.3,1126.6ZM1311.9,1140.1 1312.7,1142.8 1309.0,1145.8 1305.9,1144.6 1307.6,1141.0ZM1396.6,1068.5 1399.2,1069.3 1400.3,1072.3 1400.9,1076.8 1399.5,1080.4 1398.1,1084.4 1397.5,1089.7 1394.9,1092.1 1391.8,1093.5 1388.4,1093.5 1383.3,1097.3 1380.4,1094.5 1376.7,1093.5 1372.5,1095.6 1369.3,1095.9 1371.0,1093.5 1375.3,1090.4 1382.4,1090.0 1384.1,1087.6 1386.1,1083.6 1387.5,1085.1 1391.0,1082.9 1394.1,1079.7 1394.9,1074.9 1394.9,1071.9ZM1400.6,1052.8 1405.2,1057.3 1410.3,1058.8 1411.4,1061.6 1406.6,1063.2 1404.6,1066.6 1399.5,1064.7 1395.2,1068.5 1394.9,1064.7 1396.4,1061.6 1400.1,1057.7ZM1369.3,1095.9 1372.5,1097.9 1371.3,1102.3 1370.5,1105.7 1367.3,1105.0 1367.1,1101.7 1365.6,1099.0 1367.3,1096.9ZM1377.6,1094.5 1379.6,1097.9 1375.0,1099.6 1373.9,1095.9ZM1402.9,1013.8 1403.8,1017.7 1404.3,1023.8 1406.0,1030.2 1407.2,1037.3 1402.9,1040.3 1405.2,1049.6 1400.6,1050.8 1400.9,1044.6 1401.5,1038.2 1401.2,1027.0 1400.3,1018.6ZM765.2,1130.6 769.4,1130.9 774.3,1133.1 779.1,1135.9 785.9,1139.5 782.2,1140.7 776.6,1141.0 775.1,1138.0 770.0,1135.6 765.2,1134.3 760.9,1134.6 756.9,1133.7 757.2,1131.6 762.3,1131.2ZM789.9,1140.7 796.5,1141.3 799.9,1143.4 802.4,1145.5 796.5,1145.8 792.8,1146.1 785.4,1145.5 785.7,1144.6 790.8,1144.6 789.9,1142.2ZM774.3,1144.9 780.0,1145.2 778.5,1146.7 774.3,1145.8ZM805.9,1144.9 810.4,1145.2 809.8,1146.4 805.9,1146.4ZM988.2,991.7 991.3,996.5 991.9,998.1 989.6,1002.8 988.2,1005.4 990.7,1005.4 992.4,1008.4 993.9,1012.4 996.4,1015.3 997.6,1017.7 999.6,1020.5 1001.8,1020.5 1002.1,1023.4 1000.4,1025.7 998.7,1027.5 1001.0,1028.4 998.1,1030.2 994.2,1030.2 989.9,1031.1 986.5,1032.5 980.8,1033.3 982.8,1031.6 985.1,1028.4 988.5,1027.0 985.1,1026.6 982.2,1026.1 984.5,1024.3 984.2,1021.0 983.9,1018.6 988.2,1018.6 988.5,1015.8 986.8,1012.9 987.9,1010.9 983.3,1011.4 983.3,1007.9 981.1,1006.4 981.1,1003.8 980.5,1000.2 980.5,997.1 981.9,993.8 982.8,991.7ZM976.2,1008.9 980.5,1011.9 979.9,1014.8 979.6,1018.6 978.8,1023.8 974.2,1025.7 969.1,1027.0 967.7,1024.3 970.0,1022.0 968.6,1018.6 968.6,1015.3 972.5,1013.8 972.0,1012.4 973.7,1009.4ZM1027.7,803.1 1045.4,796.5 1053.9,799.8 1065.3,794.8 1073.8,807.9 1056.7,818.6 1059.6,828.6 1059.6,842.0 1044.2,850.7 1036.8,838.1 1031.1,825.8 1028.3,814.1ZM1163.4,912.3 1169.1,916.5 1163.4,915.7ZM1270.1,780.5 1281.4,787.8 1294.2,804.7 1284.3,822.9 1272.9,817.1 1258.7,807.9ZM1388.1,862.5 1398.1,855.5 1412.3,861.3 1426.5,865.8 1412.3,872.4 1395.2,878.7 1386.7,869.1ZM1505.6,902.7 1516.1,904.5 1512.4,908.0 1506.2,907.1ZM1051.0,794.8 1073.8,796.5 1068.1,809.4ZM1323.5,1221.6 1326.1,1222.8 1324.7,1223.6ZM1327.0,1222.2 1335.5,1223.1 1329.8,1223.6ZM1337.8,1221.9 1346.9,1222.8 1339.8,1223.6ZM1352.0,1222.5 1354.0,1225.6 1348.3,1228.0 1350.3,1225.1ZM1353.7,1162.7 1354.0,1167.0 1352.6,1169.0 1350.3,1166.4 1352.0,1163.5ZM1346.3,1165.3 1344.3,1168.5 1345.4,1171.4 1348.3,1168.5 1347.4,1166.1ZM1342.6,1162.7 1336.9,1167.0 1333.5,1171.4 1330.7,1174.2 1335.5,1169.9 1339.8,1164.1ZM1153.4,778.7 1173.4,787.8 1167.7,798.1 1144.9,793.1 1130.7,799.8ZM1125.0,787.8 1142.1,798.1 1122.2,796.5ZM772.9,1119.3 777.4,1120.0 776.6,1121.2ZM774.6,1124.4 776.6,1127.5 775.1,1128.8ZM1144.0,901.5 1146.1,885.1 1152.3,868.7 1162.5,856.4 1170.7,852.3 1187.1,846.1 1193.3,850.2 1187.1,858.4 1172.8,864.6 1162.5,876.9 1156.4,889.2 1154.3,901.5 1160.5,911.8 1154.3,911.8ZM736.9,772.9 746.6,765.8 755.5,756.9 768.0,747.1 780.4,742.1 796.4,741.2 810.6,745.3 823.0,756.9 815.9,770.2 807.0,778.2 803.5,788.9 796.4,801.3 791.1,812.0 785.7,824.4 778.6,828.0 771.5,836.8 764.4,842.2 755.5,840.4 750.2,828.0 743.1,829.7 732.4,824.4 727.1,813.7 722.6,801.3 725.3,788.9 730.6,780.0ZM736.9,845.7 746.6,842.2 760.8,844.0 771.5,847.5 775.1,856.4 771.5,870.6 757.3,873.3 743.1,871.5 736.0,865.3 732.4,854.6ZM696.9,813.7 711.1,815.5 716.4,828.0 725.3,835.1 728.9,851.1 732.4,870.6 720.0,871.5 711.1,863.5 700.4,852.8 698.6,838.6 695.1,824.4ZM647.1,856.4 659.5,840.4 670.2,835.1 682.7,822.6 688.0,835.1 695.1,852.8 696.9,865.3 688.0,874.2 673.8,875.0 661.3,865.3ZM641.8,875.9 654.2,873.3 668.4,883.0 664.9,897.3 652.4,907.0 640.0,906.2ZM666.7,888.4 680.9,883.0 695.1,884.8 707.5,897.3 711.1,915.0 700.4,927.5 680.9,931.0 668.4,922.1 659.5,909.7 661.3,897.3ZM707.5,886.6 718.2,877.7 727.1,884.8 739.5,877.7 736.9,897.3 728.9,913.3 720.0,906.2 709.3,897.3Z" fill="#f2efe9"/><path d="M1079.8,1069.7 1076.6,1067.0 1075.8,1063.9 1076.9,1061.2 1078.6,1058.1 1081.5,1054.1 1084.3,1049.2 1087.5,1048.3 1089.4,1050.4 1089.7,1053.2 1092.3,1056.5 1095.1,1057.3 1098.0,1054.9 1101.1,1053.6 1105.9,1057.7 1110.5,1061.2 1115.0,1064.7 1115.3,1068.2 1110.2,1070.4 1105.1,1070.0 1098.3,1068.2 1095.1,1066.6 1088.6,1068.2 1083.8,1069.7ZM1096.6,1053.6 1097.1,1050.8 1102.2,1047.9 1107.9,1045.8 1105.1,1049.6 1104.0,1052.4 1100.8,1053.6ZM1143.5,1045.8 1147.8,1048.7 1147.8,1053.6 1140.1,1057.7 1142.6,1060.4 1146.6,1064.7 1147.2,1067.8 1147.2,1070.8 1147.8,1073.8 1150.0,1077.5 1150.3,1081.5 1150.3,1084.0 1146.9,1085.4 1142.6,1086.1 1136.9,1083.3 1136.1,1079.7 1137.2,1075.3 1139.2,1072.7 1136.7,1069.3 1133.5,1064.7 1132.1,1060.4 1131.3,1056.5 1132.4,1052.0 1135.8,1048.7 1137.8,1046.7ZM1166.2,1048.7 1171.4,1050.8 1171.1,1055.3 1165.7,1058.8 1164.3,1052.8ZM1207.5,1047.5 1221.7,1050.4 1220.9,1052.8 1208.9,1048.7ZM1307.9,1006.9 1306.2,1017.7 1294.2,1027.0 1292.8,1026.1 1303.6,1017.7 1306.5,1007.9ZM745.3,1039.0 755.8,1043.3 756.6,1048.7 748.1,1048.3 735.3,1047.5 742.4,1042.5ZM749.5,1050.8 756.1,1051.2 747.0,1060.8 748.1,1067.8 750.7,1065.9 751.2,1058.8 753.8,1051.6ZM758.1,1051.2 765.7,1053.6 762.6,1062.4 759.8,1058.8 759.5,1051.2 765.2,1050.0ZM772.6,1063.2 762.3,1068.9 759.8,1067.8 768.0,1063.9ZM770.9,1061.2 779.1,1061.6 780.0,1058.1 773.7,1059.2ZM714.8,1020.1 722.5,1031.6 719.7,1031.6 716.0,1017.7ZM667.0,969.7 674.2,978.1 665.6,978.7 662.8,975.1 672.7,969.1ZM647.1,942.6 657.1,951.6 644.3,954.3 640.0,947.5ZM685.5,987.3 697.5,991.1 680.4,990.6Z" fill="#b4d3df"/></g>
<path transform="translate(-1024,0)" d="M646.3,1038.2 726.2,1038.2 727.3,1036.9 731.0,1039.9 742.4,1041.6 745.3,1045.4 756.6,1048.7 760.3,1051.6 762.6,1062.8 760.6,1065.9 765.2,1067.4 772.3,1063.9 772.0,1061.6 779.4,1060.4 782.2,1056.5 784.5,1054.9 793.6,1054.9 795.0,1053.6 797.9,1049.2 800.2,1045.0 803.6,1045.8 804.1,1052.4 806.1,1054.5M595.9,918.6 595.9,982.2 601.6,983.3 605.9,988.4 610.2,992.2 617.3,1001.3 624.4,1006.4 625.5,1011.9M663.9,1100.7 670.7,1100.0 681.3,1104.7 689.2,1104.7 689.2,1103.0 694.1,1103.0 699.8,1110.3 708.6,1109.6 711.7,1115.5 719.7,1121.9M734.7,1156.8 734.7,1152.4 739.6,1152.4 739.6,1147.0 743.6,1147.0 745.8,1144.9M743.6,1147.0 743.3,1152.7 746.1,1153.3M742.7,1157.1 746.7,1155.6 747.3,1160.3M760.3,1155.3 752.4,1158.9 749.5,1161.2M753.2,1167.0 758.9,1167.3M762.0,1171.1 760.9,1175.1M777.1,1173.7 775.4,1178.0M791.6,1164.7 789.4,1172.8 792.2,1178.5 805.0,1180.5 805.0,1187.1 806.7,1195.4 813.5,1195.1 813.5,1187.1 823.5,1186.3 824.3,1183.7 826.6,1174.2M824.3,1183.7 827.8,1187.1 830.6,1194.2 836.3,1192.8 834.9,1181.7M836.3,1192.8 842.0,1192.0 843.4,1182.3M842.0,1192.0 847.7,1192.2 850.2,1186.5M806.7,1195.4 799.3,1199.9 798.2,1210.5M772.9,1194.5 780.8,1197.6 783.1,1201.1M768.9,1208.2 772.3,1212.7 779.4,1205.6 783.1,1201.1 787.1,1205.3 798.2,1210.5 786.8,1219.9 790.2,1225.6 796.5,1230.0 799.3,1230.0 801.6,1234.3 799.9,1240.2 800.2,1245.2 799.3,1249.1 796.8,1251.8M799.3,1249.1 801.0,1253.6 803.0,1259.6 805.9,1265.4 802.4,1270.4 802.2,1278.3 797.9,1288.0 797.9,1298.0 796.5,1308.4 795.0,1319.1 792.8,1330.4 793.6,1342.1 790.8,1354.5 787.9,1363.2 792.2,1372.3 799.3,1374.1M801.9,1375.5 801.9,1386.1M805.9,1265.4 812.1,1262.7 819.2,1263.6 819.8,1256.6 827.8,1254.5 831.5,1254.5 833.4,1250.0M799.3,1230.0 811.0,1227.1 814.1,1234.3 820.9,1237.3 825.8,1242.3 830.9,1245.5 833.4,1250.0 832.3,1262.7 838.6,1263.6 839.4,1268.9 841.7,1273.9M819.2,1263.6 826.3,1270.4 833.2,1272.9 836.3,1279.3 840.6,1279.9 841.7,1273.9 844.3,1276.7 843.4,1279.0 837.7,1286.4 833.2,1288.7 830.9,1301.4M833.2,1288.7 838.0,1291.3 845.7,1296.3 845.1,1300.4M990.7,1091.8 993.6,1102.0 986.8,1104.0 972.3,1110.3 972.3,1116.4 959.5,1116.4M972.3,1117.7 972.3,1121.9 962.9,1121.9 962.9,1129.7 960.0,1136.5 948.6,1136.5M972.3,1117.7 983.3,1125.0 1000.4,1142.8 1006.4,1143.4 1030.8,1129.7 1025.4,1125.0 1024.0,1109.0 1025.2,1108.3 1029.7,1098.3M1021.5,1085.1 1019.2,1093.8 1024.0,1102.3 1025.2,1108.3M983.3,1125.0 981.9,1153.9 970.0,1153.9 964.3,1155.3 962.3,1155.9 950.6,1150.9M1030.8,1129.7 1039.7,1131.2 1065.3,1134.3 1068.1,1134.3 1068.4,1103.7M1068.1,1134.3 1102.0,1134.3M1065.3,1134.3 1065.3,1141.9 1062.4,1153.3 1061.0,1163.5 1061.9,1167.3M1039.7,1131.2 1041.1,1140.4 1035.7,1159.4 1019.2,1161.2 1008.4,1159.2 1007.2,1165.0 1004.7,1180.3M1006.4,1143.4 1007.0,1153.9 997.9,1155.6 994.2,1155.0 985.6,1160.0 981.4,1166.7 989.0,1169.3 996.7,1167.0 1001.3,1166.7 1003.3,1162.4 1007.2,1165.0M996.7,1167.0 1000.4,1180.8M989.0,1166.7 988.5,1184.3M974.2,1168.5 975.7,1185.7M964.3,1163.0 974.2,1169.3 973.1,1177.1M949.5,1162.7 964.3,1163.0 962.3,1155.9M1036.8,1161.2 1034.8,1169.9 1029.7,1180.0 1021.5,1185.4M1038.2,1161.2 1041.1,1169.9 1041.1,1177.1 1038.2,1184.3 1042.5,1192.8 1049.6,1188.5 1061.0,1185.7 1075.2,1184.3 1063.8,1172.8 1061.9,1167.3M1042.5,1192.8 1024.9,1192.2M1029.1,1192.2 1036.8,1201.3 1029.7,1211.3M1075.2,1184.3 1084.6,1188.5 1082.3,1195.7 1080.9,1202.8 1080.1,1211.3 1084.6,1221.3 1075.2,1231.4 1081.8,1237.3 1065.0,1232.9 1059.6,1229.7 1059.0,1219.3 1034.0,1215.6M1093.7,1186.5 1096.0,1195.7 1093.7,1201.3 1108.5,1211.9M1093.7,1186.5 1099.1,1185.4 1106.5,1188.5 1116.2,1187.1 1115.0,1203.3M1116.2,1187.1 1132.1,1175.7 1119.3,1167.0M1100.8,1156.8 1110.8,1155.6 1119.3,1162.7M1093.7,1169.9 1072.4,1171.4 1061.9,1167.3M1093.7,1169.9 1096.6,1181.4 1099.1,1185.4M1093.7,1169.9 1098.5,1162.7 1100.8,1156.8 1106.8,1147.9M1084.6,1188.5 1093.7,1186.5M1083.8,1201.3 1093.7,1201.3M1065.3,1230.0 1059.6,1235.8 1059.6,1245.5 1063.8,1249.1M1030.6,1248.5 1056.2,1249.1 1063.8,1249.1M1063.8,1249.1 1056.7,1250.6 1056.7,1262.7 1053.9,1262.7 1053.9,1271.4 1053.9,1283.1 1043.9,1283.5M1053.9,1271.4 1069.5,1274.2 1080.3,1263.6 1086.0,1263.9 1090.9,1249.1 1083.5,1243.4 1073.8,1250.3 1069.0,1250.6 1063.8,1249.1M1111.9,1231.4 1096.6,1231.4 1095.1,1238.7 1097.1,1246.1M1083.5,1243.4 1090.9,1238.7 1090.9,1225.4 1084.6,1221.3M1086.0,1263.9 1090.6,1277.7M1136.4,1048.7 1130.7,1028.0 1140.6,1031.6 1153.4,1026.6 1166.2,1030.2 1172.5,1027.0 1171.4,1020.1 1183.3,1011.4 1198.4,1009.9 1199.5,1013.8 1206.1,1017.7 1214.6,1014.3 1223.1,1030.2 1233.1,1029.3 1245.3,1037.3M1245.3,1037.3 1251.6,1030.7 1264.4,1033.8 1278.3,1023.8 1288.6,1032.0 1300.8,1032.9 1303.6,1036.9 1321.3,1032.5 1328.9,1034.7 1341.2,1018.6 1352.6,1017.7 1358.2,1024.7 1361.1,1036.0 1369.6,1042.5 1379.6,1041.6 1379.6,1044.6 1375.3,1054.9 1368.8,1064.7M1245.3,1037.3 1233.1,1046.7 1231.7,1054.9 1225.1,1063.5 1214.6,1072.3 1206.6,1076.0 1210.3,1085.1 1218.3,1090.4 1225.4,1090.0 1221.7,1100.7 1227.7,1107.7 1247.9,1115.5 1249.6,1115.8 1258.7,1117.1 1267.2,1112.2 1274.3,1114.5 1275.8,1125.0 1274.9,1128.1 1284.9,1135.6 1287.7,1132.8 1295.7,1131.9 1304.2,1135.9M1245.3,1037.3 1255.8,1048.7 1260.4,1054.9 1270.9,1064.7 1294.2,1068.5 1304.2,1064.7 1314.2,1056.9 1322.7,1052.4 1336.9,1047.5 1337.5,1043.7 1328.9,1034.7M1156.0,1069.7 1156.3,1054.9 1163.7,1052.4 1173.4,1058.8 1180.5,1060.4 1193.3,1066.6 1198.7,1064.7 1208.9,1062.8 1225.1,1063.5M1150.3,1084.0 1159.1,1083.3 1171.1,1086.8 1171.4,1091.1 1172.8,1104.7 1170.2,1109.6 1173.4,1121.9 1172.2,1124.4M1171.4,1091.1 1183.3,1083.3 1190.4,1084.0 1200.4,1085.1 1210.3,1085.1M1170.2,1109.6 1186.2,1110.6 1194.1,1104.0 1199.0,1095.6 1200.7,1089.3 1210.3,1085.1M1156.0,1069.7 1174.8,1074.2 1186.2,1084.0M1193.3,1072.3 1197.5,1076.0 1204.6,1073.0M1218.3,1090.4 1210.3,1100.7 1206.1,1109.0 1196.1,1118.7 1199.0,1126.6 1191.0,1129.1M1227.7,1107.7 1226.0,1113.9 1235.9,1120.6 1247.3,1120.6M1250.2,1134.0 1248.7,1124.4 1251.6,1120.6 1258.7,1124.4 1257.3,1128.1 1259.5,1129.7 1259.5,1136.8M1259.5,1136.8 1263.0,1128.1 1267.8,1119.3 1273.8,1114.5M1281.4,1139.5 1275.2,1144.9 1277.5,1152.4 1278.6,1164.1 1277.2,1169.9M1281.4,1139.5 1284.3,1146.4 1294.8,1147.0 1297.1,1153.9 1296.2,1157.4 1288.6,1157.4 1289.7,1165.0M1287.7,1132.8 1292.8,1138.9 1297.1,1144.9 1299.9,1149.4 1302.8,1156.8 1298.5,1164.1 1294.2,1168.8M1282.0,1180.0 1287.1,1181.4M1122.7,1076.0 1124.4,1083.6 1127.8,1090.4 1128.4,1099.0 1134.7,1109.0M1100.0,1085.8 1110.8,1085.4 1117.3,1084.0 1124.4,1083.6M1117.3,1084.0 1113.6,1094.2 1107.4,1097.6 1108.5,1101.7 1124.1,1111.9 1129.3,1111.9 1133.5,1109.0M1096.3,1111.3 1100.8,1111.6 1108.5,1101.7M1098.3,1099.0 1101.7,1101.3 1107.4,1097.6M1118.7,1151.2 1122.2,1147.9 1130.7,1149.4 1144.9,1143.4 1148.0,1150.6M1144.9,1143.4 1154.0,1132.2 1143.8,1127.2M1115.0,1068.5 1110.8,1060.8 1123.6,1064.7 1129.3,1067.4 1135.0,1067.4M1120.7,1069.7 1122.2,1074.2 1129.3,1078.2 1135.0,1076.0M1331.5,1186.5 1322.7,1194.2 1315.6,1195.1 1308.8,1193.4M1398.1,1205.9 1398.1,1224.5M1358.2,1221.9 1352.6,1225.6 1351.1,1224.2M1079.5,918.1 1078.1,924.6 1082.3,935.3 1081.5,953.0 1086.0,969.1 1076.1,981.0M1055.3,923.0 1048.2,931.6 1038.2,946.1 1031.7,962.8 1032.6,978.1 1029.7,988.4M1065.6,947.5 1059.6,927.7 1055.3,923.0 1071.0,915.7 1079.5,918.1M1076.6,987.3 1075.2,997.6 1077.2,1005.4 1088.0,1017.7 1087.2,1023.4 1092.3,1023.4 1098.0,1031.6 1110.8,1034.2 1110.5,1040.3 1105.9,1046.3M1052.8,1013.3 1063.8,1017.7 1063.8,1024.7 1065.3,1027.0 1065.3,1031.6 1061.0,1040.3 1072.4,1042.5 1078.1,1040.3 1082.3,1048.7M1075.2,997.6 1072.4,1005.4 1063.8,1015.8M1075.2,988.4 1069.5,997.6 1057.0,1000.2M1056.7,1004.3 1066.7,1003.3 1072.4,1006.9M1037.7,1012.9 1039.7,1029.3 1042.5,1031.6 1050.5,1035.5 1061.0,1036.9M1032.0,1031.6 1036.3,1039.0 1045.4,1040.3 1045.6,1043.3 1043.9,1048.7 1046.8,1051.2 1051.0,1053.6 1054.7,1050.4 1055.3,1048.7 1061.0,1043.3M1021.5,1010.9 1016.9,1022.4 1014.1,1029.3 1015.2,1036.0 1020.3,1038.6 1018.6,1044.2 1024.3,1044.2 1034.0,1044.6 1035.4,1040.3 1031.4,1032.5 1039.4,1029.3M1006.7,1027.5 1005.5,1030.2 1012.6,1036.0 1015.2,1036.0M1014.4,1050.0 1016.1,1048.7 1016.9,1051.2 1022.6,1049.2 1026.9,1048.7 1026.9,1047.1 1024.0,1044.6M1018.3,1059.6 1016.6,1058.1 1016.3,1054.1 1014.4,1050.0M1031.1,1048.7 1036.0,1048.7 1036.3,1052.4M991.9,1061.2 998.4,1063.9 1006.1,1065.1M972.0,1067.0 978.5,1066.2 977.4,1070.4 975.7,1075.6 977.1,1080.8 976.0,1084.4M1035.7,1051.2 1042.5,1052.8 1052.2,1054.1 1052.8,1058.8 1052.5,1064.7 1055.3,1067.4 1055.6,1070.4 1055.9,1074.2 1054.2,1075.6M1042.5,1052.8 1042.5,1058.1 1049.6,1064.3M1052.2,1054.1 1061.0,1056.9 1062.1,1059.2 1060.7,1064.7 1061.9,1069.3 1069.5,1070.0 1072.4,1067.8 1076.6,1066.6M1062.1,1060.0 1068.1,1059.6 1078.4,1060.0M1054.7,1050.8 1058.2,1051.6 1061.6,1056.5M1072.4,1042.5 1077.2,1052.8 1081.5,1054.1M1072.1,1070.8 1072.4,1067.8 1076.6,1066.2M1061.0,1036.9 1060.1,1040.8 1061.0,1043.3" fill="none" stroke="#d2c3ce" stroke-width="1.3" stroke-linejoin="round"/>
<path transform="translate(0,0)" d="M646.3,1038.2 726.2,1038.2 727.3,1036.9 731.0,1039.9 742.4,1041.6 745.3,1045.4 756.6,1048.7 760.3,1051.6 762.6,1062.8 760.6,1065.9 765.2,1067.4 772.3,1063.9 772.0,1061.6 779.4,1060.4 782.2,1056.5 784.5,1054.9 793.6,1054.9 795.0,1053.6 797.9,1049.2 800.2,1045.0 803.6,1045.8 804.1,1052.4 806.1,1054.5M595.9,918.6 595.9,982.2 601.6,983.3 605.9,988.4 610.2,992.2 617.3,1001.3 624.4,1006.4 625.5,1011.9M663.9,1100.7 670.7,1100.0 681.3,1104.7 689.2,1104.7 689.2,1103.0 694.1,1103.0 699.8,1110.3 708.6,1109.6 711.7,1115.5 719.7,1121.9M734.7,1156.8 734.7,1152.4 739.6,1152.4 739.6,1147.0 743.6,1147.0 745.8,1144.9M743.6,1147.0 743.3,1152.7 746.1,1153.3M742.7,1157.1 746.7,1155.6 747.3,1160.3M760.3,1155.3 752.4,1158.9 749.5,1161.2M753.2,1167.0 758.9,1167.3M762.0,1171.1 760.9,1175.1M777.1,1173.7 775.4,1178.0M791.6,1164.7 789.4,1172.8 792.2,1178.5 805.0,1180.5 805.0,1187.1 806.7,1195.4 813.5,1195.1 813.5,1187.1 823.5,1186.3 824.3,1183.7 826.6,1174.2M824.3,1183.7 827.8,1187.1 830.6,1194.2 836.3,1192.8 834.9,1181.7M836.3,1192.8 842.0,1192.0 843.4,1182.3M842.0,1192.0 847.7,1192.2 850.2,1186.5M806.7,1195.4 799.3,1199.9 798.2,1210.5M772.9,1194.5 780.8,1197.6 783.1,1201.1M768.9,1208.2 772.3,1212.7 779.4,1205.6 783.1,1201.1 787.1,1205.3 798.2,1210.5 786.8,1219.9 790.2,1225.6 796.5,1230.0 799.3,1230.0 801.6,1234.3 799.9,1240.2 800.2,1245.2 799.3,1249.1 796.8,1251.8M799.3,1249.1 801.0,1253.6 803.0,1259.6 805.9,1265.4 802.4,1270.4 802.2,1278.3 797.9,1288.0 797.9,1298.0 796.5,1308.4 795.0,1319.1 792.8,1330.4 793.6,1342.1 790.8,1354.5 787.9,1363.2 792.2,1372.3 799.3,1374.1M801.9,1375.5 801.9,1386.1M805.9,1265.4 812.1,1262.7 819.2,1263.6 819.8,1256.6 827.8,1254.5 831.5,1254.5 833.4,1250.0M799.3,1230.0 811.0,1227.1 814.1,1234.3 820.9,1237.3 825.8,1242.3 830.9,1245.5 833.4,1250.0 832.3,1262.7 838.6,1263.6 839.4,1268.9 841.7,1273.9M819.2,1263.6 826.3,1270.4 833.2,1272.9 836.3,1279.3 840.6,1279.9 841.7,1273.9 844.3,1276.7 843.4,1279.0 837.7,1286.4 833.2,1288.7 830.9,1301.4M833.2,1288.7 838.0,1291.3 845.7,1296.3 845.1,1300.4M990.7,1091.8 993.6,1102.0 986.8,1104.0 972.3,1110.3 972.3,1116.4 959.5,1116.4M972.3,1117.7 972.3,1121.9 962.9,1121.9 962.9,1129.7 960.0,1136.5 948.6,1136.5M972.3,1117.7 983.3,1125.0 1000.4,1142.8 1006.4,1143.4 1030.8,1129.7 1025.4,1125.0 1024.0,1109.0 1025.2,1108.3 1029.7,1098.3M1021.5,1085.1 1019.2,1093.8 1024.0,1102.3 1025.2,1108.3M983.3,1125.0 981.9,1153.9 970.0,1153.9 964.3,1155.3 962.3,1155.9 950.6,1150.9M1030.8,1129.7 1039.7,1131.2 1065.3,1134.3 1068.1,1134.3 1068.4,1103.7M1068.1,1134.3 1102.0,1134.3M1065.3,1134.3 1065.3,1141.9 1062.4,1153.3 1061.0,1163.5 1061.9,1167.3M1039.7,1131.2 1041.1,1140.4 1035.7,1159.4 1019.2,1161.2 1008.4,1159.2 1007.2,1165.0 1004.7,1180.3M1006.4,1143.4 1007.0,1153.9 997.9,1155.6 994.2,1155.0 985.6,1160.0 981.4,1166.7 989.0,1169.3 996.7,1167.0 1001.3,1166.7 1003.3,1162.4 1007.2,1165.0M996.7,1167.0 1000.4,1180.8M989.0,1166.7 988.5,1184.3M974.2,1168.5 975.7,1185.7M964.3,1163.0 974.2,1169.3 973.1,1177.1M949.5,1162.7 964.3,1163.0 962.3,1155.9M1036.8,1161.2 1034.8,1169.9 1029.7,1180.0 1021.5,1185.4M1038.2,1161.2 1041.1,1169.9 1041.1,1177.1 1038.2,1184.3 1042.5,1192.8 1049.6,1188.5 1061.0,1185.7 1075.2,1184.3 1063.8,1172.8 1061.9,1167.3M1042.5,1192.8 1024.9,1192.2M1029.1,1192.2 1036.8,1201.3 1029.7,1211.3M1075.2,1184.3 1084.6,1188.5 1082.3,1195.7 1080.9,1202.8 1080.1,1211.3 1084.6,1221.3 1075.2,1231.4 1081.8,1237.3 1065.0,1232.9 1059.6,1229.7 1059.0,1219.3 1034.0,1215.6M1093.7,1186.5 1096.0,1195.7 1093.7,1201.3 1108.5,1211.9M1093.7,1186.5 1099.1,1185.4 1106.5,1188.5 1116.2,1187.1 1115.0,1203.3M1116.2,1187.1 1132.1,1175.7 1119.3,1167.0M1100.8,1156.8 1110.8,1155.6 1119.3,1162.7M1093.7,1169.9 1072.4,1171.4 1061.9,1167.3M1093.7,1169.9 1096.6,1181.4 1099.1,1185.4M1093.7,1169.9 1098.5,1162.7 1100.8,1156.8 1106.8,1147.9M1084.6,1188.5 1093.7,1186.5M1083.8,1201.3 1093.7,1201.3M1065.3,1230.0 1059.6,1235.8 1059.6,1245.5 1063.8,1249.1M1030.6,1248.5 1056.2,1249.1 1063.8,1249.1M1063.8,1249.1 1056.7,1250.6 1056.7,1262.7 1053.9,1262.7 1053.9,1271.4 1053.9,1283.1 1043.9,1283.5M1053.9,1271.4 1069.5,1274.2 1080.3,1263.6 1086.0,1263.9 1090.9,1249.1 1083.5,1243.4 1073.8,1250.3 1069.0,1250.6 1063.8,1249.1M1111.9,1231.4 1096.6,1231.4 1095.1,1238.7 1097.1,1246.1M1083.5,1243.4 1090.9,1238.7 1090.9,1225.4 1084.6,1221.3M1086.0,1263.9 1090.6,1277.7M1136.4,1048.7 1130.7,1028.0 1140.6,1031.6 1153.4,1026.6 1166.2,1030.2 1172.5,1027.0 1171.4,1020.1 1183.3,1011.4 1198.4,1009.9 1199.5,1013.8 1206.1,1017.7 1214.6,1014.3 1223.1,1030.2 1233.1,1029.3 1245.3,1037.3M1245.3,1037.3 1251.6,1030.7 1264.4,1033.8 1278.3,1023.8 1288.6,1032.0 1300.8,1032.9 1303.6,1036.9 1321.3,1032.5 1328.9,1034.7 1341.2,1018.6 1352.6,1017.7 1358.2,1024.7 1361.1,1036.0 1369.6,1042.5 1379.6,1041.6 1379.6,1044.6 1375.3,1054.9 1368.8,1064.7M1245.3,1037.3 1233.1,1046.7 1231.7,1054.9 1225.1,1063.5 1214.6,1072.3 1206.6,1076.0 1210.3,1085.1 1218.3,1090.4 1225.4,1090.0 1221.7,1100.7 1227.7,1107.7 1247.9,1115.5 1249.6,1115.8 1258.7,1117.1 1267.2,1112.2 1274.3,1114.5 1275.8,1125.0 1274.9,1128.1 1284.9,1135.6 1287.7,1132.8 1295.7,1131.9 1304.2,1135.9M1245.3,1037.3 1255.8,1048.7 1260.4,1054.9 1270.9,1064.7 1294.2,1068.5 1304.2,1064.7 1314.2,1056.9 1322.7,1052.4 1336.9,1047.5 1337.5,1043.7 1328.9,1034.7M1156.0,1069.7 1156.3,1054.9 1163.7,1052.4 1173.4,1058.8 1180.5,1060.4 1193.3,1066.6 1198.7,1064.7 1208.9,1062.8 1225.1,1063.5M1150.3,1084.0 1159.1,1083.3 1171.1,1086.8 1171.4,1091.1 1172.8,1104.7 1170.2,1109.6 1173.4,1121.9 1172.2,1124.4M1171.4,1091.1 1183.3,1083.3 1190.4,1084.0 1200.4,1085.1 1210.3,1085.1M1170.2,1109.6 1186.2,1110.6 1194.1,1104.0 1199.0,1095.6 1200.7,1089.3 1210.3,1085.1M1156.0,1069.7 1174.8,1074.2 1186.2,1084.0M1193.3,1072.3 1197.5,1076.0 1204.6,1073.0M1218.3,1090.4 1210.3,1100.7 1206.1,1109.0 1196.1,1118.7 1199.0,1126.6 1191.0,1129.1M1227.7,1107.7 1226.0,1113.9 1235.9,1120.6 1247.3,1120.6M1250.2,1134.0 1248.7,1124.4 1251.6,1120.6 1258.7,1124.4 1257.3,1128.1 1259.5,1129.7 1259.5,1136.8M1259.5,1136.8 1263.0,1128.1 1267.8,1119.3 1273.8,1114.5M1281.4,1139.5 1275.2,1144.9 1277.5,1152.4 1278.6,1164.1 1277.2,1169.9M1281.4,1139.5 1284.3,1146.4 1294.8,1147.0 1297.1,1153.9 1296.2,1157.4 1288.6,1157.4 1289.7,1165.0M1287.7,1132.8 1292.8,1138.9 1297.1,1144.9 1299.9,1149.4 1302.8,1156.8 1298.5,1164.1 1294.2,1168.8M1282.0,1180.0 1287.1,1181.4M1122.7,1076.0 1124.4,1083.6 1127.8,1090.4 1128.4,1099.0 1134.7,1109.0M1100.0,1085.8 1110.8,1085.4 1117.3,1084.0 1124.4,1083.6M1117.3,1084.0 1113.6,1094.2 1107.4,1097.6 1108.5,1101.7 1124.1,1111.9 1129.3,1111.9 1133.5,1109.0M1096.3,1111.3 1100.8,1111.6 1108.5,1101.7M1098.3,1099.0 1101.7,1101.3 1107.4,1097.6M1118.7,1151.2 1122.2,1147.9 1130.7,1149.4 1144.9,1143.4 1148.0,1150.6M1144.9,1143.4 1154.0,1132.2 1143.8,1127.2M1115.0,1068.5 1110.8,1060.8 1123.6,1064.7 1129.3,1067.4 1135.0,1067.4M1120.7,1069.7 1122.2,1074.2 1129.3,1078.2 1135.0,1076.0M1331.5,1186.5 1322.7,1194.2 1315.6,1195.1 1308.8,1193.4M1398.1,1205.9 1398.1,1224.5M1358.2,1221.9 1352.6,1225.6 1351.1,1224.2M1079.5,918.1 1078.1,924.6 1082.3,935.3 1081.5,953.0 1086.0,969.1 1076.1,981.0M1055.3,923.0 1048.2,931.6 1038.2,946.1 1031.7,962.8 1032.6,978.1 1029.7,988.4M1065.6,947.5 1059.6,927.7 1055.3,923.0 1071.0,915.7 1079.5,918.1M1076.6,987.3 1075.2,997.6 1077.2,1005.4 1088.0,1017.7 1087.2,1023.4 1092.3,1023.4 1098.0,1031.6 1110.8,1034.2 1110.5,1040.3 1105.9,1046.3M1052.8,1013.3 1063.8,1017.7 1063.8,1024.7 1065.3,1027.0 1065.3,1031.6 1061.0,1040.3 1072.4,1042.5 1078.1,1040.3 1082.3,1048.7M1075.2,997.6 1072.4,1005.4 1063.8,1015.8M1075.2,988.4 1069.5,997.6 1057.0,1000.2M1056.7,1004.3 1066.7,1003.3 1072.4,1006.9M1037.7,1012.9 1039.7,1029.3 1042.5,1031.6 1050.5,1035.5 1061.0,1036.9M1032.0,1031.6 1036.3,1039.0 1045.4,1040.3 1045.6,1043.3 1043.9,1048.7 1046.8,1051.2 1051.0,1053.6 1054.7,1050.4 1055.3,1048.7 1061.0,1043.3M1021.5,1010.9 1016.9,1022.4 1014.1,1029.3 1015.2,1036.0 1020.3,1038.6 1018.6,1044.2 1024.3,1044.2 1034.0,1044.6 1035.4,1040.3 1031.4,1032.5 1039.4,1029.3M1006.7,1027.5 1005.5,1030.2 1012.6,1036.0 1015.2,1036.0M1014.4,1050.0 1016.1,1048.7 1016.9,1051.2 1022.6,1049.2 1026.9,1048.7 1026.9,1047.1 1024.0,1044.6M1018.3,1059.6 1016.6,1058.1 1016.3,1054.1 1014.4,1050.0M1031.1,1048.7 1036.0,1048.7 1036.3,1052.4M991.9,1061.2 998.4,1063.9 1006.1,1065.1M972.0,1067.0 978.5,1066.2 977.4,1070.4 975.7,1075.6 977.1,1080.8 976.0,1084.4M1035.7,1051.2 1042.5,1052.8 1052.2,1054.1 1052.8,1058.8 1052.5,1064.7 1055.3,1067.4 1055.6,1070.4 1055.9,1074.2 1054.2,1075.6M1042.5,1052.8 1042.5,1058.1 1049.6,1064.3M1052.2,1054.1 1061.0,1056.9 1062.1,1059.2 1060.7,1064.7 1061.9,1069.3 1069.5,1070.0 1072.4,1067.8 1076.6,1066.6M1062.1,1060.0 1068.1,1059.6 1078.4,1060.0M1054.7,1050.8 1058.2,1051.6 1061.6,1056.5M1072.4,1042.5 1077.2,1052.8 1081.5,1054.1M1072.1,1070.8 1072.4,1067.8 1076.6,1066.2M1061.0,1036.9 1060.1,1040.8 1061.0,1043.3" fill="none" stroke="#d2c3ce" stroke-width="1.3" stroke-linejoin="round"/>
<path transform="translate(1024,0)" d="M646.3,1038.2 726.2,1038.2 727.3,1036.9 731.0,1039.9 742.4,1041.6 745.3,1045.4 756.6,1048.7 760.3,1051.6 762.6,1062.8 760.6,1065.9 765.2,1067.4 772.3,1063.9 772.0,1061.6 779.4,1060.4 782.2,1056.5 784.5,1054.9 793.6,1054.9 795.0,1053.6 797.9,1049.2 800.2,1045.0 803.6,1045.8 804.1,1052.4 806.1,1054.5M595.9,918.6 595.9,982.2 601.6,983.3 605.9,988.4 610.2,992.2 617.3,1001.3 624.4,1006.4 625.5,1011.9M663.9,1100.7 670.7,1100.0 681.3,1104.7 689.2,1104.7 689.2,1103.0 694.1,1103.0 699.8,1110.3 708.6,1109.6 711.7,1115.5 719.7,1121.9M734.7,1156.8 734.7,1152.4 739.6,1152.4 739.6,1147.0 743.6,1147.0 745.8,1144.9M743.6,1147.0 743.3,1152.7 746.1,1153.3M742.7,1157.1 746.7,1155.6 747.3,1160.3M760.3,1155.3 752.4,1158.9 749.5,1161.2M753.2,1167.0 758.9,1167.3M762.0,1171.1 760.9,1175.1M777.1,1173.7 775.4,1178.0M791.6,1164.7 789.4,1172.8 792.2,1178.5 805.0,1180.5 805.0,1187.1 806.7,1195.4 813.5,1195.1 813.5,1187.1 823.5,1186.3 824.3,1183.7 826.6,1174.2M824.3,1183.7 827.8,1187.1 830.6,1194.2 836.3,1192.8 834.9,1181.7M836.3,1192.8 842.0,1192.0 843.4,1182.3M842.0,1192.0 847.7,1192.2 850.2,1186.5M806.7,1195.4 799.3,1199.9 798.2,1210.5M772.9,1194.5 780.8,1197.6 783.1,1201.1M768.9,1208.2 772.3,1212.7 779.4,1205.6 783.1,1201.1 787.1,1205.3 798.2,1210.5 786.8,1219.9 790.2,1225.6 796.5,1230.0 799.3,1230.0 801.6,1234.3 799.9,1240.2 800.2,1245.2 799.3,1249.1 796.8,1251.8M799.3,1249.1 801.0,1253.6 803.0,1259.6 805.9,1265.4 802.4,1270.4 802.2,1278.3 797.9,1288.0 797.9,1298.0 796.5,1308.4 795.0,1319.1 792.8,1330.4 793.6,1342.1 790.8,1354.5 787.9,1363.2 792.2,1372.3 799.3,1374.1M801.9,1375.5 801.9,1386.1M805.9,1265.4 812.1,1262.7 819.2,1263.6 819.8,1256.6 827.8,1254.5 831.5,1254.5 833.4,1250.0M799.3,1230.0 811.0,1227.1 814.1,1234.3 820.9,1237.3 825.8,1242.3 830.9,1245.5 833.4,1250.0 832.3,1262.7 838.6,1263.6 839.4,1268.9 841.7,1273.9M819.2,1263.6 826.3,1270.4 833.2,1272.9 836.3,1279.3 840.6,1279.9 841.7,1273.9 844.3,1276.7 843.4,1279.0 837.7,1286.4 833.2,1288.7 830.9,1301.4M833.2,1288.7 838.0,1291.3 845.7,1296.3 845.1,1300.4M990.7,1091.8 993.6,1102.0 986.8,1104.0 972.3,1110.3 972.3,1116.4 959.5,1116.4M972.3,1117.7 972.3,1121.9 962.9,1121.9 962.9,1129.7 960.0,1136.5 948.6,1136.5M972.3,1117.7 983.3,1125.0 1000.4,1142.8 1006.4,1143.4 1030.8,1129.7 1025.4,1125.0 1024.0,1109.0 1025.2,1108.3 1029.7,1098.3M1021.5,1085.1 1019.2,1093.8 1024.0,1102.3 1025.2,1108.3M983.3,1125.0 981.9,1153.9 970.0,1153.9 964.3,1155.3 962.3,1155.9 950.6,1150.9M1030.8,1129.7 1039.7,1131.2 1065.3,1134.3 1068.1,1134.3 1068.4,1103.7M1068.1,1134.3 1102.0,1134.3M1065.3,1134.3 1065.3,1141.9 1062.4,1153.3 1061.0,1163.5 1061.9,1167.3M1039.7,1131.2 1041.1,1140.4 1035.7,1159.4 1019.2,1161.2 1008.4,1159.2 1007.2,1165.0 1004.7,1180.3M1006.4,1143.4 1007.0,1153.9 997.9,1155.6 994.2,1155.0 985.6,1160.0 981.4,1166.7 989.0,1169.3 996.7,1167.0 1001.3,1166.7 1003.3,1162.4 1007.2,1165.0M996.7,1167.0 1000.4,1180.8M989.0,1166.7 988.5,1184.3M974.2,1168.5 975.7,1185.7M964.3,1163.0 974.2,1169.3 973.1,1177.1M949.5,1162.7 964.3,1163.0 962.3,1155.9M1036.8,1161.2 1034.8,1169.9 1029.7,1180.0 1021.5,1185.4M1038.2,1161.2 1041.1,1169.9 1041.1,1177.1 1038.2,1184.3 1042.5,1192.8 1049.6,1188.5 1061.0,1185.7 1075.2,1184.3 1063.8,1172.8 1061.9,1167.3M1042.5,1192.8 1024.9,1192.2M1029.1,1192.2 1036.8,1201.3 1029.7,1211.3M1075.2,1184.3 1084.6,1188.5 1082.3,1195.7 1080.9,1202.8 1080.1,1211.3 1084.6,1221.3 1075.2,1231.4 1081.8,1237.3 1065.0,1232.9 1059.6,1229.7 1059.0,1219.3 1034.0,1215.6M1093.7,1186.5 1096.0,1195.7 1093.7,1201.3 1108.5,1211.9M1093.7,1186.5 1099.1,1185.4 1106.5,1188.5 1116.2,1187.1 1115.0,1203.3M1116.2,1187.1 1132.1,1175.7 1119.3,1167.0M1100.8,1156.8 1110.8,1155.6 1119.3,1162.7M1093.7,1169.9 1072.4,1171.4 1061.9,1167.3M1093.7,1169.9 1096.6,1181.4 1099.1,1185.4M1093.7,1169.9 1098.5,1162.7 1100.8,1156.8 1106.8,1147.9M1084.6,1188.5 1093.7,1186.5M1083.8,1201.3 1093.7,1201.3M1065.3,1230.0 1059.6,1235.8 1059.6,1245.5 1063.8,1249.1M1030.6,1248.5 1056.2,1249.1 1063.8,1249.1M1063.8,1249.1 1056.7,1250.6 1056.7,1262.7 1053.9,1262.7 1053.9,1271.4 1053.9,1283.1 1043.9,1283.5M1053.9,1271.4 1069.5,1274.2 1080.3,1263.6 1086.0,1263.9 1090.9,1249.1 1083.5,1243.4 1073.8,1250.3 1069.0,1250.6 1063.8,1249.1M1111.9,1231.4 1096.6,1231.4 1095.1,1238.7 1097.1,1246.1M1083.5,1243.4 1090.9,1238.7 1090.9,1225.4 1084.6,1221.3M1086.0,1263.9 1090.6,1277.7M1136.4,1048.7 1130.7,1028.0 1140.6,1031.6 1153.4,1026.6 1166.2,1030.2 1172.5,1027.0 1171.4,1020.1 1183.3,1011.4 1198.4,1009.9 1199.5,1013.8 1206.1,1017.7 1214.6,1014.3 1223.1,1030.2 1233.1,1029.3 1245.3,1037.3M1245.3,1037.3 1251.6,1030.7 1264.4,1033.8 1278.3,1023.8 1288.6,1032.0 1300.8,1032.9 1303.6,1036.9 1321.3,1032.5 1328.9,1034.7 1341.2,1018.6 1352.6,1017.7 1358.2,1024.7 1361.1,1036.0 1369.6,1042.5 1379.6,1041.6 1379.6,1044.6 1375.3,1054.9 1368.8,1064.7M1245.3,1037.3 1233.1,1046.7 1231.7,1054.9 1225.1,1063.5 1214.6,1072.3 1206.6,1076.0 1210.3,1085.1 1218.3,1090.4 1225.4,1090.0 1221.7,1100.7 1227.7,1107.7 1247.9,1115.5 1249.6,1115.8 1258.7,1117.1 1267.2,1112.2 1274.3,1114.5 1275.8,1125.0 1274.9,1128.1 1284.9,1135.6 1287.7,1132.8 1295.7,1131.9 1304.2,1135.9M1245.3,1037.3 1255.8,1048.7 1260.4,1054.9 1270.9,1064.7 1294.2,1068.5 1304.2,1064.7 1314.2,1056.9 1322.7,1052.4 1336.9,1047.5 1337.5,1043.7 1328.9,1034.7M1156.0,1069.7 1156.3,1054.9 1163.7,1052.4 1173.4,1058.8 1180.5,1060.4 1193.3,1066.6 1198.7,1064.7 1208.9,1062.8 1225.1,1063.5M1150.3,1084.0 1159.1,1083.3 1171.1,1086.8 1171.4,1091.1 1172.8,1104.7 1170.2,1109.6 1173.4,1121.9 1172.2,1124.4M1171.4,1091.1 1183.3,1083.3 1190.4,1084.0 1200.4,1085.1 1210.3,1085.1M1170.2,1109.6 1186.2,1110.6 1194.1,1104.0 1199.0,1095.6 1200.7,1089.3 1210.3,1085.1M1156.0,1069.7 1174.8,1074.2 1186.2,1084.0M1193.3,1072.3 1197.5,1076.0 1204.6,1073.0M1218.3,1090.4 1210.3,1100.7 1206.1,1109.0 1196.1,1118.7 1199.0,1126.6 1191.0,1129.1M1227.7,1107.7 1226.0,1113.9 1235.9,1120.6 1247.3,1120.6M1250.2,1134.0 1248.7,1124.4 1251.6,1120.6 1258.7,1124.4 1257.3,1128.1 1259.5,1129.7 1259.5,1136.8M1259.5,1136.8 1263.0,1128.1 1267.8,1119.3 1273.8,1114.5M1281.4,1139.5 1275.2,1144.9 1277.5,1152.4 1278.6,1164.1 1277.2,1169.9M1281.4,1139.5 1284.3,1146.4 1294.8,1147.0 1297.1,1153.9 1296.2,1157.4 1288.6,1157.4 1289.7,1165.0M1287.7,1132.8 1292.8,1138.9 1297.1,1144.9 1299.9,1149.4 1302.8,1156.8 1298.5,1164.1 1294.2,1168.8M1282.0,1180.0 1287.1,1181.4M1122.7,1076.0 1124.4,1083.6 1127.8,1090.4 1128.4,1099.0 1134.7,1109.0M1100.0,1085.8 1110.8,1085.4 1117.3,1084.0 1124.4,1083.6M1117.3,1084.0 1113.6,1094.2 1107.4,1097.6 1108.5,1101.7 1124.1,1111.9 1129.3,1111.9 1133.5,1109.0M1096.3,1111.3 1100.8,1111.6 1108.5,1101.7M1098.3,1099.0 1101.7,1101.3 1107.4,1097.6M1118.7,1151.2 1122.2,1147.9 1130.7,1149.4 1144.9,1143.4 1148.0,1150.6M1144.9,1143.4 1154.0,1132.2 1143.8,1127.2M1115.0,1068.5 1110.8,1060.8 1123.6,1064.7 1129.3,1067.4 1135.0,1067.4M1120.7,1069.7 1122.2,1074.2 1129.3,1078.2 1135.0,1076.0M1331.5,1186.5 1322.7,1194.2 1315.6,1195.1 1308.8,1193.4M1398.1,1205.9 1398.1,1224.5M1358.2,1221.9 1352.6,1225.6 1351.1,1224.2M1079.5,918.1 1078.1,924.6 1082.3,935.3 1081.5,953.0 1086.0,969.1 1076.1,981.0M1055.3,923.0 1048.2,931.6 1038.2,946.1 1031.7,962.8 1032.6,978.1 1029.7,988.4M1065.6,947.5 1059.6,927.7 1055.3,923.0 1071.0,915.7 1079.5,918.1M1076.6,987.3 1075.2,997.6 1077.2,1005.4 1088.0,1017.7 1087.2,1023.4 1092.3,1023.4 1098.0,1031.6 1110.8,1034.2 1110.5,1040.3 1105.9,1046.3M1052.8,1013.3 1063.8,1017.7 1063.8,1024.7 1065.3,1027.0 1065.3,1031.6 1061.0,1040.3 1072.4,1042.5 1078.1,1040.3 1082.3,1048.7M1075.2,997.6 1072.4,1005.4 1063.8,1015.8M1075.2,988.4 1069.5,997.6 1057.0,1000.2M1056.7,1004.3 1066.7,1003.3 1072.4,1006.9M1037.7,1012.9 1039.7,1029.3 1042.5,1031.6 1050.5,1035.5 1061.0,1036.9M1032.0,1031.6 1036.3,1039.0 1045.4,1040.3 1045.6,1043.3 1043.9,1048.7 1046.8,1051.2 1051.0,1053.6 1054.7,1050.4 1055.3,1048.7 1061.0,1043.3M1021.5,1010.9 1016.9,1022.4 1014.1,1029.3 1015.2,1036.0 1020.3,1038.6 1018.6,1044.2 1024.3,1044.2 1034.0,1044.6 1035.4,1040.3 1031.4,1032.5 1039.4,1029.3M1006.7,1027.5 1005.5,1030.2 1012.6,1036.0 1015.2,1036.0M1014.4,1050.0 1016.1,1048.7 1016.9,1051.2 1022.6,1049.2 1026.9,1048.7 1026.9,1047.1 1024.0,1044.6M1018.3,1059.6 1016.6,1058.1 1016.3,1054.1 1014.4,1050.0M1031.1,1048.7 1036.0,1048.7 1036.3,1052.4M991.9,1061.2 998.4,1063.9 1006.1,1065.1M972.0,1067.0 978.5,1066.2 977.4,1070.4 975.7,1075.6 977.1,1080.8 976.0,1084.4M1035.7,1051.2 1042.5,1052.8 1052.2,1054.1 1052.8,1058.8 1052.5,1064.7 1055.3,1067.4 1055.6,1070.4 1055.9,1074.2 1054.2,1075.6M1042.5,1052.8 1042.5,1058.1 1049.6,1064.3M1052.2,1054.1 1061.0,1056.9 1062.1,1059.2 1060.7,1064.7 1061.9,1069.3 1069.5,1070.0 1072.4,1067.8 1076.6,1066.6M1062.1,1060.0 1068.1,1059.6 1078.4,1060.0M1054.7,1050.8 1058.2,1051.6 1061.6,1056.5M1072.4,1042.5 1077.2,1052.8 1081.5,1054.1M1072.1,1070.8 1072.4,1067.8 1076.6,1066.2M1061.0,1036.9 1060.1,1040.8 1061.0,1043.3" fill="none" stroke="#d2c3ce" stroke-width="1.3" stroke-linejoin="round"/>
<path transform="translate(0,0)" d="M136.9,1458.7 168.0,1464.6 173.2,1470.5 183.5,1473.2 185.2,1478.4 195.6,1468.0 204.2,1462.9 218.0,1454.2 230.1,1455.3 243.9,1450.8 247.4,1444.9 266.4,1448.4 281.9,1456.0 292.3,1450.8 309.5,1457.7 330.2,1453.2 340.6,1456.6 345.8,1451.8 357.9,1452.5 385.5,1459.4 395.8,1468.0 409.6,1469.1 428.6,1480.1 437.3,1487.0 454.5,1493.9 458.0,1499.1 452.8,1514.6 442.4,1525.0 437.3,1535.4 437.3,1552.6 442.4,1563.0 447.6,1556.8 461.4,1557.8 475.2,1560.2 494.2,1568.2 530.5,1573.3 544.3,1563.0 547.7,1555.4 565.0,1555.4 575.4,1538.8 606.4,1528.5 620.2,1522.2 634.0,1520.9 637.5,1512.9 647.9,1516.4 668.6,1518.1 685.8,1526.7 689.3,1530.2 706.5,1528.5 704.8,1516.4 703.1,1509.5 706.5,1499.1 720.3,1499.1 727.2,1503.6 748.0,1507.0 761.8,1514.6 775.6,1504.3 789.4,1509.5 784.2,1493.9 782.5,1485.3 792.8,1473.2 801.5,1462.9 806.6,1456.0 817.0,1443.9 837.7,1431.8 820.5,1449.0 823.9,1462.9 825.6,1500.8 822.2,1526.7 837.7,1538.8 855.0,1557.8 872.3,1566.4 893.0,1566.4 899.9,1559.5 920.6,1542.3 924.0,1531.9 927.5,1518.1 937.8,1511.2 962.0,1497.4 972.6,1486.9 986.7,1484.5 994.6,1478.3 1000.9,1482.2 1010.3,1483.0 1026.0,1481.4 1033.9,1480.6 1038.6,1476.7 1048.0,1479.0 1054.3,1479.8 1066.9,1483.8 1079.5,1479.0 1084.2,1474.3 1092.1,1471.2 1101.5,1478.3 1107.8,1480.6 1110.9,1472.0 1129.8,1461.0 1139.2,1453.9 1150.2,1450.7 1158.1,1454.7 1161.9,1458.7 L1161.9,1610 L136.9,1610 Z" fill="#f2efe9"/>
<path transform="translate(1024,0)" d="M136.9,1458.7 168.0,1464.6 173.2,1470.5 183.5,1473.2 185.2,1478.4 195.6,1468.0 204.2,1462.9 218.0,1454.2 230.1,1455.3 243.9,1450.8 247.4,1444.9 266.4,1448.4 281.9,1456.0 292.3,1450.8 309.5,1457.7 330.2,1453.2 340.6,1456.6 345.8,1451.8 357.9,1452.5 385.5,1459.4 395.8,1468.0 409.6,1469.1 428.6,1480.1 437.3,1487.0 454.5,1493.9 458.0,1499.1 452.8,1514.6 442.4,1525.0 437.3,1535.4 437.3,1552.6 442.4,1563.0 447.6,1556.8 461.4,1557.8 475.2,1560.2 494.2,1568.2 530.5,1573.3 544.3,1563.0 547.7,1555.4 565.0,1555.4 575.4,1538.8 606.4,1528.5 620.2,1522.2 634.0,1520.9 637.5,1512.9 647.9,1516.4 668.6,1518.1 685.8,1526.7 689.3,1530.2 706.5,1528.5 704.8,1516.4 703.1,1509.5 706.5,1499.1 720.3,1499.1 727.2,1503.6 748.0,1507.0 761.8,1514.6 775.6,1504.3 789.4,1509.5 784.2,1493.9 782.5,1485.3 792.8,1473.2 801.5,1462.9 806.6,1456.0 817.0,1443.9 837.7,1431.8 820.5,1449.0 823.9,1462.9 825.6,1500.8 822.2,1526.7 837.7,1538.8 855.0,1557.8 872.3,1566.4 893.0,1566.4 899.9,1559.5 920.6,1542.3 924.0,1531.9 927.5,1518.1 937.8,1511.2 962.0,1497.4 972.6,1486.9 986.7,1484.5 994.6,1478.3 1000.9,1482.2 1010.3,1483.0 1026.0,1481.4 1033.9,1480.6 1038.6,1476.7 1048.0,1479.0 1054.3,1479.8 1066.9,1483.8 1079.5,1479.0 1084.2,1474.3 1092.1,1471.2 1101.5,1478.3 1107.8,1480.6 1110.9,1472.0 1129.8,1461.0 1139.2,1453.9 1150.2,1450.7 1158.1,1454.7 1161.9,1458.7 L1161.9,1610 L136.9,1610 Z" fill="#f2efe9"/>
<g fill="#e9524c" fill-opacity="0.4" stroke="#e9524c" stroke-width="6" stroke-linecap="round" stroke-linejoin="round">
<ellipse cx="721.1" cy="1071.3" rx="72" ry="74"/>
<ellipse cx="726.8" cy="982.3" rx="24" ry="24"/>
<ellipse cx="706.9" cy="1130.0" rx="32" ry="32"/>
<ellipse cx="740.3" cy="1153.8" rx="8" ry="8"/>
<ellipse cx="751.0" cy="1155.3" rx="6" ry="6"/>
<ellipse cx="744.1" cy="1158.8" rx="4" ry="4"/>
<ellipse cx="758.1" cy="1169.9" rx="6" ry="6"/>
<ellipse cx="769.4" cy="1172.8" rx="4" ry="4"/>
<ellipse cx="769.4" cy="1135.8" rx="6" ry="6"/>
<ellipse cx="776.6" cy="1145.7" rx="4" ry="4"/>
<ellipse cx="796.0" cy="1143.4" rx="4" ry="4"/>
<ellipse cx="807.8" cy="1145.7" rx="4" ry="4"/>
<ellipse cx="823.5" cy="1167.0" rx="4" ry="4"/>
<ellipse cx="792.2" cy="1187.0" rx="20" ry="20"/>
<ellipse cx="809.3" cy="1175.7" rx="4" ry="4"/>
<ellipse cx="776.6" cy="1204.2" rx="10" ry="10"/>
<ellipse cx="780.8" cy="1227.4" rx="24" ry="24"/>
<ellipse cx="812.1" cy="1247.6" rx="8" ry="8"/>
<ellipse cx="840.6" cy="1228.1" rx="44" ry="44"/>
<ellipse cx="832.0" cy="1265.8" rx="8" ry="8"/>
<ellipse cx="795.0" cy="1288.4" rx="16" ry="16"/>
<ellipse cx="815.0" cy="1302.3" rx="22" ry="22"/>
<ellipse cx="837.7" cy="1298.1" rx="6" ry="6"/>
<ellipse cx="991.3" cy="1010.8" rx="42" ry="42"/>
<ellipse cx="974.2" cy="1019.9" rx="8" ry="8"/>
<ellipse cx="1002.7" cy="1048.8" rx="30" ry="30"/>
<ellipse cx="1022.6" cy="1026.5" rx="34" ry="34"/>
<ellipse cx="1033.5" cy="1061.4" rx="30" ry="30"/>
<ellipse cx="985.6" cy="1073.1" rx="24" ry="24"/>
<ellipse cx="974.2" cy="1075.8" rx="10" ry="10"/>
<ellipse cx="1013.4" cy="1022.0" rx="12" ry="12"/>
<ellipse cx="1008.4" cy="1029.5" rx="14" ry="14"/>
<ellipse cx="1019.8" cy="1046.5" rx="8" ry="8"/>
<ellipse cx="1034.9" cy="1045.0" rx="12" ry="12"/>
<ellipse cx="1025.4" cy="1005.2" rx="8" ry="8"/>
<ellipse cx="1025.4" cy="971.9" rx="8" ry="8"/>
<ellipse cx="1039.7" cy="971.3" rx="18" ry="18"/>
<ellipse cx="1071.0" cy="959.2" rx="12" ry="12"/>
<ellipse cx="1053.9" cy="1022.7" rx="28" ry="30"/>
<ellipse cx="1041.1" cy="1034.3" rx="16" ry="16"/>
<ellipse cx="1052.5" cy="1039.3" rx="12" ry="12"/>
<ellipse cx="1053.9" cy="1046.0" rx="16" ry="16"/>
<ellipse cx="1039.7" cy="1050.7" rx="6" ry="6"/>
<ellipse cx="1041.1" cy="1054.0" rx="10" ry="10"/>
<ellipse cx="1048.2" cy="1058.7" rx="10" ry="10"/>
<ellipse cx="1056.7" cy="1058.7" rx="10" ry="10"/>
<ellipse cx="1051.9" cy="1064.7" rx="4" ry="4"/>
<ellipse cx="1059.6" cy="1067.2" rx="6" ry="6"/>
<ellipse cx="1053.9" cy="1070.4" rx="4" ry="4"/>
<ellipse cx="1059.6" cy="1077.5" rx="12" ry="12"/>
<ellipse cx="1068.1" cy="1062.4" rx="14" ry="14"/>
<ellipse cx="1068.1" cy="1050.0" rx="20" ry="20"/>
<ellipse cx="1079.5" cy="1046.5" rx="8" ry="8"/>
<ellipse cx="1088.0" cy="1036.6" rx="26" ry="26"/>
<ellipse cx="1076.6" cy="1019.9" rx="8" ry="8"/>
<ellipse cx="1065.3" cy="1005.2" rx="8" ry="8"/>
<ellipse cx="1068.1" cy="1000.1" rx="8" ry="8"/>
<ellipse cx="1071.0" cy="989.4" rx="6" ry="6"/>
<ellipse cx="1281.4" cy="971.8" rx="66" ry="68"/>
<ellipse cx="1096.6" cy="1077.0" rx="20" ry="22"/>
<ellipse cx="1120.7" cy="1066.5" rx="10" ry="10"/>
<ellipse cx="1125.0" cy="1074.1" rx="6" ry="6"/>
<ellipse cx="1132.1" cy="1072.2" rx="6" ry="6"/>
<ellipse cx="1190.4" cy="1042.3" rx="8" ry="8"/>
<ellipse cx="1210.3" cy="1070.4" rx="4" ry="4"/>
<ellipse cx="1181.9" cy="1098.9" rx="6" ry="6"/>
<ellipse cx="1196.1" cy="1108.8" rx="10" ry="10"/>
<ellipse cx="1216.0" cy="1138.7" rx="40" ry="40"/>
<ellipse cx="1235.9" cy="1115.4" rx="6" ry="6"/>
<ellipse cx="1253.0" cy="1128.0" rx="10" ry="10"/>
<ellipse cx="1227.4" cy="1178.5" rx="6" ry="6"/>
<ellipse cx="1275.8" cy="1134.3" rx="8" ry="8"/>
<ellipse cx="1281.4" cy="1155.3" rx="10" ry="10"/>
<ellipse cx="1297.9" cy="1137.2" rx="12" ry="12"/>
<ellipse cx="1317.0" cy="1191.4" rx="10" ry="10"/>
<ellipse cx="1338.3" cy="1212.9" rx="20" ry="20"/>
<ellipse cx="1344.0" cy="1161.1" rx="14" ry="14"/>
<ellipse cx="1295.7" cy="1092.1" rx="4" ry="4"/>
<ellipse cx="1321.7" cy="1133.5" rx="6" ry="6"/>
<ellipse cx="1341.2" cy="1129.6" rx="8" ry="8"/>
<ellipse cx="1359.7" cy="1084.8" rx="12" ry="12"/>
<ellipse cx="1389.5" cy="1088.1" rx="18" ry="18"/>
<ellipse cx="1295.7" cy="1050.8" rx="4" ry="4"/>
<ellipse cx="1147.8" cy="1101.5" rx="24" ry="24"/>
<ellipse cx="1122.2" cy="1098.8" rx="10" ry="10"/>
<ellipse cx="1105.1" cy="1092.1" rx="4" ry="4"/>
<ellipse cx="1098.9" cy="1096.1" rx="6" ry="6"/>
<ellipse cx="1095.8" cy="1103.9" rx="6" ry="6"/>
<ellipse cx="1097.3" cy="1102.3" rx="4" ry="4"/>
<ellipse cx="1099.4" cy="1105.6" rx="8" ry="8"/>
<ellipse cx="1125.0" cy="1125.0" rx="6" ry="6"/>
<ellipse cx="1159.1" cy="1137.4" rx="4" ry="4"/>
<ellipse cx="1082.3" cy="1118.6" rx="10" ry="10"/>
<ellipse cx="1045.4" cy="1125.0" rx="4" ry="4"/>
<ellipse cx="1022.6" cy="1095.4" rx="10" ry="10"/>
<ellipse cx="1005.5" cy="1115.4" rx="4" ry="4"/>
<ellipse cx="982.8" cy="1102.2" rx="8" ry="8"/>
<ellipse cx="1082.3" cy="1155.3" rx="4" ry="4"/>
<ellipse cx="1105.1" cy="1175.7" rx="4" ry="4"/>
<ellipse cx="1105.1" cy="1195.7" rx="4" ry="4"/>
<ellipse cx="1088.0" cy="1195.7" rx="4" ry="4"/>
<ellipse cx="1082.3" cy="1241.7" rx="4" ry="4"/>
<ellipse cx="1082.3" cy="1256.6" rx="4" ry="4"/>
<ellipse cx="1045.4" cy="1262.7" rx="4" ry="4"/>
<ellipse cx="1065.3" cy="1285.3" rx="18" ry="18"/>
<ellipse cx="1375.3" cy="1278.4" rx="8" ry="8"/>
<ellipse cx="1491.9" cy="1326.6" rx="6" ry="6"/>
</g>
<g fill="#e9524c">
<circle cx="744.6" cy="1148.7" r="5"/>
<circle cx="755.2" cy="1161.2" r="5"/>
<circle cx="791.0" cy="1143.4" r="5"/>
<circle cx="780.8" cy="1127.4" r="5"/>
<circle cx="812.8" cy="1101.2" r="5"/>
<circle cx="827.7" cy="1160.7" r="5"/>
<circle cx="823.6" cy="1158.6" r="5"/>
<circle cx="821.6" cy="1163.8" r="5"/>
<circle cx="822.9" cy="1160.5" r="5"/>
<circle cx="821.2" cy="1149.3" r="5"/>
<circle cx="822.5" cy="1154.1" r="5"/>
<circle cx="818.5" cy="1148.4" r="5"/>
<circle cx="823.5" cy="1156.3" r="5"/>
<circle cx="821.8" cy="1151.6" r="5"/>
<circle cx="798.0" cy="1162.7" r="5"/>
<circle cx="800.9" cy="1163.8" r="5"/>
<circle cx="768.0" cy="1141.9" r="5"/>
<circle cx="793.4" cy="1135.1" r="5"/>
<circle cx="813.5" cy="1144.9" r="5"/>
<circle cx="829.2" cy="1184.3" r="5"/>
<circle cx="837.7" cy="1187.1" r="5"/>
<circle cx="846.2" cy="1187.1" r="5"/>
<circle cx="829.2" cy="1371.1" r="5"/>
<circle cx="883.2" cy="898.2" r="5"/>
<circle cx="836.8" cy="1047.4" r="5"/>
<circle cx="1014.5" cy="1034.9" r="5"/>
<circle cx="945.8" cy="953.0" r="5"/>
<circle cx="1090.9" cy="1092.1" r="5"/>
<circle cx="1038.5" cy="1089.2" r="5"/>
<circle cx="977.1" cy="972.1" r="5"/>
<circle cx="1179.0" cy="1070.4" r="5"/>
<circle cx="1199.0" cy="1077.9" r="5"/>
<circle cx="1254.4" cy="1117.1" r="5"/>
<circle cx="1204.6" cy="1189.3" r="5"/>
<circle cx="1295.7" cy="1146.4" r="5"/>
<circle cx="1295.7" cy="1161.2" r="5"/>
<circle cx="1292.3" cy="1194.6" r="5"/>
<circle cx="1323.2" cy="1185.7" r="5"/>
<circle cx="1354.0" cy="1222.9" r="5"/>
<circle cx="1320.0" cy="1133.8" r="5"/>
<circle cx="1133.5" cy="1155.3" r="5"/>
<circle cx="1150.6" cy="1128.1" r="5"/>
<circle cx="1142.8" cy="1123.4" r="5"/>
<circle cx="1140.8" cy="1121.9" r="5"/>
<circle cx="1132.6" cy="1111.1" r="5"/>
<circle cx="962.9" cy="1140.4" r="5"/>
<circle cx="985.6" cy="1149.4" r="5"/>
<circle cx="1019.8" cy="1152.4" r="5"/>
<circle cx="1051.0" cy="1155.3" r="5"/>
<circle cx="1085.2" cy="1178.5" r="5"/>
<circle cx="1107.9" cy="1155.3" r="5"/>
<circle cx="1119.3" cy="1165.6" r="5"/>
<circle cx="1136.4" cy="1169.9" r="5"/>
<circle cx="1082.3" cy="1204.2" r="5"/>
<circle cx="1082.3" cy="1208.5" r="5"/>
<circle cx="1096.6" cy="1215.6" r="5"/>
<circle cx="1068.1" cy="1198.5" r="5"/>
<circle cx="1039.7" cy="1201.3" r="5"/>
<circle cx="1030.4" cy="1201.3" r="5"/>
<circle cx="1025.4" cy="1192.8" r="5"/>
<circle cx="1031.1" cy="1181.4" r="5"/>
<circle cx="1056.7" cy="1178.5" r="5"/>
<circle cx="1019.8" cy="1169.9" r="5"/>
<circle cx="1003.4" cy="1171.4" r="5"/>
<circle cx="1000.3" cy="1175.7" r="5"/>
<circle cx="991.3" cy="1175.7" r="5"/>
<circle cx="982.8" cy="1175.7" r="5"/>
<circle cx="991.3" cy="1161.2" r="5"/>
<circle cx="970.0" cy="1180.0" r="5"/>
<circle cx="964.3" cy="1174.2" r="5"/>
<circle cx="968.6" cy="1167.0" r="5"/>
<circle cx="954.3" cy="1164.1" r="5"/>
<circle cx="949.9" cy="1159.8" r="5"/>
<circle cx="957.2" cy="1158.3" r="5"/>
<circle cx="928.7" cy="1152.4" r="5"/>
<circle cx="1016.9" cy="1195.7" r="5"/>
<circle cx="1049.6" cy="1234.3" r="5"/>
<circle cx="1093.7" cy="1237.3" r="5"/>
<circle cx="1096.6" cy="1251.3" r="5"/>
<circle cx="1065.3" cy="1262.7" r="5"/>
<circle cx="1078.1" cy="1286.4" r="5"/>
<circle cx="1086.6" cy="1276.7" r="5"/>
<circle cx="1130.7" cy="1256.6" r="5"/>
<circle cx="1160.7" cy="1257.4" r="5"/>
<circle cx="1154.9" cy="1260.1" r="5"/>
<circle cx="1125.5" cy="1235.3" r="5"/>
<circle cx="1122.9" cy="1233.4" r="5"/>
<circle cx="1155.3" cy="1211.6" r="5"/>
<circle cx="980.8" cy="1244.4" r="5"/>
<circle cx="960.0" cy="1126.6" r="5"/>
<circle cx="997.0" cy="1198.5" r="5"/>
<circle cx="1415.1" cy="1215.6" r="5"/>
<circle cx="1494.8" cy="1250.6" r="5"/>
<circle cx="1449.3" cy="1221.3" r="5"/>
<circle cx="1472.0" cy="1244.6" r="5"/>
<circle cx="1467.8" cy="1261.1" r="5"/>
<circle cx="598.8" cy="1241.7" r="5"/>
<circle cx="506.8" cy="1237.5" r="5"/>
<circle cx="499.2" cy="1256.6" r="5"/>
<circle cx="1489.1" cy="1194.5" r="5"/>
<circle cx="1474.9" cy="1172.8" r="5"/>
<circle cx="1447.1" cy="1178.8" r="5"/>
<circle cx="1379.6" cy="1177.1" r="5"/>
<circle cx="1471.8" cy="1200.0" r="5"/>
<circle cx="1503.3" cy="1221.3" r="5"/>
<circle cx="495.8" cy="1236.7" r="5"/>
<circle cx="542.6" cy="1260.3" r="5"/>
<circle cx="513.8" cy="1253.7" r="5"/>
<circle cx="507.2" cy="1223.9" r="5"/>
</g>
</svg>
<div class="a" style="left:20px;top:20px;width:52px;height:104px;background:#fff;border-radius:7px;box-shadow:0 2px 9px rgba(0,0,0,0.5)"></div>
<div class="a" style="left:20px;top:70.5px;width:52px;height:2px;background:#ccc"></div>
<svg class="a" style="left:20px;top:20px" width="52" height="104"><path d="M16 29.5 L36.5 29.5 M26.2 19.5 L26.2 39.5" stroke="#000" stroke-width="3.8"/><path d="M16 81 L36.5 81" stroke="#000" stroke-width="3.8"/></svg>
<div class="a" style="left:1327px;top:907px;width:409px;height:33px;background:rgba(255,255,255,0.8)"></div>
<div class="a" style="left:1339px;top:907px;font-size:21.5px;letter-spacing:0.35px;line-height:33px;color:#333;white-space:nowrap"><span style="color:#2f79b3">Leaflet</span> | © <span style="color:#2f79b3">OpenStreetMap</span> contributors</div></div>
</body></html>
